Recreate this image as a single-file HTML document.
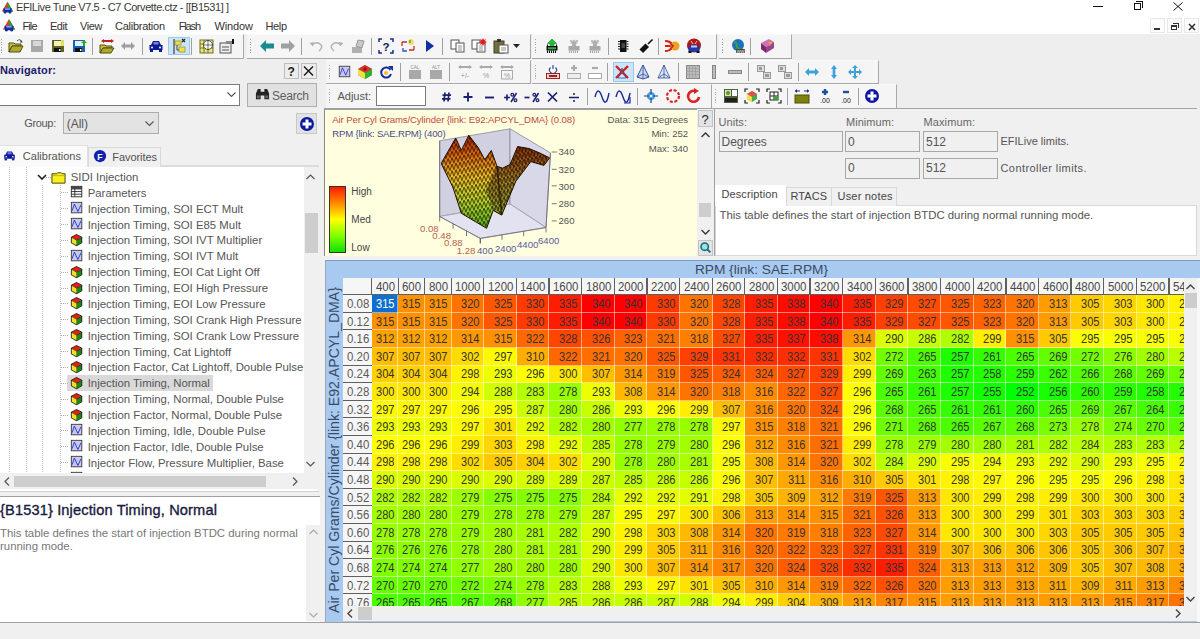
<!DOCTYPE html><html><head><meta charset="utf-8"><style>
html,body{margin:0;padding:0;}
body{width:1200px;height:639px;overflow:hidden;position:relative;background:#f0f0f0;font-family:"Liberation Sans",sans-serif;font-size:12px;color:#000;}
div{position:absolute;box-sizing:border-box;}
.t{white-space:nowrap;}
svg{position:absolute;overflow:visible;}
</style></head><body>

<div style="left:0px;top:0px;width:1200px;height:33.6px;background:#fff;"></div>
<svg style="left:1px;top:1px;" width="13" height="13" viewBox="0 0 16 16"><path d="M8 1l7 12H1z" fill="#e04020"/><path d="M8 1l7 12H8z" fill="#20a040"/><path d="M3 9h10v5H3z" fill="#1030a0"/><circle cx="5" cy="14" r="1.5" fill="#1030a0"/><circle cx="11" cy="14" r="1.5" fill="#1030a0"/><rect x="5" y="9" width="6" height="2" fill="#80a0ff"/></svg>
<div class="t" style="left:16.00px;top:1.69px;font-size:11px;line-height:11px;color:#3a3a3a;letter-spacing:-0.424px;">EFILive Tune V7.5 - C7 Corvette.ctz - [[B1531] ]</div>
<div style="left:1093px;top:6px;width:10px;height:1px;background:#111;"></div>
<div style="left:1133.5px;top:3px;width:7px;height:7px;border:1px solid #111;"></div>
<div style="left:1135.5px;top:1px;width:7px;height:7px;border-top:1px solid #111;border-right:1px solid #111;"></div>
<svg style="left:1173px;top:2px" width="10" height="9"><path d="M0.5 0.5l9 8M9.5 0.5l-9 8" stroke="#111" stroke-width="1"/></svg>
<svg style="left:2px;top:18px;" width="14" height="14" viewBox="0 0 16 16"><path d="M8 1l7 12H1z" fill="#e04020"/><path d="M8 1l7 12H8z" fill="#20a040"/><path d="M3 9h10v5H3z" fill="#1030a0"/><circle cx="5" cy="14" r="1.5" fill="#1030a0"/><circle cx="11" cy="14" r="1.5" fill="#1030a0"/><rect x="5" y="9" width="6" height="2" fill="#80a0ff"/></svg>
<div class="t" style="left:22.50px;top:20.69px;font-size:11px;line-height:11px;color:#333;letter-spacing:-0.908px;">File</div>
<div class="t" style="left:50.00px;top:20.69px;font-size:11px;line-height:11px;color:#333;letter-spacing:-0.485px;">Edit</div>
<div class="t" style="left:80.00px;top:20.69px;font-size:11px;line-height:11px;color:#333;letter-spacing:-0.381px;">View</div>
<div class="t" style="left:115.00px;top:20.69px;font-size:11px;line-height:11px;color:#333;letter-spacing:-0.258px;">Calibration</div>
<div class="t" style="left:178.75px;top:20.69px;font-size:11px;line-height:11px;color:#333;letter-spacing:-1.162px;">Flash</div>
<div class="t" style="left:214.50px;top:20.69px;font-size:11px;line-height:11px;color:#333;letter-spacing:-0.124px;">Window</div>
<div class="t" style="left:265.50px;top:20.69px;font-size:11px;line-height:11px;color:#333;letter-spacing:-0.374px;">Help</div>
<div style="left:1150px;top:18px;width:15px;height:15px;background:#fcfcfc;border:1px solid #e8e8e8;"></div>
<div style="left:1167px;top:18px;width:15px;height:15px;background:#fcfcfc;border:1px solid #e8e8e8;"></div>
<div style="left:1184px;top:18px;width:15px;height:15px;background:#fcfcfc;border:1px solid #e8e8e8;"></div>
<div style="left:1154px;top:28px;width:6px;height:2px;background:#333;"></div>
<div style="left:1171px;top:25px;width:6px;height:5px;border:1px solid #333;border-top-width:2px;"></div>
<div style="left:1173px;top:23px;width:6px;height:5px;border-top:1px solid #333;border-right:1px solid #333;"></div>
<svg style="left:1188px;top:23px" width="8" height="8"><path d="M1 1l6 6M7 1l-6 6" stroke="#333" stroke-width="1.6"/></svg>
<div style="left:0px;top:33.6px;width:1200px;height:75.4px;background:#eeeeee;"></div>
<div style="left:0px;top:34px;width:244px;height:25px;background:#f5f5f5;border-right:1px solid #a8a8a8;border-bottom:1px solid #a8a8a8;border-top:1px solid #fafafa;"></div>
<div style="left:0.5px;top:39.0px;width:1px;height:1.2px;background:#a8a8a8;"></div>
<div style="left:0.5px;top:41.6px;width:1px;height:1.2px;background:#a8a8a8;"></div>
<div style="left:0.5px;top:44.2px;width:1px;height:1.2px;background:#a8a8a8;"></div>
<div style="left:0.5px;top:46.8px;width:1px;height:1.2px;background:#a8a8a8;"></div>
<div style="left:0.5px;top:49.4px;width:1px;height:1.2px;background:#a8a8a8;"></div>
<div style="left:0.5px;top:52.0px;width:1px;height:1.2px;background:#a8a8a8;"></div>
<div style="left:247px;top:34px;width:284px;height:25px;background:#f5f5f5;border-right:1px solid #a8a8a8;border-bottom:1px solid #a8a8a8;border-top:1px solid #fafafa;"></div>
<div style="left:249.5px;top:39.0px;width:1px;height:1.2px;background:#a8a8a8;"></div>
<div style="left:249.5px;top:41.6px;width:1px;height:1.2px;background:#a8a8a8;"></div>
<div style="left:249.5px;top:44.2px;width:1px;height:1.2px;background:#a8a8a8;"></div>
<div style="left:249.5px;top:46.8px;width:1px;height:1.2px;background:#a8a8a8;"></div>
<div style="left:249.5px;top:49.4px;width:1px;height:1.2px;background:#a8a8a8;"></div>
<div style="left:249.5px;top:52.0px;width:1px;height:1.2px;background:#a8a8a8;"></div>
<div style="left:532px;top:34px;width:185px;height:25px;background:#f5f5f5;border-right:1px solid #a8a8a8;border-bottom:1px solid #a8a8a8;border-top:1px solid #fafafa;"></div>
<div style="left:534.5px;top:39.0px;width:1px;height:1.2px;background:#a8a8a8;"></div>
<div style="left:534.5px;top:41.6px;width:1px;height:1.2px;background:#a8a8a8;"></div>
<div style="left:534.5px;top:44.2px;width:1px;height:1.2px;background:#a8a8a8;"></div>
<div style="left:534.5px;top:46.8px;width:1px;height:1.2px;background:#a8a8a8;"></div>
<div style="left:534.5px;top:49.4px;width:1px;height:1.2px;background:#a8a8a8;"></div>
<div style="left:534.5px;top:52.0px;width:1px;height:1.2px;background:#a8a8a8;"></div>
<div style="left:719px;top:34px;width:73px;height:25px;background:#f5f5f5;border-right:1px solid #a8a8a8;border-bottom:1px solid #a8a8a8;border-top:1px solid #fafafa;"></div>
<div style="left:721.5px;top:39.0px;width:1px;height:1.2px;background:#a8a8a8;"></div>
<div style="left:721.5px;top:41.6px;width:1px;height:1.2px;background:#a8a8a8;"></div>
<div style="left:721.5px;top:44.2px;width:1px;height:1.2px;background:#a8a8a8;"></div>
<div style="left:721.5px;top:46.8px;width:1px;height:1.2px;background:#a8a8a8;"></div>
<div style="left:721.5px;top:49.4px;width:1px;height:1.2px;background:#a8a8a8;"></div>
<div style="left:721.5px;top:52.0px;width:1px;height:1.2px;background:#a8a8a8;"></div>
<div style="left:167.7px;top:37px;width:22px;height:18.3px;background:#cce4f7;border:1px solid #99c9ef;"></div>
<svg style="left:7.6px;top:38px;" width="16" height="16" viewBox="0 0 16 16"><path d="M1 5h5l1 1h6v2H4L1 14z" fill="#c8c040" stroke="#505010" stroke-width="1"/><path d="M1 14l3-6h11l-3 6z" fill="#b0a830" stroke="#505010"/><path d="M9 3q3-3 5 1" fill="none" stroke="#555" stroke-width="1"/><path d="M13 2l1.5 2.5-2.5 0z" fill="#333"/></svg>
<svg style="left:29px;top:38px;" width="16" height="16" viewBox="0 0 16 16"><rect x="2" y="2" width="12" height="12" fill="#a8a8a8"/><rect x="4" y="3" width="8" height="5" fill="#d8d8d8"/></svg>
<svg style="left:50px;top:38px;" width="16" height="16" viewBox="0 0 16 16"><rect x="2" y="2" width="12" height="12" fill="#606020"/><rect x="4" y="3" width="8" height="5" fill="#f0f0c0"/><rect x="4" y="10" width="7" height="4" fill="#111"/><rect x="9" y="11" width="1.5" height="2" fill="#eee"/><rect x="11" y="2" width="3" height="6" fill="#e0e060"/></svg>
<svg style="left:71px;top:38px;" width="16" height="16" viewBox="0 0 16 16"><rect x="2" y="2" width="12" height="12" fill="#1a60b0"/><rect x="4" y="3" width="8" height="5" fill="#e0f0ff"/><rect x="4" y="10" width="7" height="4" fill="#111"/><rect x="9" y="11" width="1.5" height="2" fill="#eee"/><path d="M10 5l3-3 3 3h-2v3h-2V5z" fill="#20b020"/></svg>
<svg style="left:99px;top:38px;" width="16" height="16" viewBox="0 0 16 16"><path d="M1 7h5l1 1h6v2H4L1 15z" fill="#c8c040" stroke="#505010"/><path d="M1 15l3-5h11l-3 5z" fill="#b0a830" stroke="#505010"/><path d="M4 3h9" stroke="#c02020" stroke-width="2"/><path d="M2 3l3-2v4z M15 3l-3-2v4z" fill="#c02020"/></svg>
<svg style="left:120px;top:38px;" width="16" height="16" viewBox="0 0 16 16"><path d="M1 8l4-4v2.5h6V4l4 4-4 4V9.5H5V12z" fill="#a0a0a0"/></svg>
<svg style="left:148px;top:38px;" width="16" height="16" viewBox="0 0 16 16"><path d="M3 7l2-4h6l2 4h1.5v5h-13V7z" fill="#0a1a9a"/><rect x="5.5" y="4" width="5" height="2.5" fill="#8080d0"/><circle cx="4" cy="9.5" r="1" fill="#fff"/><circle cx="12" cy="9.5" r="1" fill="#fff"/><rect x="2" y="12" width="3" height="2" fill="#0a1a9a"/><rect x="11" y="12" width="3" height="2" fill="#0a1a9a"/></svg>
<svg style="left:170.5px;top:38px;" width="16" height="16" viewBox="0 0 16 16"><path d="M3 1v15" stroke="#222"/><rect x="4" y="3" width="6" height="4" fill="#f0e040" stroke="#808020" stroke-width="0.6"/><rect x="8" y="9" width="6" height="5" fill="#f0e040" stroke="#808020" stroke-width="0.6"/><path d="M6 7v5h2" fill="none" stroke="#444"/><path d="M11 1l3 3M14 1l-3 3" stroke="#222" stroke-width="1.2"/></svg>
<svg style="left:198px;top:38px;" width="16" height="16" viewBox="0 0 16 16"><rect x="2" y="2" width="13" height="13" fill="#e8e880" stroke="#707020"/><path d="M2 6h13M2 10h13M6 2v13M10 2v13" stroke="#707020"/><circle cx="10" cy="7" r="4.5" fill="#fff" stroke="#333" stroke-width="0.8"/><path d="M10 2v10M5 7h10" stroke="#333" stroke-width="0.7"/></svg>
<svg style="left:219px;top:38px;" width="16" height="16" viewBox="0 0 16 16"><rect x="1" y="5" width="11" height="10" fill="#eee" stroke="#555"/><path d="M3 9h7M3 12h7" stroke="#555"/><path d="M7 3h6l1 3H7z" fill="#888"/><rect x="13" y="1" width="2" height="5" fill="#111"/></svg>
<div style="left:91.7px;top:38px;width:1px;height:17px;background:#a0a0a0;"></div>
<div style="left:141.7px;top:38px;width:1px;height:17px;background:#a0a0a0;"></div>
<div style="left:191px;top:38px;width:1px;height:17px;background:#a0a0a0;"></div>
<svg style="left:259px;top:38px;" width="16" height="16" viewBox="0 0 16 16"><path d="M1 8l6-6v3.5h8v5H7V14z" fill="#1a8a90"/></svg>
<svg style="left:280px;top:38px;" width="16" height="16" viewBox="0 0 16 16"><path d="M15 8l-6-6v3.5H1v5h8V14z" fill="#a0a0a0"/></svg>
<svg style="left:308px;top:38px;" width="16" height="16" viewBox="0 0 16 16"><path d="M4 7q4-4 8-1t-1 7" fill="none" stroke="#b0b0b0" stroke-width="1.5"/><path d="M1.5 5l4.5-1-1 4.5z" fill="#b0b0b0"/></svg>
<svg style="left:329px;top:38px;" width="16" height="16" viewBox="0 0 16 16"><path d="M12 7q-4-4-8-1t1 7" fill="none" stroke="#b0b0b0" stroke-width="1.5"/><path d="M14.5 5l-4.5-1 1 4.5z" fill="#b0b0b0"/></svg>
<svg style="left:350px;top:38px;" width="16" height="16" viewBox="0 0 16 16"><path d="M2 9h10v6H2z" fill="#b0b0b0"/><path d="M8 2l6 1-2 7-6-2z" fill="#c8c8c8" stroke="#999"/></svg>
<svg style="left:378px;top:38px;" width="16" height="16" viewBox="0 0 16 16"><path d="M1 4V1h3M12 1h3v3M15 12v3h-3M4 15H1v-3" fill="none" stroke="#1a2a8a" stroke-width="1.5"/><text x="8" y="12.5" font-size="11.5" font-weight="bold" text-anchor="middle" fill="#101a50" font-family="Liberation Sans">?</text></svg>
<svg style="left:400px;top:38px;" width="16" height="16" viewBox="0 0 16 16"><path d="M2 4h5M2 4v4M14 12H9M14 12V8" fill="none" stroke="#c03030" stroke-width="1.3"/><circle cx="11" cy="4" r="3" fill="#f0e060"/><path d="M3 10v3h4" fill="none" stroke="#3050c0" stroke-width="1.3"/><path d="M10 2v3" stroke="#3050c0"/></svg>
<svg style="left:422px;top:38px;" width="16" height="16" viewBox="0 0 16 16"><path d="M4 2l8 6-8 6z" fill="#1030a0"/></svg>
<svg style="left:450px;top:38px;" width="16" height="16" viewBox="0 0 16 16"><rect x="1" y="2" width="8" height="9" fill="#fff" stroke="#555"/><rect x="6" y="5" width="8" height="9" fill="#fff" stroke="#555"/><path d="M8 8h4M8 10h4M8 12h4" stroke="#777" stroke-width="0.8"/></svg>
<svg style="left:471px;top:38px;" width="16" height="16" viewBox="0 0 16 16"><rect x="1" y="2" width="8" height="9" fill="#fff" stroke="#555"/><rect x="6" y="5" width="8" height="9" fill="#fff" stroke="#555"/><path d="M8 8h4M8 10h4M8 12h4" stroke="#777" stroke-width="0.8"/><path d="M12 0l1 2 2-1-1 2 2 1-2 1 1 2-2-1-1 2-1-2-2 1 1-2-2-1 2-1-1-2 2 1z" fill="#e02020"/></svg>
<svg style="left:493px;top:38px;" width="16" height="16" viewBox="0 0 16 16"><rect x="1" y="3" width="10" height="12" fill="#707038" stroke="#404020"/><rect x="4" y="1" width="4" height="3" fill="#333"/><rect x="6" y="7" width="9" height="8" fill="#fff" stroke="#555"/><path d="M8 10h5M8 12h5" stroke="#777" stroke-width="0.8"/></svg>
<svg style="left:513px;top:44px" width="7" height="4"><path d="M0 0h7l-3.5 4z" fill="#222"/></svg>
<div style="left:301px;top:38px;width:1px;height:17px;background:#a0a0a0;"></div>
<div style="left:371px;top:38px;width:1px;height:17px;background:#a0a0a0;"></div>
<div style="left:442px;top:38px;width:1px;height:17px;background:#a0a0a0;"></div>
<svg style="left:544px;top:38px;" width="16" height="16" viewBox="0 0 16 16"><path d="M8 1l4.5 4.5H10v3H6v-3H3.5z" fill="#20c040" stroke="#108020" stroke-width="0.6"/><rect x="2.5" y="8" width="11" height="4.5" fill="#111"/><rect x="4" y="9.3" width="8" height="2" fill="#30b040"/><path d="M3.5 12.5v2.5M5.5 12.5v2.5M7.5 12.5v2.5M9.5 12.5v2.5M11.5 12.5v2.5M3.5 8v-1.5M12.5 8v-1.5" stroke="#111" stroke-width="1.1"/></svg>
<svg style="left:566px;top:38px;" width="16" height="16" viewBox="0 0 16 16"><path d="M8 1.5l4 4H10v3H6v-3H4z" fill="#b0b0b0"/><path d="M4 3h2M10 3h2" stroke="#aaa" stroke-width="1.5"/><rect x="2.5" y="8" width="11" height="4.5" fill="#a8a8a8"/><path d="M3.5 12.5v2.5M5.5 12.5v2.5M7.5 12.5v2.5M9.5 12.5v2.5M11.5 12.5v2.5" stroke="#aaa" stroke-width="1.1"/></svg>
<svg style="left:587px;top:38px;" width="16" height="16" viewBox="0 0 16 16"><path d="M8 1.5l4 4H10v3H6v-3H4z" fill="#b0b0b0"/><path d="M4 3h2M10 3h2" stroke="#aaa" stroke-width="1.5"/><rect x="2.5" y="8" width="11" height="4.5" fill="#a8a8a8"/><path d="M3.5 12.5v2.5M5.5 12.5v2.5M7.5 12.5v2.5M9.5 12.5v2.5M11.5 12.5v2.5" stroke="#aaa" stroke-width="1.1"/></svg>
<svg style="left:615px;top:38px;" width="16" height="16" viewBox="0 0 16 16"><rect x="5" y="2" width="6.5" height="12" fill="#111"/><path d="M3 3.5h2M3 6h2M3 8.5h2M3 11h2M11.5 3.5h2M11.5 6h2M11.5 8.5h2M11.5 11h2" stroke="#222" stroke-width="1.2"/><rect x="6.5" y="5" width="3.5" height="5" fill="#444"/></svg>
<svg style="left:638px;top:38px;" width="16" height="16" viewBox="0 0 16 16"><path d="M10 6l4.5-4.5" stroke="#111" stroke-width="1.6"/><path d="M1.5 11.5l6-6 3.5 3.5-6 6z" fill="#111"/><path d="M3 13.5l1 1" stroke="#fff" stroke-width="0.8"/></svg>
<svg style="left:664px;top:38px;" width="16" height="16" viewBox="0 0 16 16"><path d="M1 3q5 0 7 3M1 8h6M1 13q5 0 7-3" fill="none" stroke="#d02010" stroke-width="2"/><circle cx="11" cy="8" r="4.5" fill="#f0a020"/><path d="M6 5l3 3-3 3" fill="none" stroke="#c02010" stroke-width="1.5"/></svg>
<svg style="left:686px;top:38px;" width="16" height="16" viewBox="0 0 16 16"><circle cx="8" cy="7.5" r="7" fill="#b01818"/><path d="M5 3l2 3M11 3l-2 3" stroke="#f0c0c0" stroke-width="1"/><path d="M2.5 10l1.5-3h8l1.5 3v3.5h-11z" fill="#1a3ab0"/><rect x="5" y="7.5" width="6" height="2" fill="#c0d0ff"/><rect x="2.5" y="13" width="3" height="2" fill="#111"/><rect x="10.5" y="13" width="3" height="2" fill="#111"/></svg>
<div style="left:608px;top:38px;width:1px;height:17px;background:#a0a0a0;"></div>
<div style="left:658px;top:38px;width:1px;height:17px;background:#a0a0a0;"></div>
<svg style="left:730px;top:38px;" width="16" height="16" viewBox="0 0 16 16"><circle cx="8" cy="7" r="6" fill="#2070c0"/><path d="M4 4q3 1 3 4t3 3" fill="none" stroke="#40a040" stroke-width="2"/><rect x="6" y="11" width="9" height="4" rx="1" fill="#444"/><text x="10.5" y="14.5" font-size="4" fill="#fff" text-anchor="middle" font-family="Liberation Sans">WW</text></svg>
<svg style="left:759px;top:38px;" width="16" height="16" viewBox="0 0 16 16"><path d="M2 5l8-4 5 3-8 5z" fill="#d070b0"/><path d="M2 5l5 4v6l-5-4z" fill="#7a2a6a"/><path d="M7 9l8-5v6l-8 5z" fill="#a04090"/><text x="9" y="8" font-size="6" fill="#f0c020" font-family="Liberation Sans" font-weight="bold">?</text></svg>
<div style="left:750px;top:38px;width:1px;height:17px;background:#a0a0a0;"></div>
<div style="left:326px;top:60px;width:205px;height:24px;background:#f5f5f5;border-right:1px solid #a8a8a8;border-bottom:1px solid #a8a8a8;border-top:1px solid #fafafa;"></div>
<div style="left:328.5px;top:65.0px;width:1px;height:1.2px;background:#a8a8a8;"></div>
<div style="left:328.5px;top:67.6px;width:1px;height:1.2px;background:#a8a8a8;"></div>
<div style="left:328.5px;top:70.2px;width:1px;height:1.2px;background:#a8a8a8;"></div>
<div style="left:328.5px;top:72.8px;width:1px;height:1.2px;background:#a8a8a8;"></div>
<div style="left:328.5px;top:75.4px;width:1px;height:1.2px;background:#a8a8a8;"></div>
<div style="left:328.5px;top:78.0px;width:1px;height:1.2px;background:#a8a8a8;"></div>
<div style="left:532px;top:60px;width:347px;height:24px;background:#f5f5f5;border-right:1px solid #a8a8a8;border-bottom:1px solid #a8a8a8;border-top:1px solid #fafafa;"></div>
<div style="left:534.5px;top:65.0px;width:1px;height:1.2px;background:#a8a8a8;"></div>
<div style="left:534.5px;top:67.6px;width:1px;height:1.2px;background:#a8a8a8;"></div>
<div style="left:534.5px;top:70.2px;width:1px;height:1.2px;background:#a8a8a8;"></div>
<div style="left:534.5px;top:72.8px;width:1px;height:1.2px;background:#a8a8a8;"></div>
<div style="left:534.5px;top:75.4px;width:1px;height:1.2px;background:#a8a8a8;"></div>
<div style="left:534.5px;top:78.0px;width:1px;height:1.2px;background:#a8a8a8;"></div>
<div style="left:612.5px;top:61.8px;width:21px;height:20px;background:#cce4f7;border:1px solid #99c9ef;"></div>
<svg style="left:338px;top:65px;" width="13" height="13" viewBox="0 0 16 16"><rect x="1.5" y="1.5" width="13" height="13" fill="#c8c8e8" stroke="#333"/><path d="M2.5 12L5.5 3.5 9.5 12.5 13 4.5" fill="none" stroke="#2a3ad0" stroke-width="1.1"/></svg>
<svg style="left:357px;top:64px;" width="16" height="16" viewBox="0 0 16 16"><path d="M8 1l7 4v6l-7 4-7-4V5z" fill="#20a020"/><path d="M8 1l7 4-7 4-7-4z" fill="#e03030"/><path d="M1 5l7 4v6l-7-4z" fill="#f0e040"/><path d="M8 9l7-4v6l-7 4z" fill="#30b030"/><circle cx="8" cy="5" r="1.8" fill="#a01010"/></svg>
<svg style="left:378px;top:64px;" width="16" height="16" viewBox="0 0 16 16"><path d="M12.5 6A5 5 0 1 0 13 10" fill="none" stroke="#1a2a9a" stroke-width="2"/><path d="M10 2h5v5z" fill="#1a2a9a"/><circle cx="8" cy="9" r="2" fill="#f0c020"/></svg>
<svg style="left:407px;top:64px;" width="16" height="16" viewBox="0 0 16 16"><text x="8" y="5" font-size="4.5" fill="#888" text-anchor="middle" font-family="Liberation Sans">CAL</text><rect x="2" y="6" width="12" height="9" fill="#a8a8a8"/></svg>
<svg style="left:428px;top:64px;" width="16" height="16" viewBox="0 0 16 16"><text x="8" y="5" font-size="4.5" fill="#888" text-anchor="middle" font-family="Liberation Sans">ALT</text><rect x="2" y="6" width="12" height="9" fill="#a8a8a8"/></svg>
<svg style="left:457px;top:64px;" width="16" height="16" viewBox="0 0 16 16"><path d="M2 3h12" stroke="#aaa" stroke-width="2"/><path d="M1 3l3-2v4zM15 3l-3-2v4z" fill="#aaa"/><text x="8" y="14" font-size="7" fill="#999" text-anchor="middle" font-family="Liberation Sans">+/-</text></svg>
<svg style="left:478px;top:64px;" width="16" height="16" viewBox="0 0 16 16"><path d="M2 3h12" stroke="#aaa" stroke-width="2"/><path d="M1 3l3-2v4zM15 3l-3-2v4z" fill="#aaa"/><text x="8" y="14" font-size="7" fill="#999" text-anchor="middle" font-family="Liberation Sans">%</text></svg>
<svg style="left:499px;top:64px;" width="16" height="16" viewBox="0 0 16 16"><path d="M2 3h12" stroke="#aaa" stroke-width="2"/><path d="M1 3l3-2v4zM15 3l-3-2v4z" fill="#aaa"/><rect x="2.5" y="6.5" width="11" height="8.5" fill="none" stroke="#aaa"/><text x="8" y="13.5" font-size="7" fill="#999" text-anchor="middle" font-family="Liberation Sans">%</text></svg>
<div style="left:399.5px;top:63px;width:1px;height:18px;background:#a0a0a0;"></div>
<div style="left:449px;top:63px;width:1px;height:18px;background:#a0a0a0;"></div>
<svg style="left:544.5px;top:64px;" width="16" height="16" viewBox="0 0 16 16"><path d="M5.5 3.5a3.5 3.5 0 1 0 5 0" fill="none" stroke="#3050a0" stroke-width="1.2"/><path d="M8 1v4" stroke="#3050a0" stroke-width="1.2"/><rect x="1.5" y="9.5" width="13" height="5" fill="#f0d0d0" stroke="#a02020"/><rect x="4" y="11" width="8" height="2" fill="#a02020"/></svg>
<svg style="left:566px;top:64px;" width="16" height="16" viewBox="0 0 16 16"><path d="M8 1v6M5 4h6" stroke="#aaa" stroke-width="2.2"/><rect x="1.5" y="9.5" width="13" height="5" fill="#eee" stroke="#aaa"/></svg>
<svg style="left:587px;top:64px;" width="16" height="16" viewBox="0 0 16 16"><path d="M5 4h6" stroke="#aaa" stroke-width="2.2"/><rect x="1.5" y="9.5" width="13" height="5" fill="#fff" stroke="#aaa"/></svg>
<svg style="left:614px;top:64px;" width="16" height="16" viewBox="0 0 16 16"><path d="M2 2l12 12M14 2L2 14" stroke="#d02020" stroke-width="2.4"/><path d="M8 4l4 10H4z" fill="none" stroke="#3050a0" stroke-width="0.8"/></svg>
<svg style="left:635px;top:64px;" width="16" height="16" viewBox="0 0 16 16"><path d="M8 1l6 12-6 2-6-2z" fill="#d0d8f0" stroke="#3050a0"/><path d="M8 1v14M2 13l6-3 6 3" fill="none" stroke="#3050a0" stroke-width="0.8"/></svg>
<svg style="left:656px;top:64px;" width="16" height="16" viewBox="0 0 16 16"><path d="M8 1l6 13H2z" fill="#e0e8f8" stroke="#3050a0" stroke-width="0.8"/><path d="M8 1v13M2 14l6-4 6 4" fill="none" stroke="#3050a0" stroke-width="0.8"/></svg>
<svg style="left:685px;top:64px;" width="16" height="16" viewBox="0 0 16 16"><rect x="1.5" y="1.5" width="13" height="13" fill="#bbb" stroke="#888"/><path d="M1 4.5h14M1 7.5h14M1 10.5h14M4.5 1v14M7.5 1v14M10.5 1v14" stroke="#999" stroke-width="0.6"/></svg>
<svg style="left:706px;top:64px;" width="16" height="16" viewBox="0 0 16 16"><rect x="6.5" y="1.5" width="3" height="13" fill="#bbb" stroke="#888"/></svg>
<svg style="left:727px;top:64px;" width="16" height="16" viewBox="0 0 16 16"><rect x="1.5" y="6.5" width="13" height="3" fill="#bbb" stroke="#888"/></svg>
<svg style="left:756px;top:64px;" width="16" height="16" viewBox="0 0 16 16"><rect x="1.5" y="1.5" width="7" height="6" fill="#ddd" stroke="#999"/><rect x="7.5" y="8.5" width="7" height="6" fill="#ddd" stroke="#999"/><rect x="3" y="3" width="3" height="3" fill="#999"/><rect x="9" y="10" width="4" height="3" fill="#999"/></svg>
<svg style="left:777px;top:64px;" width="16" height="16" viewBox="0 0 16 16"><rect x="1.5" y="1.5" width="7" height="6" fill="#ddd" stroke="#999"/><rect x="7.5" y="8.5" width="7" height="6" fill="#ddd" stroke="#999"/><rect x="3" y="3" width="3" height="3" fill="#999"/><rect x="9" y="10" width="4" height="3" fill="#999"/></svg>
<svg style="left:804px;top:64px;" width="16" height="16" viewBox="0 0 16 16"><path d="M1 8l4-4v2.5h6V4l4 4-4 4V9.5H5V12z" fill="#40a0d8"/></svg>
<svg style="left:826px;top:64px;" width="16" height="16" viewBox="0 0 16 16"><path d="M8 1l3 4H9.3v6H11l-3 4-3-4h1.7V5H5z" fill="#40a0d8"/></svg>
<svg style="left:847px;top:64px;" width="16" height="16" viewBox="0 0 16 16"><path d="M8 1l3 3H9v3h3V5l3 3-3 3V9H9v3h2l-3 3-3-3h2V9H4v2L1 8l3-3v2h3V4H5z" fill="#40a0d8"/></svg>
<div style="left:606.7px;top:63px;width:1px;height:18px;background:#a0a0a0;"></div>
<div style="left:678px;top:63px;width:1px;height:18px;background:#a0a0a0;"></div>
<div style="left:748px;top:63px;width:1px;height:18px;background:#a0a0a0;"></div>
<div style="left:797.5px;top:63px;width:1px;height:18px;background:#a0a0a0;"></div>
<div style="left:326px;top:84px;width:385.70000000000005px;height:25px;background:#f5f5f5;border-right:1px solid #a8a8a8;border-bottom:1px solid #a8a8a8;border-top:1px solid #fafafa;"></div>
<div style="left:328.5px;top:89.0px;width:1px;height:1.2px;background:#a8a8a8;"></div>
<div style="left:328.5px;top:91.6px;width:1px;height:1.2px;background:#a8a8a8;"></div>
<div style="left:328.5px;top:94.2px;width:1px;height:1.2px;background:#a8a8a8;"></div>
<div style="left:328.5px;top:96.8px;width:1px;height:1.2px;background:#a8a8a8;"></div>
<div style="left:328.5px;top:99.4px;width:1px;height:1.2px;background:#a8a8a8;"></div>
<div style="left:328.5px;top:102.0px;width:1px;height:1.2px;background:#a8a8a8;"></div>
<div style="left:712px;top:84px;width:185px;height:25px;background:#f5f5f5;border-right:1px solid #a8a8a8;border-bottom:1px solid #a8a8a8;border-top:1px solid #fafafa;"></div>
<div style="left:714.5px;top:89.0px;width:1px;height:1.2px;background:#a8a8a8;"></div>
<div style="left:714.5px;top:91.6px;width:1px;height:1.2px;background:#a8a8a8;"></div>
<div style="left:714.5px;top:94.2px;width:1px;height:1.2px;background:#a8a8a8;"></div>
<div style="left:714.5px;top:96.8px;width:1px;height:1.2px;background:#a8a8a8;"></div>
<div style="left:714.5px;top:99.4px;width:1px;height:1.2px;background:#a8a8a8;"></div>
<div style="left:714.5px;top:102.0px;width:1px;height:1.2px;background:#a8a8a8;"></div>
<div class="t" style="left:337.50px;top:90.69px;font-size:11px;line-height:11px;color:#555;letter-spacing:-0.021px;">Adjust:</div>
<div style="left:376px;top:86px;width:50px;height:20px;background:#fff;border:1px solid #7a7a7a;"></div>
<svg style="left:440px;top:90px" width="150" height="16" viewBox="440 90 150 16"><path d="M445 92.5l-1 9M449 92.5l-1 9M442.5 95.2h8.5M442 98.8h8.5" stroke="#1a2070" stroke-width="1.7"/><path d="M468 92.5v9M463.5 97h9" stroke="#1a2070" stroke-width="1.9"/><path d="M485 97.5h9" stroke="#1a2070" stroke-width="1.9"/><path d="M507 94.5v6M504 97.5h6" stroke="#1a2070" stroke-width="1.7"/><path d="M516.5 93l-5.5 9" stroke="#1a2070" stroke-width="1.5"/><circle cx="512.3" cy="94.8" r="1.4" fill="none" stroke="#1a2070" stroke-width="1.2"/><circle cx="515.5" cy="100.2" r="1.4" fill="none" stroke="#1a2070" stroke-width="1.2"/><path d="M524.5 97.5h5" stroke="#1a2070" stroke-width="1.7"/><path d="M538.5 93l-5.5 9" stroke="#1a2070" stroke-width="1.5"/><circle cx="534.3" cy="94.8" r="1.4" fill="none" stroke="#1a2070" stroke-width="1.2"/><circle cx="537.5" cy="100.2" r="1.4" fill="none" stroke="#1a2070" stroke-width="1.2"/><path d="M548 92.5l9 9M557 92.5l-9 9" stroke="#1a2070" stroke-width="1.7"/><path d="M569 97.5h10" stroke="#1a2070" stroke-width="1.5"/><circle cx="574" cy="94" r="1" fill="#1a2070"/><circle cx="574" cy="101" r="1" fill="#1a2070"/></svg>
<svg style="left:593.5px;top:88px;" width="16" height="16" viewBox="0 0 16 16"><path d="M1 9q3-12 7 0t7-4" fill="none" stroke="#1a2a9a" stroke-width="1.4"/></svg>
<svg style="left:615px;top:88px;" width="16" height="16" viewBox="0 0 16 16"><path d="M1 9q3-12 7 0t7-4" fill="none" stroke="#1a2a9a" stroke-width="1.4"/><path d="M9 15h6V9" fill="none" stroke="#1a2a9a" stroke-width="1.2"/></svg>
<svg style="left:643px;top:88px;" width="16" height="16" viewBox="0 0 16 16"><circle cx="8" cy="8" r="4" fill="#40a8e8"/><path d="M8 1v14M1 8h14" stroke="#1a3a9a" stroke-width="1.2"/><circle cx="8" cy="8" r="1.5" fill="#fff"/></svg>
<svg style="left:664.5px;top:88px;" width="16" height="16" viewBox="0 0 16 16"><circle cx="8" cy="8" r="6" fill="none" stroke="#e02020" stroke-width="2.2" stroke-dasharray="3 1.7"/></svg>
<svg style="left:685.5px;top:88px;" width="16" height="16" viewBox="0 0 16 16"><path d="M13 9A5.5 5.5 0 1 1 9 3" fill="none" stroke="#e02020" stroke-width="2.6"/><path d="M8 0l5 3-5 3z" fill="#e02020"/></svg>
<svg style="left:723px;top:88px;" width="16" height="16" viewBox="0 0 16 16"><rect x="1" y="1" width="14" height="14" fill="#506040"/><rect x="2" y="2" width="6" height="6" fill="#e0e0a0"/><circle cx="5" cy="5" r="2" fill="#40a040"/><rect x="9" y="2" width="5" height="6" fill="#fff"/><rect x="2" y="10" width="12" height="4" fill="#202020"/></svg>
<svg style="left:744px;top:88px;" width="16" height="16" viewBox="0 0 16 16"><path d="M1 4V1h3M12 1h3v3M15 12v3h-3M4 15H1v-3" fill="none" stroke="#222" stroke-width="1.2"/><path d="M8 3l5 3v5l-5 3-5-3V6z" fill="#40b040"/><path d="M8 3l5 3-5 3-5-3z" fill="#e05050"/><path d="M3 6l5 3v5l-5-3z" fill="#f0e040"/></svg>
<svg style="left:766px;top:88px;" width="16" height="16" viewBox="0 0 16 16"><path d="M1 4V1h3M12 1h3v3M15 12v3h-3M4 15H1v-3" fill="none" stroke="#222" stroke-width="1.2"/><rect x="4" y="4" width="8" height="8" fill="#fff" stroke="#222"/><path d="M4 8h8M8 4v8" stroke="#222"/><rect x="8" y="8" width="4" height="4" fill="#40a040"/></svg>
<svg style="left:794px;top:88px;" width="16" height="16" viewBox="0 0 16 16"><path d="M1 3h5M10 3h5" stroke="#1a2a8a" stroke-width="1.2"/><path d="M1 3l2-2v4zM15 3l-2-2v4z" fill="#1a2a8a"/><rect x="1" y="7" width="14" height="8" fill="#808010" stroke="#505000"/></svg>
<svg style="left:817px;top:88px;" width="16" height="16" viewBox="0 0 16 16"><path d="M8 1v6M5 4h6" stroke="#1a50a0" stroke-width="2.4"/><text x="8" y="15" font-size="7" fill="#222" text-anchor="middle" font-family="Liberation Sans">.00</text></svg>
<svg style="left:838px;top:88px;" width="16" height="16" viewBox="0 0 16 16"><path d="M5 4h6" stroke="#1a50a0" stroke-width="2.4"/><text x="8" y="15" font-size="7" fill="#222" text-anchor="middle" font-family="Liberation Sans">.00</text></svg>
<svg style="left:864px;top:88px;" width="16" height="16" viewBox="0 0 16 16"><circle cx="8" cy="8" r="7" fill="#0a1aa0"/><path d="M8 3.5v9M3.5 8h9" stroke="#fff" stroke-width="3"/></svg>
<div style="left:586.7px;top:88px;width:1px;height:17px;background:#a0a0a0;"></div>
<div style="left:636.7px;top:88px;width:1px;height:17px;background:#a0a0a0;"></div>
<div style="left:786.7px;top:88px;width:1px;height:17px;background:#a0a0a0;"></div>
<div style="left:857.5px;top:88px;width:1px;height:17px;background:#a0a0a0;"></div>
<div class="t" style="left:0.00px;top:65.39px;font-size:11px;line-height:11px;color:#1a1a6a;letter-spacing:0.178px;font-weight:bold;">Navigator:</div>
<div style="left:284px;top:63px;width:15px;height:16px;background:#ececec;border:1px solid #bdbdbd;"></div>
<div class="t" style="left:287.50px;top:65.84px;font-size:12px;line-height:12px;color:#1a1a1a;font-weight:bold;">?</div>
<div style="left:300.5px;top:63px;width:16px;height:16px;background:#ececec;border:1px solid #bdbdbd;"></div>
<svg style="left:303px;top:66px" width="11" height="10"><path d="M1 0.5l9 9M10 0.5l-9 9" stroke="#111" stroke-width="1.3"/></svg>
<div style="left:-2px;top:84px;width:242px;height:22px;background:#fff;border:1px solid #7a7a7a;"></div>
<svg style="left:227px;top:92px" width="9" height="6"><path d="M0.5 0.5l4 4 4-4" fill="none" stroke="#555" stroke-width="1.1"/></svg>
<div style="left:247px;top:83px;width:70px;height:24px;background:#e1e1e1;border:1px solid #adadad;"></div>
<svg style="left:255px;top:87px;" width="15" height="15" viewBox="0 0 16 16"><path d="M1 7l2-5h3v3h4V2h3l2 5v6h-5V9H6v4H1z" fill="#222"/><rect x="2" y="9" width="3" height="3" fill="#666"/><rect x="11" y="9" width="3" height="3" fill="#666"/></svg>
<div class="t" style="left:272.00px;top:89.84px;font-size:12px;line-height:12px;color:#606060;letter-spacing:-0.204px;">Search</div>
<div class="t" style="left:24.20px;top:118.19px;font-size:11px;line-height:11px;color:#555;letter-spacing:-0.325px;">Group:</div>
<div style="left:62.8px;top:112.4px;width:96px;height:21.4px;background:#e3e3e3;border:1px solid #adadad;"></div>
<div class="t" style="left:66.70px;top:117.84px;font-size:12px;line-height:12px;color:#555;">(All)</div>
<svg style="left:145px;top:121px" width="9" height="6"><path d="M0.5 0.5l4 4 4-4" fill="none" stroke="#555" stroke-width="1.1"/></svg>
<div style="left:296px;top:113px;width:21px;height:21px;background:#e1e1e1;border:1px solid #c8c8c8;"></div>
<svg style="left:298.5px;top:115.5px;" width="16" height="16" viewBox="0 0 16 16"><circle cx="8" cy="8" r="7" fill="#0a1aa0"/><path d="M8 3.5v9M3.5 8h9" stroke="#fff" stroke-width="3"/></svg>
<div style="left:0px;top:145px;width:88px;height:22px;background:#fafafa;border-top:1px solid #e0e0e0;border-right:1px solid #e0e0e0;"></div>
<svg style="left:3px;top:149px;" width="13" height="13" viewBox="0 0 16 16"><path d="M3 7l2-4h6l2 4h1.5v5h-13V7z" fill="#0a1a9a"/><rect x="5.5" y="4" width="5" height="2.5" fill="#8080d0"/><circle cx="4" cy="9.5" r="1" fill="#fff"/><circle cx="12" cy="9.5" r="1" fill="#fff"/><rect x="2" y="12" width="3" height="2" fill="#0a1a9a"/><rect x="11" y="12" width="3" height="2" fill="#0a1a9a"/></svg>
<div class="t" style="left:22.80px;top:150.69px;font-size:11px;line-height:11px;color:#555;letter-spacing:0.011px;">Calibrations</div>
<div style="left:88px;top:147px;width:73px;height:20px;background:#f0f0f0;border:1px solid #d9d9d9;border-bottom:none;"></div>
<svg style="left:92.5px;top:149px;" width="14" height="14" viewBox="0 0 16 16"><circle cx="8" cy="8" r="7" fill="#1020b0"/><text x="8" y="12" font-size="10" font-weight="bold" text-anchor="middle" fill="#fff" font-family="Liberation Sans">F</text></svg>
<div class="t" style="left:112.30px;top:151.69px;font-size:11px;line-height:11px;color:#505050;letter-spacing:-0.067px;">Favorites</div>
<div style="left:160px;top:165px;width:159px;height:1.5px;background:#dcdcdc;"></div>
<div style="left:0px;top:167px;width:319px;height:325px;background:#fff;border-right:1px solid #e8e8e8;border-bottom:1px solid #cfcfcf;"></div>
<div style="left:9px;top:167px;width:1px;height:307px;background:repeating-linear-gradient(to bottom,#c4c4c4 0 1px,transparent 1px 2px);"></div>
<div style="left:26px;top:167px;width:1px;height:307px;background:repeating-linear-gradient(to bottom,#c4c4c4 0 1px,transparent 1px 2px);"></div>
<div style="left:42px;top:185px;width:1px;height:289px;background:repeating-linear-gradient(to bottom,#c4c4c4 0 1px,transparent 1px 2px);"></div>
<div style="left:60px;top:185px;width:1px;height:289px;background:repeating-linear-gradient(to bottom,#c4c4c4 0 1px,transparent 1px 2px);"></div>
<svg style="left:37px;top:174px" width="10" height="7"><path d="M1 1l4 4 4-4" fill="none" stroke="#222" stroke-width="1.6"/></svg>
<div style="left:46px;top:177px;width:6px;height:1px;background:repeating-linear-gradient(to right,#b0b0b0 0 1px,transparent 1px 2px);"></div>
<svg style="left:50.5px;top:169.5px;" width="15" height="15" viewBox="0 0 16 16"><path d="M1 4h5l1-1h4l1 1h3v10H1z" fill="#f8f020" stroke="#404000"/><path d="M1 6h14" stroke="#909000" stroke-width="0.6"/></svg>
<div class="t" style="left:70.70px;top:171.85px;font-size:11.4px;line-height:11.4px;color:#555;">SIDI Injection</div>
<div style="left:61px;top:192px;width:8px;height:1px;background:repeating-linear-gradient(to right,#b0b0b0 0 1px,transparent 1px 2px);"></div>
<svg style="left:69.5px;top:185.4px;" width="14" height="14" viewBox="0 0 16 16"><rect x="1.5" y="1.5" width="12" height="12" fill="#fff" stroke="#222"/><path d="M1.5 4.5h12M1.5 7.5h12M1.5 10.5h12M5.5 1.5v12" stroke="#222"/><rect x="1.5" y="1.5" width="12" height="3" fill="#444"/></svg>
<div class="t" style="left:87.70px;top:187.85px;font-size:11.4px;line-height:11.4px;color:#555;">Parameters</div>
<div style="left:61px;top:208px;width:8px;height:1px;background:repeating-linear-gradient(to right,#b0b0b0 0 1px,transparent 1px 2px);"></div>
<svg style="left:69.5px;top:201.27px;" width="14" height="14" viewBox="0 0 16 16"><rect x="1.5" y="1.5" width="12" height="12" fill="#c8c8e8" stroke="#333"/><path d="M2.5 11L5 3.5 9 12 12.5 4.5" fill="none" stroke="#2a3ad0" stroke-width="1.1"/></svg>
<div class="t" style="left:87.70px;top:203.72px;font-size:11.4px;line-height:11.4px;color:#555;">Injection Timing, SOI ECT Mult</div>
<div style="left:61px;top:224px;width:8px;height:1px;background:repeating-linear-gradient(to right,#b0b0b0 0 1px,transparent 1px 2px);"></div>
<svg style="left:69.5px;top:217.14000000000001px;" width="14" height="14" viewBox="0 0 16 16"><rect x="1.5" y="1.5" width="12" height="12" fill="#c8c8e8" stroke="#333"/><path d="M2.5 11L5 3.5 9 12 12.5 4.5" fill="none" stroke="#2a3ad0" stroke-width="1.1"/></svg>
<div class="t" style="left:87.70px;top:219.59px;font-size:11.4px;line-height:11.4px;color:#555;">Injection Timing, SOI E85 Mult</div>
<div style="left:61px;top:240px;width:8px;height:1px;background:repeating-linear-gradient(to right,#b0b0b0 0 1px,transparent 1px 2px);"></div>
<svg style="left:69.5px;top:233.01px;" width="14" height="14" viewBox="0 0 16 16"><path d="M7.5 1l6.5 3.5v7L7.5 15 1 11.5v-7z" fill="#222"/><path d="M7.5 2l5.5 3-5.5 3-5.5-3z" fill="#e02020"/><path d="M2 5.5l5.5 3V14L2 11z" fill="#f0e020"/><path d="M8 8.5l5-3V11l-5 3z" fill="#109010"/></svg>
<div class="t" style="left:87.70px;top:235.46px;font-size:11.4px;line-height:11.4px;color:#555;">Injection Timing, SOI IVT Multiplier</div>
<div style="left:61px;top:256px;width:8px;height:1px;background:repeating-linear-gradient(to right,#b0b0b0 0 1px,transparent 1px 2px);"></div>
<svg style="left:69.5px;top:248.88px;" width="14" height="14" viewBox="0 0 16 16"><rect x="1.5" y="1.5" width="12" height="12" fill="#c8c8e8" stroke="#333"/><path d="M2.5 11L5 3.5 9 12 12.5 4.5" fill="none" stroke="#2a3ad0" stroke-width="1.1"/></svg>
<div class="t" style="left:87.70px;top:251.33px;font-size:11.4px;line-height:11.4px;color:#555;">Injection Timing, SOI IVT Mult</div>
<div style="left:61px;top:272px;width:8px;height:1px;background:repeating-linear-gradient(to right,#b0b0b0 0 1px,transparent 1px 2px);"></div>
<svg style="left:69.5px;top:264.75px;" width="14" height="14" viewBox="0 0 16 16"><path d="M7.5 1l6.5 3.5v7L7.5 15 1 11.5v-7z" fill="#222"/><path d="M7.5 2l5.5 3-5.5 3-5.5-3z" fill="#e02020"/><path d="M2 5.5l5.5 3V14L2 11z" fill="#f0e020"/><path d="M8 8.5l5-3V11l-5 3z" fill="#109010"/></svg>
<div class="t" style="left:87.70px;top:267.20px;font-size:11.4px;line-height:11.4px;color:#555;">Injection Timing, EOI Cat Light Off</div>
<div style="left:61px;top:288px;width:8px;height:1px;background:repeating-linear-gradient(to right,#b0b0b0 0 1px,transparent 1px 2px);"></div>
<svg style="left:69.5px;top:280.62px;" width="14" height="14" viewBox="0 0 16 16"><path d="M7.5 1l6.5 3.5v7L7.5 15 1 11.5v-7z" fill="#222"/><path d="M7.5 2l5.5 3-5.5 3-5.5-3z" fill="#e02020"/><path d="M2 5.5l5.5 3V14L2 11z" fill="#f0e020"/><path d="M8 8.5l5-3V11l-5 3z" fill="#109010"/></svg>
<div class="t" style="left:87.70px;top:283.07px;font-size:11.4px;line-height:11.4px;color:#555;">Injection Timing, EOI High Pressure</div>
<div style="left:61px;top:303px;width:8px;height:1px;background:repeating-linear-gradient(to right,#b0b0b0 0 1px,transparent 1px 2px);"></div>
<svg style="left:69.5px;top:296.49px;" width="14" height="14" viewBox="0 0 16 16"><path d="M7.5 1l6.5 3.5v7L7.5 15 1 11.5v-7z" fill="#222"/><path d="M7.5 2l5.5 3-5.5 3-5.5-3z" fill="#e02020"/><path d="M2 5.5l5.5 3V14L2 11z" fill="#f0e020"/><path d="M8 8.5l5-3V11l-5 3z" fill="#109010"/></svg>
<div class="t" style="left:87.70px;top:298.94px;font-size:11.4px;line-height:11.4px;color:#555;">Injection Timing, EOI Low Pressure</div>
<div style="left:61px;top:319px;width:8px;height:1px;background:repeating-linear-gradient(to right,#b0b0b0 0 1px,transparent 1px 2px);"></div>
<svg style="left:69.5px;top:312.36px;" width="14" height="14" viewBox="0 0 16 16"><path d="M7.5 1l6.5 3.5v7L7.5 15 1 11.5v-7z" fill="#222"/><path d="M7.5 2l5.5 3-5.5 3-5.5-3z" fill="#e02020"/><path d="M2 5.5l5.5 3V14L2 11z" fill="#f0e020"/><path d="M8 8.5l5-3V11l-5 3z" fill="#109010"/></svg>
<div class="t" style="left:87.70px;top:314.81px;font-size:11.4px;line-height:11.4px;color:#555;">Injection Timing, SOI Crank High Pressure</div>
<div style="left:61px;top:335px;width:8px;height:1px;background:repeating-linear-gradient(to right,#b0b0b0 0 1px,transparent 1px 2px);"></div>
<svg style="left:69.5px;top:328.23px;" width="14" height="14" viewBox="0 0 16 16"><path d="M7.5 1l6.5 3.5v7L7.5 15 1 11.5v-7z" fill="#222"/><path d="M7.5 2l5.5 3-5.5 3-5.5-3z" fill="#e02020"/><path d="M2 5.5l5.5 3V14L2 11z" fill="#f0e020"/><path d="M8 8.5l5-3V11l-5 3z" fill="#109010"/></svg>
<div class="t" style="left:87.70px;top:330.68px;font-size:11.4px;line-height:11.4px;color:#555;">Injection Timing, SOI Crank Low Pressure</div>
<div style="left:61px;top:351px;width:8px;height:1px;background:repeating-linear-gradient(to right,#b0b0b0 0 1px,transparent 1px 2px);"></div>
<svg style="left:69.5px;top:344.1px;" width="14" height="14" viewBox="0 0 16 16"><path d="M7.5 1l6.5 3.5v7L7.5 15 1 11.5v-7z" fill="#222"/><path d="M7.5 2l5.5 3-5.5 3-5.5-3z" fill="#e02020"/><path d="M2 5.5l5.5 3V14L2 11z" fill="#f0e020"/><path d="M8 8.5l5-3V11l-5 3z" fill="#109010"/></svg>
<div class="t" style="left:87.70px;top:346.55px;font-size:11.4px;line-height:11.4px;color:#555;">Injection Timing, Cat Lightoff</div>
<div style="left:61px;top:367px;width:8px;height:1px;background:repeating-linear-gradient(to right,#b0b0b0 0 1px,transparent 1px 2px);"></div>
<svg style="left:69.5px;top:359.97px;" width="14" height="14" viewBox="0 0 16 16"><path d="M7.5 1l6.5 3.5v7L7.5 15 1 11.5v-7z" fill="#222"/><path d="M7.5 2l5.5 3-5.5 3-5.5-3z" fill="#e02020"/><path d="M2 5.5l5.5 3V14L2 11z" fill="#f0e020"/><path d="M8 8.5l5-3V11l-5 3z" fill="#109010"/></svg>
<div class="t" style="left:87.70px;top:362.42px;font-size:11.4px;line-height:11.4px;color:#555;">Injection Factor, Cat Lightoff, Double Pulse</div>
<div style="left:67px;top:375.34000000000003px;width:146px;height:16px;background:#d9d9d9;"></div>
<div style="left:61px;top:383px;width:8px;height:1px;background:repeating-linear-gradient(to right,#b0b0b0 0 1px,transparent 1px 2px);"></div>
<svg style="left:69.5px;top:375.84000000000003px;" width="14" height="14" viewBox="0 0 16 16"><path d="M7.5 1l6.5 3.5v7L7.5 15 1 11.5v-7z" fill="#222"/><path d="M7.5 2l5.5 3-5.5 3-5.5-3z" fill="#e02020"/><path d="M2 5.5l5.5 3V14L2 11z" fill="#f0e020"/><path d="M8 8.5l5-3V11l-5 3z" fill="#109010"/></svg>
<div class="t" style="left:87.70px;top:378.29px;font-size:11.4px;line-height:11.4px;color:#555;">Injection Timing, Normal</div>
<div style="left:61px;top:399px;width:8px;height:1px;background:repeating-linear-gradient(to right,#b0b0b0 0 1px,transparent 1px 2px);"></div>
<svg style="left:69.5px;top:391.71000000000004px;" width="14" height="14" viewBox="0 0 16 16"><path d="M7.5 1l6.5 3.5v7L7.5 15 1 11.5v-7z" fill="#222"/><path d="M7.5 2l5.5 3-5.5 3-5.5-3z" fill="#e02020"/><path d="M2 5.5l5.5 3V14L2 11z" fill="#f0e020"/><path d="M8 8.5l5-3V11l-5 3z" fill="#109010"/></svg>
<div class="t" style="left:87.70px;top:394.16px;font-size:11.4px;line-height:11.4px;color:#555;">Injection Timing, Normal, Double Pulse</div>
<div style="left:61px;top:415px;width:8px;height:1px;background:repeating-linear-gradient(to right,#b0b0b0 0 1px,transparent 1px 2px);"></div>
<svg style="left:69.5px;top:407.58px;" width="14" height="14" viewBox="0 0 16 16"><path d="M7.5 1l6.5 3.5v7L7.5 15 1 11.5v-7z" fill="#222"/><path d="M7.5 2l5.5 3-5.5 3-5.5-3z" fill="#e02020"/><path d="M2 5.5l5.5 3V14L2 11z" fill="#f0e020"/><path d="M8 8.5l5-3V11l-5 3z" fill="#109010"/></svg>
<div class="t" style="left:87.70px;top:410.03px;font-size:11.4px;line-height:11.4px;color:#555;">Injection Factor, Normal, Double Pulse</div>
<div style="left:61px;top:430px;width:8px;height:1px;background:repeating-linear-gradient(to right,#b0b0b0 0 1px,transparent 1px 2px);"></div>
<svg style="left:69.5px;top:423.45px;" width="14" height="14" viewBox="0 0 16 16"><rect x="1.5" y="1.5" width="12" height="12" fill="#c8c8e8" stroke="#333"/><path d="M2.5 11L5 3.5 9 12 12.5 4.5" fill="none" stroke="#2a3ad0" stroke-width="1.1"/></svg>
<div class="t" style="left:87.70px;top:425.90px;font-size:11.4px;line-height:11.4px;color:#555;">Injection Timing, Idle, Double Pulse</div>
<div style="left:61px;top:446px;width:8px;height:1px;background:repeating-linear-gradient(to right,#b0b0b0 0 1px,transparent 1px 2px);"></div>
<svg style="left:69.5px;top:439.32px;" width="14" height="14" viewBox="0 0 16 16"><rect x="1.5" y="1.5" width="12" height="12" fill="#c8c8e8" stroke="#333"/><path d="M2.5 11L5 3.5 9 12 12.5 4.5" fill="none" stroke="#2a3ad0" stroke-width="1.1"/></svg>
<div class="t" style="left:87.70px;top:441.77px;font-size:11.4px;line-height:11.4px;color:#555;">Injection Factor, Idle, Double Pulse</div>
<div style="left:61px;top:462px;width:8px;height:1px;background:repeating-linear-gradient(to right,#b0b0b0 0 1px,transparent 1px 2px);"></div>
<svg style="left:69.5px;top:455.18999999999994px;" width="14" height="14" viewBox="0 0 16 16"><rect x="1.5" y="1.5" width="12" height="12" fill="#c8c8e8" stroke="#333"/><path d="M2.5 11L5 3.5 9 12 12.5 4.5" fill="none" stroke="#2a3ad0" stroke-width="1.1"/></svg>
<div class="t" style="left:87.70px;top:457.64px;font-size:11.4px;line-height:11.4px;color:#555;">Injector Flow, Pressure Multiplier, Base</div>
<div style="left:61px;top:478px;width:8px;height:1px;background:repeating-linear-gradient(to right,#b0b0b0 0 1px,transparent 1px 2px);"></div>
<svg style="left:69.5px;top:471.05999999999995px;" width="14" height="14" viewBox="0 0 16 16"><rect x="1.5" y="1.5" width="12" height="12" fill="#c8c8e8" stroke="#333"/><path d="M2.5 11L5 3.5 9 12 12.5 4.5" fill="none" stroke="#2a3ad0" stroke-width="1.1"/></svg>
<div class="t" style="left:87.70px;top:473.51px;font-size:11.4px;line-height:11.4px;color:#555;">Injector Flow, Pressure Multiplier, Idle</div>
<div style="left:303.6px;top:167px;width:15px;height:307.7px;background:#f0f0f0;"></div>
<svg style="left:306px;top:174px" width="9" height="6"><path d="M0.5 5l4-4 4 4" fill="none" stroke="#555" stroke-width="1.2"/></svg>
<div style="left:304.6px;top:213px;width:13px;height:40px;background:#cdcdcd;"></div>
<svg style="left:306px;top:461px" width="9" height="6"><path d="M0.5 1l4 4 4-4" fill="none" stroke="#555" stroke-width="1.2"/></svg>
<div style="left:0px;top:473px;width:319px;height:15.7px;background:#f0f0f0;"></div>
<div style="left:14px;top:476px;width:252px;height:11px;background:#cdcdcd;"></div>
<svg style="left:4px;top:477px" width="6" height="9"><path d="M5 0.5l-4 4 4 4" fill="none" stroke="#555" stroke-width="1.2"/></svg>
<svg style="left:292px;top:477px" width="6" height="9"><path d="M1 0.5l4 4-4 4" fill="none" stroke="#555" stroke-width="1.2"/></svg>
<div style="left:0px;top:496px;width:320px;height:1px;background:#a0a0a0;"></div>
<div style="left:0px;top:497px;width:320px;height:125px;background:#fff;"></div>
<div class="t" style="left:0.00px;top:503.04px;font-size:14.6px;line-height:14.6px;color:#1a1a40;letter-spacing:0.141px;-webkit-text-stroke:0.35px #1a1a40;">{B1531} Injection Timing, Normal</div>
<div class="t" style="left:0.00px;top:528.15px;font-size:11.4px;line-height:11.4px;color:#777;letter-spacing:-0.007px;">This table defines the start of injection BTDC during normal</div>
<div class="t" style="left:0.00px;top:540.95px;font-size:11.4px;line-height:11.4px;color:#777;">running mode.</div>
<div style="left:306px;top:525.4px;width:13.5px;height:96px;background:#f0f0f0;"></div>
<svg style="left:308.5px;top:529px" width="9" height="6"><path d="M0.5 5l4-4 4 4" fill="none" stroke="#aaa" stroke-width="1.2"/></svg>
<svg style="left:308.5px;top:612px" width="9" height="6"><path d="M0.5 1l4 4 4-4" fill="none" stroke="#aaa" stroke-width="1.2"/></svg>
<div style="left:320px;top:108px;width:4.5px;height:514px;background:#f0f0f0;"></div>
<div style="left:324px;top:108px;width:373px;height:148px;background:#ffffdf;border-left:1px solid #8a8a8a;border-top:2px solid #a0a0a0;"></div>
<div class="t" style="left:332.30px;top:115.17px;font-size:9.6px;line-height:9.6px;color:#c04a40;letter-spacing:-0.124px;">Air Per Cyl Grams/Cylinder {link: E92:APCYL_DMA} (0.08)</div>
<div class="t" style="left:332.30px;top:128.57px;font-size:9.6px;line-height:9.6px;color:#4a4a8a;letter-spacing:-0.210px;">RPM {link: SAE.RPM} (400)</div>
<div class="t" style="left:607.62px;top:115.27px;font-size:9.6px;line-height:9.6px;color:#555;">Data: 315 Degrees</div>
<div class="t" style="left:651.38px;top:129.27px;font-size:9.6px;line-height:9.6px;color:#555;">Min: 252</div>
<div class="t" style="left:648.72px;top:143.57px;font-size:9.6px;line-height:9.6px;color:#555;">Max: 340</div>
<div style="left:329px;top:185.8px;width:17.3px;height:67px;background:linear-gradient(to bottom,#ff1a00 0%,#ff8a00 25%,#ffff00 50%,#80ff00 75%,#10e000 100%);border:1px solid #333;"></div>
<div class="t" style="left:351.30px;top:187.44px;font-size:10px;line-height:10px;color:#444;">High</div>
<div class="t" style="left:351.30px;top:215.03px;font-size:10px;line-height:10px;color:#444;">Med</div>
<div class="t" style="left:351.30px;top:243.23px;font-size:10px;line-height:10px;color:#444;">Low</div>
<svg style="left:420px;top:120px" width="160" height="145" viewBox="0 0 160 145">
<defs>
<linearGradient id="sg" gradientUnits="userSpaceOnUse" x1="0" y1="15" x2="0" y2="108">
<stop offset="0" stop-color="#a82000"/><stop offset="0.2" stop-color="#e86a10"/><stop offset="0.45" stop-color="#f8c828"/><stop offset="0.7" stop-color="#c0e030"/><stop offset="1" stop-color="#58c020"/></linearGradient>
<linearGradient id="sg2" gradientUnits="userSpaceOnUse" x1="0" y1="25" x2="0" y2="95">
<stop offset="0" stop-color="#8a3010"/><stop offset="0.45" stop-color="#a87828"/><stop offset="1" stop-color="#98b030"/></linearGradient>
<pattern id="mesh" patternUnits="userSpaceOnUse" width="4" height="6.5" patternTransform="skewY(-14)"><path d="M0 0L2 6.5L4 0" fill="none" stroke="#140800" stroke-width="0.9" opacity="0.8"/></pattern><pattern id="mesh2" patternUnits="userSpaceOnUse" width="3" height="3" patternTransform="skewY(30)"><path d="M0 0h3M0 0v3" stroke="#140800" stroke-width="0.7" opacity="0.7"/></pattern>
</defs>
<polygon points="19.7,20.8 90.0,8.8 90.0,84.0 19.7,96.5" fill="#d0d0e0" stroke="#8a8a9a" stroke-width="0.8"/>
<polygon points="90.0,8.8 130.5,32.9 126.0,107.5 90.0,84.0" fill="#d8d8e8" stroke="#8a8a9a" stroke-width="0.8"/>
<polygon points="19.7,96.5 90.0,84.0 126.0,107.5 60.3,118.4" fill="#e2e2f0" stroke="#9a9aaa" stroke-width="0.8"/>
<polygon points="21.6,42.6 35.7,18.1 41.3,30.4 48.8,15.3 58.2,27.5 64.8,39.7 71.3,30.4 77.0,46.3 82.6,48.2 90.1,44.4 97.6,26.6 108.9,28.5 120.2,33.2 129.6,37.9 123.9,45.4 110.8,41.6 95.8,61.3 81.7,95.1 73.2,90.4 66.6,108.3 41.3,93.3 32.8,67.0 21.6,44.4" fill="url(#sg)"/>
<polygon points="77.0,46.3 82.6,48.2 90.1,44.4 97.6,26.6 108.9,28.5 120.2,33.2 129.6,37.9 123.9,45.4 110.8,41.6 95.8,61.3 81.7,95.1 73.2,90.4 66.0,70.0" fill="url(#sg2)" opacity="0.8"/><path d="M77 46L81.69999999999999 95" stroke="#201000" stroke-width="1.5" opacity="0.7"/>
<polygon points="21.6,42.6 35.7,18.1 41.3,30.4 48.8,15.3 58.2,27.5 64.8,39.7 71.3,30.4 77.0,46.3 82.6,48.2 90.1,44.4 97.6,26.6 108.9,28.5 120.2,33.2 129.6,37.9 123.9,45.4 110.8,41.6 95.8,61.3 81.7,95.1 73.2,90.4 66.6,108.3 41.3,93.3 32.8,67.0 21.6,44.4" fill="url(#mesh)" stroke="#201000" stroke-width="1"/><polygon points="77.0,46.3 82.6,48.2 90.1,44.4 97.6,26.6 108.9,28.5 120.2,33.2 129.6,37.9 123.9,45.4 110.8,41.6 95.8,61.3 81.7,95.1 73.2,90.4 66.0,70.0" fill="url(#mesh2)"/>
<polyline points="19.7,20.8 19.7,96.5 60.3,118.4 126.0,107.5 130.5,32.9" fill="none" stroke="#707080" stroke-width="0.9"/>
<path d="M131.79999999999995 32h5" stroke="#555" stroke-width="0.8"/><path d="M131.79999999999995 49.30000000000001h5" stroke="#555" stroke-width="0.8"/><path d="M131.79999999999995 65.80000000000001h5" stroke="#555" stroke-width="0.8"/><path d="M131.79999999999995 83.69999999999999h5" stroke="#555" stroke-width="0.8"/><path d="M131.79999999999995 100.9h5" stroke="#555" stroke-width="0.8"/><path d="M19.7 96.5v5" stroke="#555" stroke-width="0.8"/><path d="M33.1 103.7v5" stroke="#555" stroke-width="0.8"/><path d="M46.5 111.0v5" stroke="#555" stroke-width="0.8"/><path d="M60.3 118.4v5" stroke="#555" stroke-width="0.8"/><path d="M60.3 118.4v5" stroke="#555" stroke-width="0.8"/><path d="M82.0 114.8v5" stroke="#555" stroke-width="0.8"/><path d="M103.7 111.2v5" stroke="#555" stroke-width="0.8"/><path d="M126.0 107.5v5" stroke="#555" stroke-width="0.8"/></svg>
<div class="t" style="left:558.50px;top:147.37px;font-size:9.6px;line-height:9.6px;color:#555;">340</div>
<div class="t" style="left:558.50px;top:164.87px;font-size:9.6px;line-height:9.6px;color:#555;">320</div>
<div class="t" style="left:558.50px;top:181.87px;font-size:9.6px;line-height:9.6px;color:#555;">300</div>
<div class="t" style="left:558.50px;top:199.37px;font-size:9.6px;line-height:9.6px;color:#555;">280</div>
<div class="t" style="left:558.50px;top:216.37px;font-size:9.6px;line-height:9.6px;color:#555;">260</div>
<div class="t" style="left:420.00px;top:223.57px;font-size:9.6px;line-height:9.6px;color:#b86050;">0.08</div>
<div class="t" style="left:432.30px;top:231.17px;font-size:9.6px;line-height:9.6px;color:#b86050;">0.48</div>
<div class="t" style="left:444.00px;top:237.87px;font-size:9.6px;line-height:9.6px;color:#b86050;">0.88</div>
<div class="t" style="left:456.70px;top:245.87px;font-size:9.6px;line-height:9.6px;color:#b86050;">1.28</div>
<div class="t" style="left:477.00px;top:245.87px;font-size:9.6px;line-height:9.6px;color:#5a5a9a;">400</div>
<div class="t" style="left:495.00px;top:243.57px;font-size:9.6px;line-height:9.6px;color:#5a5a9a;">2400</div>
<div class="t" style="left:517.00px;top:240.17px;font-size:9.6px;line-height:9.6px;color:#5a5a9a;">4400</div>
<div class="t" style="left:538.00px;top:235.87px;font-size:9.6px;line-height:9.6px;color:#5a5a9a;">6400</div>
<div style="left:697px;top:108px;width:18px;height:148px;background:#f0f0f0;border-right:1px solid #a0a0a0;"></div>
<div style="left:697.5px;top:110.4px;width:15px;height:16.2px;background:#e4e4e4;border:1px solid #c4c4c4;"></div>
<div class="t" style="left:701.50px;top:112.50px;font-size:13px;line-height:13px;color:#222;">?</div>
<svg style="left:700.5px;top:132px" width="9" height="6"><path d="M0.5 5l4-4 4 4" fill="none" stroke="#333" stroke-width="1.3"/></svg>
<div style="left:699px;top:202.8px;width:12px;height:14.7px;background:#cdcdcd;"></div>
<svg style="left:700.5px;top:229px" width="9" height="6"><path d="M0.5 1l4 4 4-4" fill="none" stroke="#333" stroke-width="1.3"/></svg>
<div style="left:697.5px;top:240px;width:15px;height:16px;background:#e4e4e4;border:1px solid #c4c4c4;"></div>
<svg style="left:698.5px;top:241px;" width="13" height="13" viewBox="0 0 16 16"><circle cx="7" cy="7" r="4.5" fill="#a0e0e0" stroke="#107080" stroke-width="2"/><path d="M10 10l4 4" stroke="#107080" stroke-width="2.5"/></svg>
<div style="left:715px;top:108px;width:485px;height:150px;background:#f0f0f0;"></div>
<div style="left:697px;top:108px;width:500px;height:1.2px;background:#a4a4a4;"></div>
<div class="t" style="left:718.50px;top:116.69px;font-size:11px;line-height:11px;color:#666;letter-spacing:0.077px;">Units:</div>
<div class="t" style="left:846.00px;top:116.69px;font-size:11px;line-height:11px;color:#666;letter-spacing:0.048px;">Minimum:</div>
<div class="t" style="left:923.50px;top:116.69px;font-size:11px;line-height:11px;color:#666;letter-spacing:0.111px;">Maximum:</div>
<div style="left:718.5px;top:131px;width:124.5px;height:20.5px;background:#f0f0f0;border:1px solid #a8a8a8;"></div>
<div class="t" style="left:721.50px;top:135.59px;font-size:12px;line-height:12px;color:#555;">Degrees</div>
<div style="left:845px;top:131px;width:75.39999999999998px;height:20.5px;background:#f0f0f0;border:1px solid #a8a8a8;"></div>
<div class="t" style="left:848.00px;top:135.59px;font-size:12px;line-height:12px;color:#555;">0</div>
<div style="left:923px;top:131px;width:74.5px;height:20.5px;background:#f0f0f0;border:1px solid #a8a8a8;"></div>
<div class="t" style="left:926.00px;top:135.59px;font-size:12px;line-height:12px;color:#555;">512</div>
<div style="left:845px;top:157.5px;width:75.39999999999998px;height:21.0px;background:#f0f0f0;border:1px solid #a8a8a8;"></div>
<div class="t" style="left:848.00px;top:162.34px;font-size:12px;line-height:12px;color:#555;">0</div>
<div style="left:923px;top:157.5px;width:74.5px;height:21.0px;background:#f0f0f0;border:1px solid #a8a8a8;"></div>
<div class="t" style="left:926.00px;top:162.34px;font-size:12px;line-height:12px;color:#555;">512</div>
<div class="t" style="left:1000.50px;top:136.19px;font-size:11px;line-height:11px;color:#555;letter-spacing:0.003px;">EFILive limits.</div>
<div class="t" style="left:1000.50px;top:162.69px;font-size:11px;line-height:11px;color:#555;letter-spacing:0.421px;">Controller limits.</div>
<div style="left:715px;top:204.6px;width:482px;height:51px;background:#fff;border:1px solid #d8d8d8;"></div>
<div style="left:715px;top:184.5px;width:71px;height:21px;background:#fff;"></div>
<div class="t" style="left:721.50px;top:189.19px;font-size:11px;line-height:11px;color:#444;letter-spacing:0.098px;">Description</div>
<div style="left:786px;top:186.6px;width:46px;height:19px;background:#f0f0f0;border:1px solid #d9d9d9;border-bottom:none;"></div>
<div class="t" style="left:790.50px;top:190.69px;font-size:11px;line-height:11px;color:#444;letter-spacing:0.059px;">RTACS</div>
<div style="left:832px;top:186.6px;width:65px;height:19px;background:#f0f0f0;border:1px solid #d9d9d9;border-bottom:none;border-left:none;"></div>
<div class="t" style="left:837.50px;top:190.69px;font-size:11px;line-height:11px;color:#444;letter-spacing:0.201px;">User notes</div>
<div class="t" style="left:719.50px;top:209.55px;font-size:11.4px;line-height:11.4px;color:#555;letter-spacing:-0.006px;">This table defines the start of injection BTDC during normal running mode.</div>
<div style="left:1197px;top:108px;width:3px;height:150px;background:#f0f0f0;"></div>
<div style="left:324.5px;top:256px;width:875.5px;height:4px;background:#f0f0f0;"></div>
<div style="left:324.5px;top:259.6px;width:875.5px;height:362px;background:#a8caf0;border-top:1px solid #7d9cc0;border-left:1px solid #9ab;"></div>
<div class="t" style="left:694.90px;top:263.10px;font-size:13.7px;line-height:13.7px;color:#3a4a68;">RPM {link: SAE.RPM}</div>
<div class="t" style="left:333.8px;top:449.6px;font-size:14.1px;line-height:14px;color:#3a4a68;transform:translate(-50%,-50%) rotate(-90deg);">Air Per Cyl Grams/Cylinder {link: E92.APCYL_DMA}</div>
<div style="left:343px;top:277.8px;width:841px;height:17.30000000000001px;background:#f6f6f6;"></div>
<div class="t" style="left:375.92px;top:280.89px;font-size:12.3px;line-height:12.3px;color:#484848;transform:scaleX(0.93);transform-origin:0 0;">400</div>
<div style="left:371px;top:277.8px;width:1.3px;height:17.30000000000001px;background:#606060;"></div>
<div class="t" style="left:402.42px;top:280.89px;font-size:12.3px;line-height:12.3px;color:#484848;transform:scaleX(0.93);transform-origin:0 0;">600</div>
<div style="left:397.5px;top:277.8px;width:1.3px;height:17.30000000000001px;background:#606060;"></div>
<div class="t" style="left:428.92px;top:280.89px;font-size:12.3px;line-height:12.3px;color:#484848;transform:scaleX(0.93);transform-origin:0 0;">800</div>
<div style="left:424px;top:277.8px;width:1.3px;height:17.30000000000001px;background:#606060;"></div>
<div class="t" style="left:455.19px;top:280.89px;font-size:12.3px;line-height:12.3px;color:#484848;transform:scaleX(0.93);transform-origin:0 0;">1000</div>
<div style="left:450.5px;top:277.8px;width:1.3px;height:17.30000000000001px;background:#606060;"></div>
<div class="t" style="left:487.82px;top:280.89px;font-size:12.3px;line-height:12.3px;color:#484848;transform:scaleX(0.93);transform-origin:0 0;">1200</div>
<div style="left:483.13px;top:277.8px;width:1.3px;height:17.30000000000001px;background:#606060;"></div>
<div class="t" style="left:520.45px;top:280.89px;font-size:12.3px;line-height:12.3px;color:#484848;transform:scaleX(0.93);transform-origin:0 0;">1400</div>
<div style="left:515.76px;top:277.8px;width:1.3px;height:17.30000000000001px;background:#606060;"></div>
<div class="t" style="left:553.08px;top:280.89px;font-size:12.3px;line-height:12.3px;color:#484848;transform:scaleX(0.93);transform-origin:0 0;">1600</div>
<div style="left:548.39px;top:277.8px;width:1.3px;height:17.30000000000001px;background:#606060;"></div>
<div class="t" style="left:585.71px;top:280.89px;font-size:12.3px;line-height:12.3px;color:#484848;transform:scaleX(0.93);transform-origin:0 0;">1800</div>
<div style="left:581.02px;top:277.8px;width:1.3px;height:17.30000000000001px;background:#606060;"></div>
<div class="t" style="left:618.34px;top:280.89px;font-size:12.3px;line-height:12.3px;color:#484848;transform:scaleX(0.93);transform-origin:0 0;">2000</div>
<div style="left:613.65px;top:277.8px;width:1.3px;height:17.30000000000001px;background:#606060;"></div>
<div class="t" style="left:650.97px;top:280.89px;font-size:12.3px;line-height:12.3px;color:#484848;transform:scaleX(0.93);transform-origin:0 0;">2200</div>
<div style="left:646.28px;top:277.8px;width:1.3px;height:17.30000000000001px;background:#606060;"></div>
<div class="t" style="left:683.60px;top:280.89px;font-size:12.3px;line-height:12.3px;color:#484848;transform:scaleX(0.93);transform-origin:0 0;">2400</div>
<div style="left:678.91px;top:277.8px;width:1.3px;height:17.30000000000001px;background:#606060;"></div>
<div class="t" style="left:716.23px;top:280.89px;font-size:12.3px;line-height:12.3px;color:#484848;transform:scaleX(0.93);transform-origin:0 0;">2600</div>
<div style="left:711.54px;top:277.8px;width:1.3px;height:17.30000000000001px;background:#606060;"></div>
<div class="t" style="left:748.86px;top:280.89px;font-size:12.3px;line-height:12.3px;color:#484848;transform:scaleX(0.93);transform-origin:0 0;">2800</div>
<div style="left:744.17px;top:277.8px;width:1.3px;height:17.30000000000001px;background:#606060;"></div>
<div class="t" style="left:781.49px;top:280.89px;font-size:12.3px;line-height:12.3px;color:#484848;transform:scaleX(0.93);transform-origin:0 0;">3000</div>
<div style="left:776.8px;top:277.8px;width:1.3px;height:17.30000000000001px;background:#606060;"></div>
<div class="t" style="left:814.12px;top:280.89px;font-size:12.3px;line-height:12.3px;color:#484848;transform:scaleX(0.93);transform-origin:0 0;">3200</div>
<div style="left:809.43px;top:277.8px;width:1.3px;height:17.30000000000001px;background:#606060;"></div>
<div class="t" style="left:846.75px;top:280.89px;font-size:12.3px;line-height:12.3px;color:#484848;transform:scaleX(0.93);transform-origin:0 0;">3400</div>
<div style="left:842.06px;top:277.8px;width:1.3px;height:17.30000000000001px;background:#606060;"></div>
<div class="t" style="left:879.38px;top:280.89px;font-size:12.3px;line-height:12.3px;color:#484848;transform:scaleX(0.93);transform-origin:0 0;">3600</div>
<div style="left:874.6899999999999px;top:277.8px;width:1.3px;height:17.30000000000001px;background:#606060;"></div>
<div class="t" style="left:912.01px;top:280.89px;font-size:12.3px;line-height:12.3px;color:#484848;transform:scaleX(0.93);transform-origin:0 0;">3800</div>
<div style="left:907.3199999999999px;top:277.8px;width:1.3px;height:17.30000000000001px;background:#606060;"></div>
<div class="t" style="left:944.64px;top:280.89px;font-size:12.3px;line-height:12.3px;color:#484848;transform:scaleX(0.93);transform-origin:0 0;">4000</div>
<div style="left:939.9499999999999px;top:277.8px;width:1.3px;height:17.30000000000001px;background:#606060;"></div>
<div class="t" style="left:977.27px;top:280.89px;font-size:12.3px;line-height:12.3px;color:#484848;transform:scaleX(0.93);transform-origin:0 0;">4200</div>
<div style="left:972.5799999999999px;top:277.8px;width:1.3px;height:17.30000000000001px;background:#606060;"></div>
<div class="t" style="left:1009.90px;top:280.89px;font-size:12.3px;line-height:12.3px;color:#484848;transform:scaleX(0.93);transform-origin:0 0;">4400</div>
<div style="left:1005.2099999999999px;top:277.8px;width:1.3px;height:17.30000000000001px;background:#606060;"></div>
<div class="t" style="left:1042.53px;top:280.89px;font-size:12.3px;line-height:12.3px;color:#484848;transform:scaleX(0.93);transform-origin:0 0;">4600</div>
<div style="left:1037.84px;top:277.8px;width:1.3px;height:17.30000000000001px;background:#606060;"></div>
<div class="t" style="left:1075.16px;top:280.89px;font-size:12.3px;line-height:12.3px;color:#484848;transform:scaleX(0.93);transform-origin:0 0;">4800</div>
<div style="left:1070.47px;top:277.8px;width:1.3px;height:17.30000000000001px;background:#606060;"></div>
<div class="t" style="left:1107.79px;top:280.89px;font-size:12.3px;line-height:12.3px;color:#484848;transform:scaleX(0.93);transform-origin:0 0;">5000</div>
<div style="left:1103.1000000000001px;top:277.8px;width:1.3px;height:17.30000000000001px;background:#606060;"></div>
<div class="t" style="left:1140.42px;top:280.89px;font-size:12.3px;line-height:12.3px;color:#484848;transform:scaleX(0.93);transform-origin:0 0;">5200</div>
<div style="left:1135.7300000000002px;top:277.8px;width:1.3px;height:17.30000000000001px;background:#606060;"></div>
<div class="t" style="left:1173.05px;top:280.89px;font-size:12.3px;line-height:12.3px;color:#484848;transform:scaleX(0.93);transform-origin:0 0;">5400</div>
<div style="left:1168.3600000000004px;top:277.8px;width:1.3px;height:17.30000000000001px;background:#606060;"></div>
<div style="left:343px;top:293.8px;width:841px;height:1.3px;background:#606060;"></div>
<div style="left:343px;top:295px;width:29px;height:18px;background:#f6f6f6;border-bottom:1px solid #606060;"></div>
<div class="t" style="left:346.74px;top:297.99px;font-size:12.3px;line-height:12.3px;color:#5a5a5a;transform:scaleX(0.93);transform-origin:0 0;">0.08</div>
<div style="left:372px;top:295px;width:26px;height:18px;background:#0e6fcf;"></div>
<div style="left:398px;top:295px;width:27px;height:18px;background:rgb(255,145,0);"></div>
<div style="left:425px;top:295px;width:27px;height:18px;background:rgb(255,145,0);"></div>
<div style="left:452px;top:295px;width:32px;height:18px;background:rgb(255,116,0);"></div>
<div style="left:484px;top:295px;width:33px;height:18px;background:rgb(255,87,0);"></div>
<div style="left:517px;top:295px;width:32px;height:18px;background:rgb(255,58,0);"></div>
<div style="left:549px;top:295px;width:33px;height:18px;background:rgb(255,29,0);"></div>
<div style="left:582px;top:295px;width:33px;height:18px;background:rgb(255,0,0);"></div>
<div style="left:615px;top:295px;width:32px;height:18px;background:rgb(255,0,0);"></div>
<div style="left:647px;top:295px;width:33px;height:18px;background:rgb(255,58,0);"></div>
<div style="left:680px;top:295px;width:33px;height:18px;background:rgb(255,116,0);"></div>
<div style="left:713px;top:295px;width:32px;height:18px;background:rgb(255,70,0);"></div>
<div style="left:745px;top:295px;width:33px;height:18px;background:rgb(255,29,0);"></div>
<div style="left:778px;top:295px;width:32px;height:18px;background:rgb(255,12,0);"></div>
<div style="left:810px;top:295px;width:33px;height:18px;background:rgb(255,0,0);"></div>
<div style="left:843px;top:295px;width:33px;height:18px;background:rgb(255,29,0);"></div>
<div style="left:876px;top:295px;width:32px;height:18px;background:rgb(255,64,0);"></div>
<div style="left:908px;top:295px;width:33px;height:18px;background:rgb(255,75,0);"></div>
<div style="left:941px;top:295px;width:33px;height:18px;background:rgb(255,87,0);"></div>
<div style="left:974px;top:295px;width:32px;height:18px;background:rgb(255,99,0);"></div>
<div style="left:1006px;top:295px;width:33px;height:18px;background:rgb(255,116,0);"></div>
<div style="left:1039px;top:295px;width:32px;height:18px;background:rgb(255,156,0);"></div>
<div style="left:1071px;top:295px;width:33px;height:18px;background:rgb(255,203,0);"></div>
<div style="left:1104px;top:295px;width:33px;height:18px;background:rgb(255,214,0);"></div>
<div style="left:1137px;top:295px;width:32px;height:18px;background:rgb(255,232,0);"></div>
<div style="left:1169px;top:295px;width:33px;height:18px;background:rgb(255,243,0);"></div>
<div style="left:343px;top:313px;width:29px;height:17px;background:#f6f6f6;border-bottom:1px solid #606060;"></div>
<div class="t" style="left:346.74px;top:315.59px;font-size:12.3px;line-height:12.3px;color:#5a5a5a;transform:scaleX(0.93);transform-origin:0 0;">0.12</div>
<div style="left:372px;top:313px;width:26px;height:17px;background:rgb(255,145,0);"></div>
<div style="left:398px;top:313px;width:27px;height:17px;background:rgb(255,145,0);"></div>
<div style="left:425px;top:313px;width:27px;height:17px;background:rgb(255,145,0);"></div>
<div style="left:452px;top:313px;width:32px;height:17px;background:rgb(255,116,0);"></div>
<div style="left:484px;top:313px;width:33px;height:17px;background:rgb(255,87,0);"></div>
<div style="left:517px;top:313px;width:32px;height:17px;background:rgb(255,58,0);"></div>
<div style="left:549px;top:313px;width:33px;height:17px;background:rgb(255,29,0);"></div>
<div style="left:582px;top:313px;width:33px;height:17px;background:rgb(255,0,0);"></div>
<div style="left:615px;top:313px;width:32px;height:17px;background:rgb(255,0,0);"></div>
<div style="left:647px;top:313px;width:33px;height:17px;background:rgb(255,58,0);"></div>
<div style="left:680px;top:313px;width:33px;height:17px;background:rgb(255,116,0);"></div>
<div style="left:713px;top:313px;width:32px;height:17px;background:rgb(255,70,0);"></div>
<div style="left:745px;top:313px;width:33px;height:17px;background:rgb(255,29,0);"></div>
<div style="left:778px;top:313px;width:32px;height:17px;background:rgb(255,12,0);"></div>
<div style="left:810px;top:313px;width:33px;height:17px;background:rgb(255,0,0);"></div>
<div style="left:843px;top:313px;width:33px;height:17px;background:rgb(255,29,0);"></div>
<div style="left:876px;top:313px;width:32px;height:17px;background:rgb(255,64,0);"></div>
<div style="left:908px;top:313px;width:33px;height:17px;background:rgb(255,75,0);"></div>
<div style="left:941px;top:313px;width:33px;height:17px;background:rgb(255,87,0);"></div>
<div style="left:974px;top:313px;width:32px;height:17px;background:rgb(255,99,0);"></div>
<div style="left:1006px;top:313px;width:33px;height:17px;background:rgb(255,116,0);"></div>
<div style="left:1039px;top:313px;width:32px;height:17px;background:rgb(255,156,0);"></div>
<div style="left:1071px;top:313px;width:33px;height:17px;background:rgb(255,203,0);"></div>
<div style="left:1104px;top:313px;width:33px;height:17px;background:rgb(255,214,0);"></div>
<div style="left:1137px;top:313px;width:32px;height:17px;background:rgb(255,232,0);"></div>
<div style="left:1169px;top:313px;width:33px;height:17px;background:rgb(255,243,0);"></div>
<div style="left:343px;top:330px;width:29px;height:18px;background:#f6f6f6;border-bottom:1px solid #606060;"></div>
<div class="t" style="left:346.74px;top:333.19px;font-size:12.3px;line-height:12.3px;color:#5a5a5a;transform:scaleX(0.93);transform-origin:0 0;">0.16</div>
<div style="left:372px;top:330px;width:26px;height:18px;background:rgb(255,162,0);"></div>
<div style="left:398px;top:330px;width:27px;height:18px;background:rgb(255,162,0);"></div>
<div style="left:425px;top:330px;width:27px;height:18px;background:rgb(255,162,0);"></div>
<div style="left:452px;top:330px;width:32px;height:18px;background:rgb(255,151,0);"></div>
<div style="left:484px;top:330px;width:33px;height:18px;background:rgb(255,145,0);"></div>
<div style="left:517px;top:330px;width:32px;height:18px;background:rgb(255,104,0);"></div>
<div style="left:549px;top:330px;width:33px;height:18px;background:rgb(255,70,0);"></div>
<div style="left:582px;top:330px;width:33px;height:18px;background:rgb(255,81,0);"></div>
<div style="left:615px;top:330px;width:32px;height:18px;background:rgb(255,99,0);"></div>
<div style="left:647px;top:330px;width:33px;height:18px;background:rgb(255,110,0);"></div>
<div style="left:680px;top:330px;width:33px;height:18px;background:rgb(255,128,0);"></div>
<div style="left:713px;top:330px;width:32px;height:18px;background:rgb(255,75,0);"></div>
<div style="left:745px;top:330px;width:33px;height:18px;background:rgb(255,29,0);"></div>
<div style="left:778px;top:330px;width:32px;height:18px;background:rgb(255,17,0);"></div>
<div style="left:810px;top:330px;width:33px;height:18px;background:rgb(255,12,0);"></div>
<div style="left:843px;top:330px;width:33px;height:18px;background:rgb(255,151,0);"></div>
<div style="left:876px;top:330px;width:32px;height:18px;background:rgb(220,255,0);"></div>
<div style="left:908px;top:330px;width:33px;height:18px;background:rgb(197,255,0);"></div>
<div style="left:941px;top:330px;width:33px;height:18px;background:rgb(174,255,0);"></div>
<div style="left:974px;top:330px;width:32px;height:18px;background:rgb(255,238,0);"></div>
<div style="left:1006px;top:330px;width:33px;height:18px;background:rgb(255,145,0);"></div>
<div style="left:1039px;top:330px;width:32px;height:18px;background:rgb(255,203,0);"></div>
<div style="left:1071px;top:330px;width:33px;height:18px;background:rgb(249,255,0);"></div>
<div style="left:1104px;top:330px;width:33px;height:18px;background:rgb(249,255,0);"></div>
<div style="left:1137px;top:330px;width:32px;height:18px;background:rgb(249,255,0);"></div>
<div style="left:1169px;top:330px;width:33px;height:18px;background:rgb(249,255,0);"></div>
<div style="left:343px;top:348px;width:29px;height:18px;background:#f6f6f6;border-bottom:1px solid #606060;"></div>
<div class="t" style="left:346.74px;top:350.79px;font-size:12.3px;line-height:12.3px;color:#5a5a5a;transform:scaleX(0.93);transform-origin:0 0;">0.20</div>
<div style="left:372px;top:348px;width:26px;height:18px;background:rgb(255,191,0);"></div>
<div style="left:398px;top:348px;width:27px;height:18px;background:rgb(255,191,0);"></div>
<div style="left:425px;top:348px;width:27px;height:18px;background:rgb(255,191,0);"></div>
<div style="left:452px;top:348px;width:32px;height:18px;background:rgb(255,220,0);"></div>
<div style="left:484px;top:348px;width:33px;height:18px;background:rgb(255,249,0);"></div>
<div style="left:517px;top:348px;width:32px;height:18px;background:rgb(255,174,0);"></div>
<div style="left:549px;top:348px;width:33px;height:18px;background:rgb(255,104,0);"></div>
<div style="left:582px;top:348px;width:33px;height:18px;background:rgb(255,110,0);"></div>
<div style="left:615px;top:348px;width:32px;height:18px;background:rgb(255,116,0);"></div>
<div style="left:647px;top:348px;width:33px;height:18px;background:rgb(255,87,0);"></div>
<div style="left:680px;top:348px;width:33px;height:18px;background:rgb(255,64,0);"></div>
<div style="left:713px;top:348px;width:32px;height:18px;background:rgb(255,52,0);"></div>
<div style="left:745px;top:348px;width:33px;height:18px;background:rgb(255,46,0);"></div>
<div style="left:778px;top:348px;width:32px;height:18px;background:rgb(255,46,0);"></div>
<div style="left:810px;top:348px;width:33px;height:18px;background:rgb(255,52,0);"></div>
<div style="left:843px;top:348px;width:33px;height:18px;background:rgb(255,220,0);"></div>
<div style="left:876px;top:348px;width:32px;height:18px;background:rgb(116,255,0);"></div>
<div style="left:908px;top:348px;width:33px;height:18px;background:rgb(75,255,0);"></div>
<div style="left:941px;top:348px;width:33px;height:18px;background:rgb(29,255,0);"></div>
<div style="left:974px;top:348px;width:32px;height:18px;background:rgb(52,255,0);"></div>
<div style="left:1006px;top:348px;width:33px;height:18px;background:rgb(75,255,0);"></div>
<div style="left:1039px;top:348px;width:32px;height:18px;background:rgb(99,255,0);"></div>
<div style="left:1071px;top:348px;width:33px;height:18px;background:rgb(116,255,0);"></div>
<div style="left:1104px;top:348px;width:33px;height:18px;background:rgb(139,255,0);"></div>
<div style="left:1137px;top:348px;width:32px;height:18px;background:rgb(162,255,0);"></div>
<div style="left:1169px;top:348px;width:33px;height:18px;background:rgb(185,255,0);"></div>
<div style="left:343px;top:366px;width:29px;height:17px;background:#f6f6f6;border-bottom:1px solid #606060;"></div>
<div class="t" style="left:346.74px;top:368.39px;font-size:12.3px;line-height:12.3px;color:#5a5a5a;transform:scaleX(0.93);transform-origin:0 0;">0.24</div>
<div style="left:372px;top:366px;width:26px;height:17px;background:rgb(255,209,0);"></div>
<div style="left:398px;top:366px;width:27px;height:17px;background:rgb(255,209,0);"></div>
<div style="left:425px;top:366px;width:27px;height:17px;background:rgb(255,209,0);"></div>
<div style="left:452px;top:366px;width:32px;height:17px;background:rgb(255,243,0);"></div>
<div style="left:484px;top:366px;width:33px;height:17px;background:rgb(238,255,0);"></div>
<div style="left:517px;top:366px;width:32px;height:17px;background:rgb(255,255,0);"></div>
<div style="left:549px;top:366px;width:33px;height:17px;background:rgb(255,232,0);"></div>
<div style="left:582px;top:366px;width:33px;height:17px;background:rgb(255,191,0);"></div>
<div style="left:615px;top:366px;width:32px;height:17px;background:rgb(255,151,0);"></div>
<div style="left:647px;top:366px;width:33px;height:17px;background:rgb(255,122,0);"></div>
<div style="left:680px;top:366px;width:33px;height:17px;background:rgb(255,87,0);"></div>
<div style="left:713px;top:366px;width:32px;height:17px;background:rgb(255,93,0);"></div>
<div style="left:745px;top:366px;width:33px;height:17px;background:rgb(255,93,0);"></div>
<div style="left:778px;top:366px;width:32px;height:17px;background:rgb(255,75,0);"></div>
<div style="left:810px;top:366px;width:33px;height:17px;background:rgb(255,64,0);"></div>
<div style="left:843px;top:366px;width:33px;height:17px;background:rgb(255,238,0);"></div>
<div style="left:876px;top:366px;width:32px;height:17px;background:rgb(99,255,0);"></div>
<div style="left:908px;top:366px;width:33px;height:17px;background:rgb(64,255,0);"></div>
<div style="left:941px;top:366px;width:33px;height:17px;background:rgb(29,255,0);"></div>
<div style="left:974px;top:366px;width:32px;height:17px;background:rgb(35,255,0);"></div>
<div style="left:1006px;top:366px;width:33px;height:17px;background:rgb(41,255,0);"></div>
<div style="left:1039px;top:366px;width:32px;height:17px;background:rgb(58,255,0);"></div>
<div style="left:1071px;top:366px;width:33px;height:17px;background:rgb(81,255,0);"></div>
<div style="left:1104px;top:366px;width:33px;height:17px;background:rgb(93,255,0);"></div>
<div style="left:1137px;top:366px;width:32px;height:17px;background:rgb(99,255,0);"></div>
<div style="left:1169px;top:366px;width:33px;height:17px;background:rgb(110,255,0);"></div>
<div style="left:343px;top:383px;width:29px;height:18px;background:#f6f6f6;border-bottom:1px solid #606060;"></div>
<div class="t" style="left:346.74px;top:385.99px;font-size:12.3px;line-height:12.3px;color:#5a5a5a;transform:scaleX(0.93);transform-origin:0 0;">0.28</div>
<div style="left:372px;top:383px;width:26px;height:18px;background:rgb(255,232,0);"></div>
<div style="left:398px;top:383px;width:27px;height:18px;background:rgb(255,232,0);"></div>
<div style="left:425px;top:383px;width:27px;height:18px;background:rgb(255,232,0);"></div>
<div style="left:452px;top:383px;width:32px;height:18px;background:rgb(243,255,0);"></div>
<div style="left:484px;top:383px;width:33px;height:18px;background:rgb(209,255,0);"></div>
<div style="left:517px;top:383px;width:32px;height:18px;background:rgb(180,255,0);"></div>
<div style="left:549px;top:383px;width:33px;height:18px;background:rgb(151,255,0);"></div>
<div style="left:582px;top:383px;width:33px;height:18px;background:rgb(238,255,0);"></div>
<div style="left:615px;top:383px;width:32px;height:18px;background:rgb(255,185,0);"></div>
<div style="left:647px;top:383px;width:33px;height:18px;background:rgb(255,151,0);"></div>
<div style="left:680px;top:383px;width:33px;height:18px;background:rgb(255,116,0);"></div>
<div style="left:713px;top:383px;width:32px;height:18px;background:rgb(255,128,0);"></div>
<div style="left:745px;top:383px;width:33px;height:18px;background:rgb(255,139,0);"></div>
<div style="left:778px;top:383px;width:32px;height:18px;background:rgb(255,104,0);"></div>
<div style="left:810px;top:383px;width:33px;height:18px;background:rgb(255,75,0);"></div>
<div style="left:843px;top:383px;width:33px;height:18px;background:rgb(255,255,0);"></div>
<div style="left:876px;top:383px;width:32px;height:18px;background:rgb(75,255,0);"></div>
<div style="left:908px;top:383px;width:33px;height:18px;background:rgb(52,255,0);"></div>
<div style="left:941px;top:383px;width:33px;height:18px;background:rgb(29,255,0);"></div>
<div style="left:974px;top:383px;width:32px;height:18px;background:rgb(17,255,0);"></div>
<div style="left:1006px;top:383px;width:33px;height:18px;background:rgb(0,255,0);"></div>
<div style="left:1039px;top:383px;width:32px;height:18px;background:rgb(23,255,0);"></div>
<div style="left:1071px;top:383px;width:33px;height:18px;background:rgb(46,255,0);"></div>
<div style="left:1104px;top:383px;width:33px;height:18px;background:rgb(41,255,0);"></div>
<div style="left:1137px;top:383px;width:32px;height:18px;background:rgb(35,255,0);"></div>
<div style="left:1169px;top:383px;width:33px;height:18px;background:rgb(35,255,0);"></div>
<div style="left:343px;top:401px;width:29px;height:17px;background:#f6f6f6;border-bottom:1px solid #606060;"></div>
<div class="t" style="left:346.74px;top:403.59px;font-size:12.3px;line-height:12.3px;color:#5a5a5a;transform:scaleX(0.93);transform-origin:0 0;">0.32</div>
<div style="left:372px;top:401px;width:26px;height:17px;background:rgb(255,249,0);"></div>
<div style="left:398px;top:401px;width:27px;height:17px;background:rgb(255,249,0);"></div>
<div style="left:425px;top:401px;width:27px;height:17px;background:rgb(255,249,0);"></div>
<div style="left:452px;top:401px;width:32px;height:17px;background:rgb(255,255,0);"></div>
<div style="left:484px;top:401px;width:33px;height:17px;background:rgb(249,255,0);"></div>
<div style="left:517px;top:401px;width:32px;height:17px;background:rgb(203,255,0);"></div>
<div style="left:549px;top:401px;width:33px;height:17px;background:rgb(162,255,0);"></div>
<div style="left:582px;top:401px;width:33px;height:17px;background:rgb(197,255,0);"></div>
<div style="left:615px;top:401px;width:32px;height:17px;background:rgb(238,255,0);"></div>
<div style="left:647px;top:401px;width:33px;height:17px;background:rgb(255,255,0);"></div>
<div style="left:680px;top:401px;width:33px;height:17px;background:rgb(255,238,0);"></div>
<div style="left:713px;top:401px;width:32px;height:17px;background:rgb(255,191,0);"></div>
<div style="left:745px;top:401px;width:33px;height:17px;background:rgb(255,139,0);"></div>
<div style="left:778px;top:401px;width:32px;height:17px;background:rgb(255,116,0);"></div>
<div style="left:810px;top:401px;width:33px;height:17px;background:rgb(255,93,0);"></div>
<div style="left:843px;top:401px;width:33px;height:17px;background:rgb(255,255,0);"></div>
<div style="left:876px;top:401px;width:32px;height:17px;background:rgb(93,255,0);"></div>
<div style="left:908px;top:401px;width:33px;height:17px;background:rgb(75,255,0);"></div>
<div style="left:941px;top:401px;width:33px;height:17px;background:rgb(52,255,0);"></div>
<div style="left:974px;top:401px;width:32px;height:17px;background:rgb(52,255,0);"></div>
<div style="left:1006px;top:401px;width:33px;height:17px;background:rgb(46,255,0);"></div>
<div style="left:1039px;top:401px;width:32px;height:17px;background:rgb(75,255,0);"></div>
<div style="left:1071px;top:401px;width:33px;height:17px;background:rgb(99,255,0);"></div>
<div style="left:1104px;top:401px;width:33px;height:17px;background:rgb(87,255,0);"></div>
<div style="left:1137px;top:401px;width:32px;height:17px;background:rgb(70,255,0);"></div>
<div style="left:1169px;top:401px;width:33px;height:17px;background:rgb(58,255,0);"></div>
<div style="left:343px;top:418px;width:29px;height:18px;background:#f6f6f6;border-bottom:1px solid #606060;"></div>
<div class="t" style="left:346.74px;top:421.19px;font-size:12.3px;line-height:12.3px;color:#5a5a5a;transform:scaleX(0.93);transform-origin:0 0;">0.36</div>
<div style="left:372px;top:418px;width:26px;height:18px;background:rgb(238,255,0);"></div>
<div style="left:398px;top:418px;width:27px;height:18px;background:rgb(238,255,0);"></div>
<div style="left:425px;top:418px;width:27px;height:18px;background:rgb(238,255,0);"></div>
<div style="left:452px;top:418px;width:32px;height:18px;background:rgb(255,249,0);"></div>
<div style="left:484px;top:418px;width:33px;height:18px;background:rgb(255,226,0);"></div>
<div style="left:517px;top:418px;width:32px;height:18px;background:rgb(232,255,0);"></div>
<div style="left:549px;top:418px;width:33px;height:18px;background:rgb(174,255,0);"></div>
<div style="left:582px;top:418px;width:33px;height:18px;background:rgb(162,255,0);"></div>
<div style="left:615px;top:418px;width:32px;height:18px;background:rgb(145,255,0);"></div>
<div style="left:647px;top:418px;width:33px;height:18px;background:rgb(151,255,0);"></div>
<div style="left:680px;top:418px;width:33px;height:18px;background:rgb(151,255,0);"></div>
<div style="left:713px;top:418px;width:32px;height:18px;background:rgb(255,249,0);"></div>
<div style="left:745px;top:418px;width:33px;height:18px;background:rgb(255,145,0);"></div>
<div style="left:778px;top:418px;width:32px;height:18px;background:rgb(255,128,0);"></div>
<div style="left:810px;top:418px;width:33px;height:18px;background:rgb(255,110,0);"></div>
<div style="left:843px;top:418px;width:33px;height:18px;background:rgb(255,255,0);"></div>
<div style="left:876px;top:418px;width:32px;height:18px;background:rgb(110,255,0);"></div>
<div style="left:908px;top:418px;width:33px;height:18px;background:rgb(93,255,0);"></div>
<div style="left:941px;top:418px;width:33px;height:18px;background:rgb(75,255,0);"></div>
<div style="left:974px;top:418px;width:32px;height:18px;background:rgb(87,255,0);"></div>
<div style="left:1006px;top:418px;width:33px;height:18px;background:rgb(93,255,0);"></div>
<div style="left:1039px;top:418px;width:32px;height:18px;background:rgb(122,255,0);"></div>
<div style="left:1071px;top:418px;width:33px;height:18px;background:rgb(151,255,0);"></div>
<div style="left:1104px;top:418px;width:33px;height:18px;background:rgb(128,255,0);"></div>
<div style="left:1137px;top:418px;width:32px;height:18px;background:rgb(104,255,0);"></div>
<div style="left:1169px;top:418px;width:33px;height:18px;background:rgb(93,255,0);"></div>
<div style="left:343px;top:436px;width:29px;height:18px;background:#f6f6f6;border-bottom:1px solid #606060;"></div>
<div class="t" style="left:346.74px;top:438.79px;font-size:12.3px;line-height:12.3px;color:#5a5a5a;transform:scaleX(0.93);transform-origin:0 0;">0.40</div>
<div style="left:372px;top:436px;width:26px;height:18px;background:rgb(255,255,0);"></div>
<div style="left:398px;top:436px;width:27px;height:18px;background:rgb(255,255,0);"></div>
<div style="left:425px;top:436px;width:27px;height:18px;background:rgb(255,255,0);"></div>
<div style="left:452px;top:436px;width:32px;height:18px;background:rgb(255,238,0);"></div>
<div style="left:484px;top:436px;width:33px;height:18px;background:rgb(255,214,0);"></div>
<div style="left:517px;top:436px;width:32px;height:18px;background:rgb(255,243,0);"></div>
<div style="left:549px;top:436px;width:33px;height:18px;background:rgb(232,255,0);"></div>
<div style="left:582px;top:436px;width:33px;height:18px;background:rgb(191,255,0);"></div>
<div style="left:615px;top:436px;width:32px;height:18px;background:rgb(151,255,0);"></div>
<div style="left:647px;top:436px;width:33px;height:18px;background:rgb(156,255,0);"></div>
<div style="left:680px;top:436px;width:33px;height:18px;background:rgb(162,255,0);"></div>
<div style="left:713px;top:436px;width:32px;height:18px;background:rgb(255,255,0);"></div>
<div style="left:745px;top:436px;width:33px;height:18px;background:rgb(255,162,0);"></div>
<div style="left:778px;top:436px;width:32px;height:18px;background:rgb(255,139,0);"></div>
<div style="left:810px;top:436px;width:33px;height:18px;background:rgb(255,110,0);"></div>
<div style="left:843px;top:436px;width:33px;height:18px;background:rgb(255,238,0);"></div>
<div style="left:876px;top:436px;width:32px;height:18px;background:rgb(151,255,0);"></div>
<div style="left:908px;top:436px;width:33px;height:18px;background:rgb(156,255,0);"></div>
<div style="left:941px;top:436px;width:33px;height:18px;background:rgb(162,255,0);"></div>
<div style="left:974px;top:436px;width:32px;height:18px;background:rgb(162,255,0);"></div>
<div style="left:1006px;top:436px;width:33px;height:18px;background:rgb(168,255,0);"></div>
<div style="left:1039px;top:436px;width:32px;height:18px;background:rgb(174,255,0);"></div>
<div style="left:1071px;top:436px;width:33px;height:18px;background:rgb(185,255,0);"></div>
<div style="left:1104px;top:436px;width:33px;height:18px;background:rgb(180,255,0);"></div>
<div style="left:1137px;top:436px;width:32px;height:18px;background:rgb(180,255,0);"></div>
<div style="left:1169px;top:436px;width:33px;height:18px;background:rgb(180,255,0);"></div>
<div style="left:343px;top:454px;width:29px;height:17px;background:#f6f6f6;border-bottom:1px solid #606060;"></div>
<div class="t" style="left:346.74px;top:456.39px;font-size:12.3px;line-height:12.3px;color:#5a5a5a;transform:scaleX(0.93);transform-origin:0 0;">0.44</div>
<div style="left:372px;top:454px;width:26px;height:17px;background:rgb(255,243,0);"></div>
<div style="left:398px;top:454px;width:27px;height:17px;background:rgb(255,243,0);"></div>
<div style="left:425px;top:454px;width:27px;height:17px;background:rgb(255,243,0);"></div>
<div style="left:452px;top:454px;width:32px;height:17px;background:rgb(255,220,0);"></div>
<div style="left:484px;top:454px;width:33px;height:17px;background:rgb(255,203,0);"></div>
<div style="left:517px;top:454px;width:32px;height:17px;background:rgb(255,209,0);"></div>
<div style="left:549px;top:454px;width:33px;height:17px;background:rgb(255,220,0);"></div>
<div style="left:582px;top:454px;width:33px;height:17px;background:rgb(220,255,0);"></div>
<div style="left:615px;top:454px;width:32px;height:17px;background:rgb(151,255,0);"></div>
<div style="left:647px;top:454px;width:33px;height:17px;background:rgb(162,255,0);"></div>
<div style="left:680px;top:454px;width:33px;height:17px;background:rgb(168,255,0);"></div>
<div style="left:713px;top:454px;width:32px;height:17px;background:rgb(249,255,0);"></div>
<div style="left:745px;top:454px;width:33px;height:17px;background:rgb(255,185,0);"></div>
<div style="left:778px;top:454px;width:32px;height:17px;background:rgb(255,151,0);"></div>
<div style="left:810px;top:454px;width:33px;height:17px;background:rgb(255,116,0);"></div>
<div style="left:843px;top:454px;width:33px;height:17px;background:rgb(255,220,0);"></div>
<div style="left:876px;top:454px;width:32px;height:17px;background:rgb(185,255,0);"></div>
<div style="left:908px;top:454px;width:33px;height:17px;background:rgb(220,255,0);"></div>
<div style="left:941px;top:454px;width:33px;height:17px;background:rgb(249,255,0);"></div>
<div style="left:974px;top:454px;width:32px;height:17px;background:rgb(243,255,0);"></div>
<div style="left:1006px;top:454px;width:33px;height:17px;background:rgb(238,255,0);"></div>
<div style="left:1039px;top:454px;width:32px;height:17px;background:rgb(232,255,0);"></div>
<div style="left:1071px;top:454px;width:33px;height:17px;background:rgb(220,255,0);"></div>
<div style="left:1104px;top:454px;width:33px;height:17px;background:rgb(238,255,0);"></div>
<div style="left:1137px;top:454px;width:32px;height:17px;background:rgb(249,255,0);"></div>
<div style="left:1169px;top:454px;width:33px;height:17px;background:rgb(255,249,0);"></div>
<div style="left:343px;top:471px;width:29px;height:18px;background:#f6f6f6;border-bottom:1px solid #606060;"></div>
<div class="t" style="left:346.74px;top:473.99px;font-size:12.3px;line-height:12.3px;color:#5a5a5a;transform:scaleX(0.93);transform-origin:0 0;">0.48</div>
<div style="left:372px;top:471px;width:26px;height:18px;background:rgb(220,255,0);"></div>
<div style="left:398px;top:471px;width:27px;height:18px;background:rgb(220,255,0);"></div>
<div style="left:425px;top:471px;width:27px;height:18px;background:rgb(220,255,0);"></div>
<div style="left:452px;top:471px;width:32px;height:18px;background:rgb(220,255,0);"></div>
<div style="left:484px;top:471px;width:33px;height:18px;background:rgb(220,255,0);"></div>
<div style="left:517px;top:471px;width:32px;height:18px;background:rgb(214,255,0);"></div>
<div style="left:549px;top:471px;width:33px;height:18px;background:rgb(214,255,0);"></div>
<div style="left:582px;top:471px;width:33px;height:18px;background:rgb(203,255,0);"></div>
<div style="left:615px;top:471px;width:32px;height:18px;background:rgb(191,255,0);"></div>
<div style="left:647px;top:471px;width:33px;height:18px;background:rgb(197,255,0);"></div>
<div style="left:680px;top:471px;width:33px;height:18px;background:rgb(197,255,0);"></div>
<div style="left:713px;top:471px;width:32px;height:18px;background:rgb(255,255,0);"></div>
<div style="left:745px;top:471px;width:33px;height:18px;background:rgb(255,191,0);"></div>
<div style="left:778px;top:471px;width:32px;height:18px;background:rgb(255,168,0);"></div>
<div style="left:810px;top:471px;width:33px;height:18px;background:rgb(255,139,0);"></div>
<div style="left:843px;top:471px;width:33px;height:18px;background:rgb(255,174,0);"></div>
<div style="left:876px;top:471px;width:32px;height:18px;background:rgb(255,203,0);"></div>
<div style="left:908px;top:471px;width:33px;height:18px;background:rgb(255,226,0);"></div>
<div style="left:941px;top:471px;width:33px;height:18px;background:rgb(255,243,0);"></div>
<div style="left:974px;top:471px;width:32px;height:18px;background:rgb(255,249,0);"></div>
<div style="left:1006px;top:471px;width:33px;height:18px;background:rgb(255,255,0);"></div>
<div style="left:1039px;top:471px;width:32px;height:18px;background:rgb(249,255,0);"></div>
<div style="left:1071px;top:471px;width:33px;height:18px;background:rgb(249,255,0);"></div>
<div style="left:1104px;top:471px;width:33px;height:18px;background:rgb(255,255,0);"></div>
<div style="left:1137px;top:471px;width:32px;height:18px;background:rgb(255,243,0);"></div>
<div style="left:1169px;top:471px;width:33px;height:18px;background:rgb(255,232,0);"></div>
<div style="left:343px;top:489px;width:29px;height:17px;background:#f6f6f6;border-bottom:1px solid #606060;"></div>
<div class="t" style="left:346.74px;top:491.59px;font-size:12.3px;line-height:12.3px;color:#5a5a5a;transform:scaleX(0.93);transform-origin:0 0;">0.52</div>
<div style="left:372px;top:489px;width:26px;height:17px;background:rgb(174,255,0);"></div>
<div style="left:398px;top:489px;width:27px;height:17px;background:rgb(174,255,0);"></div>
<div style="left:425px;top:489px;width:27px;height:17px;background:rgb(174,255,0);"></div>
<div style="left:452px;top:489px;width:32px;height:17px;background:rgb(156,255,0);"></div>
<div style="left:484px;top:489px;width:33px;height:17px;background:rgb(133,255,0);"></div>
<div style="left:517px;top:489px;width:32px;height:17px;background:rgb(133,255,0);"></div>
<div style="left:549px;top:489px;width:33px;height:17px;background:rgb(133,255,0);"></div>
<div style="left:582px;top:489px;width:33px;height:17px;background:rgb(185,255,0);"></div>
<div style="left:615px;top:489px;width:32px;height:17px;background:rgb(232,255,0);"></div>
<div style="left:647px;top:489px;width:33px;height:17px;background:rgb(232,255,0);"></div>
<div style="left:680px;top:489px;width:33px;height:17px;background:rgb(226,255,0);"></div>
<div style="left:713px;top:489px;width:32px;height:17px;background:rgb(255,243,0);"></div>
<div style="left:745px;top:489px;width:33px;height:17px;background:rgb(255,203,0);"></div>
<div style="left:778px;top:489px;width:32px;height:17px;background:rgb(255,180,0);"></div>
<div style="left:810px;top:489px;width:33px;height:17px;background:rgb(255,162,0);"></div>
<div style="left:843px;top:489px;width:33px;height:17px;background:rgb(255,122,0);"></div>
<div style="left:876px;top:489px;width:32px;height:17px;background:rgb(255,87,0);"></div>
<div style="left:908px;top:489px;width:33px;height:17px;background:rgb(255,156,0);"></div>
<div style="left:941px;top:489px;width:33px;height:17px;background:rgb(255,232,0);"></div>
<div style="left:974px;top:489px;width:32px;height:17px;background:rgb(255,238,0);"></div>
<div style="left:1006px;top:489px;width:33px;height:17px;background:rgb(255,243,0);"></div>
<div style="left:1039px;top:489px;width:32px;height:17px;background:rgb(255,238,0);"></div>
<div style="left:1071px;top:489px;width:33px;height:17px;background:rgb(255,232,0);"></div>
<div style="left:1104px;top:489px;width:33px;height:17px;background:rgb(255,232,0);"></div>
<div style="left:1137px;top:489px;width:32px;height:17px;background:rgb(255,232,0);"></div>
<div style="left:1169px;top:489px;width:33px;height:17px;background:rgb(255,226,0);"></div>
<div style="left:343px;top:506px;width:29px;height:18px;background:#f6f6f6;border-bottom:1px solid #606060;"></div>
<div class="t" style="left:346.74px;top:509.19px;font-size:12.3px;line-height:12.3px;color:#5a5a5a;transform:scaleX(0.93);transform-origin:0 0;">0.56</div>
<div style="left:372px;top:506px;width:26px;height:18px;background:rgb(162,255,0);"></div>
<div style="left:398px;top:506px;width:27px;height:18px;background:rgb(162,255,0);"></div>
<div style="left:425px;top:506px;width:27px;height:18px;background:rgb(162,255,0);"></div>
<div style="left:452px;top:506px;width:32px;height:18px;background:rgb(156,255,0);"></div>
<div style="left:484px;top:506px;width:33px;height:18px;background:rgb(151,255,0);"></div>
<div style="left:517px;top:506px;width:32px;height:18px;background:rgb(151,255,0);"></div>
<div style="left:549px;top:506px;width:33px;height:18px;background:rgb(156,255,0);"></div>
<div style="left:582px;top:506px;width:33px;height:18px;background:rgb(203,255,0);"></div>
<div style="left:615px;top:506px;width:32px;height:18px;background:rgb(249,255,0);"></div>
<div style="left:647px;top:506px;width:33px;height:18px;background:rgb(255,249,0);"></div>
<div style="left:680px;top:506px;width:33px;height:18px;background:rgb(255,232,0);"></div>
<div style="left:713px;top:506px;width:32px;height:18px;background:rgb(255,197,0);"></div>
<div style="left:745px;top:506px;width:33px;height:18px;background:rgb(255,156,0);"></div>
<div style="left:778px;top:506px;width:32px;height:18px;background:rgb(255,151,0);"></div>
<div style="left:810px;top:506px;width:33px;height:18px;background:rgb(255,145,0);"></div>
<div style="left:843px;top:506px;width:33px;height:18px;background:rgb(255,110,0);"></div>
<div style="left:876px;top:506px;width:32px;height:18px;background:rgb(255,81,0);"></div>
<div style="left:908px;top:506px;width:33px;height:18px;background:rgb(255,156,0);"></div>
<div style="left:941px;top:506px;width:33px;height:18px;background:rgb(255,232,0);"></div>
<div style="left:974px;top:506px;width:32px;height:18px;background:rgb(255,232,0);"></div>
<div style="left:1006px;top:506px;width:33px;height:18px;background:rgb(255,238,0);"></div>
<div style="left:1039px;top:506px;width:32px;height:18px;background:rgb(255,226,0);"></div>
<div style="left:1071px;top:506px;width:33px;height:18px;background:rgb(255,214,0);"></div>
<div style="left:1104px;top:506px;width:33px;height:18px;background:rgb(255,214,0);"></div>
<div style="left:1137px;top:506px;width:32px;height:18px;background:rgb(255,214,0);"></div>
<div style="left:1169px;top:506px;width:33px;height:18px;background:rgb(255,209,0);"></div>
<div style="left:343px;top:524px;width:29px;height:18px;background:#f6f6f6;border-bottom:1px solid #606060;"></div>
<div class="t" style="left:346.74px;top:526.79px;font-size:12.3px;line-height:12.3px;color:#5a5a5a;transform:scaleX(0.93);transform-origin:0 0;">0.60</div>
<div style="left:372px;top:524px;width:26px;height:18px;background:rgb(151,255,0);"></div>
<div style="left:398px;top:524px;width:27px;height:18px;background:rgb(151,255,0);"></div>
<div style="left:425px;top:524px;width:27px;height:18px;background:rgb(151,255,0);"></div>
<div style="left:452px;top:524px;width:32px;height:18px;background:rgb(156,255,0);"></div>
<div style="left:484px;top:524px;width:33px;height:18px;background:rgb(162,255,0);"></div>
<div style="left:517px;top:524px;width:32px;height:18px;background:rgb(168,255,0);"></div>
<div style="left:549px;top:524px;width:33px;height:18px;background:rgb(174,255,0);"></div>
<div style="left:582px;top:524px;width:33px;height:18px;background:rgb(220,255,0);"></div>
<div style="left:615px;top:524px;width:32px;height:18px;background:rgb(255,243,0);"></div>
<div style="left:647px;top:524px;width:33px;height:18px;background:rgb(255,214,0);"></div>
<div style="left:680px;top:524px;width:33px;height:18px;background:rgb(255,185,0);"></div>
<div style="left:713px;top:524px;width:32px;height:18px;background:rgb(255,151,0);"></div>
<div style="left:745px;top:524px;width:33px;height:18px;background:rgb(255,116,0);"></div>
<div style="left:778px;top:524px;width:32px;height:18px;background:rgb(255,122,0);"></div>
<div style="left:810px;top:524px;width:33px;height:18px;background:rgb(255,128,0);"></div>
<div style="left:843px;top:524px;width:33px;height:18px;background:rgb(255,99,0);"></div>
<div style="left:876px;top:524px;width:32px;height:18px;background:rgb(255,75,0);"></div>
<div style="left:908px;top:524px;width:33px;height:18px;background:rgb(255,151,0);"></div>
<div style="left:941px;top:524px;width:33px;height:18px;background:rgb(255,232,0);"></div>
<div style="left:974px;top:524px;width:32px;height:18px;background:rgb(255,232,0);"></div>
<div style="left:1006px;top:524px;width:33px;height:18px;background:rgb(255,232,0);"></div>
<div style="left:1039px;top:524px;width:32px;height:18px;background:rgb(255,214,0);"></div>
<div style="left:1071px;top:524px;width:33px;height:18px;background:rgb(255,203,0);"></div>
<div style="left:1104px;top:524px;width:33px;height:18px;background:rgb(255,203,0);"></div>
<div style="left:1137px;top:524px;width:32px;height:18px;background:rgb(255,203,0);"></div>
<div style="left:1169px;top:524px;width:33px;height:18px;background:rgb(255,197,0);"></div>
<div style="left:343px;top:542px;width:29px;height:17px;background:#f6f6f6;border-bottom:1px solid #606060;"></div>
<div class="t" style="left:346.74px;top:544.39px;font-size:12.3px;line-height:12.3px;color:#5a5a5a;transform:scaleX(0.93);transform-origin:0 0;">0.64</div>
<div style="left:372px;top:542px;width:26px;height:17px;background:rgb(139,255,0);"></div>
<div style="left:398px;top:542px;width:27px;height:17px;background:rgb(139,255,0);"></div>
<div style="left:425px;top:542px;width:27px;height:17px;background:rgb(139,255,0);"></div>
<div style="left:452px;top:542px;width:32px;height:17px;background:rgb(151,255,0);"></div>
<div style="left:484px;top:542px;width:33px;height:17px;background:rgb(162,255,0);"></div>
<div style="left:517px;top:542px;width:32px;height:17px;background:rgb(168,255,0);"></div>
<div style="left:549px;top:542px;width:33px;height:17px;background:rgb(168,255,0);"></div>
<div style="left:582px;top:542px;width:33px;height:17px;background:rgb(220,255,0);"></div>
<div style="left:615px;top:542px;width:32px;height:17px;background:rgb(255,238,0);"></div>
<div style="left:647px;top:542px;width:33px;height:17px;background:rgb(255,203,0);"></div>
<div style="left:680px;top:542px;width:33px;height:17px;background:rgb(255,168,0);"></div>
<div style="left:713px;top:542px;width:32px;height:17px;background:rgb(255,139,0);"></div>
<div style="left:745px;top:542px;width:33px;height:17px;background:rgb(255,116,0);"></div>
<div style="left:778px;top:542px;width:32px;height:17px;background:rgb(255,104,0);"></div>
<div style="left:810px;top:542px;width:33px;height:17px;background:rgb(255,99,0);"></div>
<div style="left:843px;top:542px;width:33px;height:17px;background:rgb(255,75,0);"></div>
<div style="left:876px;top:542px;width:32px;height:17px;background:rgb(255,52,0);"></div>
<div style="left:908px;top:542px;width:33px;height:17px;background:rgb(255,122,0);"></div>
<div style="left:941px;top:542px;width:33px;height:17px;background:rgb(255,191,0);"></div>
<div style="left:974px;top:542px;width:32px;height:17px;background:rgb(255,197,0);"></div>
<div style="left:1006px;top:542px;width:33px;height:17px;background:rgb(255,197,0);"></div>
<div style="left:1039px;top:542px;width:32px;height:17px;background:rgb(255,197,0);"></div>
<div style="left:1071px;top:542px;width:33px;height:17px;background:rgb(255,203,0);"></div>
<div style="left:1104px;top:542px;width:33px;height:17px;background:rgb(255,197,0);"></div>
<div style="left:1137px;top:542px;width:32px;height:17px;background:rgb(255,191,0);"></div>
<div style="left:1169px;top:542px;width:33px;height:17px;background:rgb(255,180,0);"></div>
<div style="left:343px;top:559px;width:29px;height:18px;background:#f6f6f6;border-bottom:1px solid #606060;"></div>
<div class="t" style="left:346.74px;top:561.99px;font-size:12.3px;line-height:12.3px;color:#5a5a5a;transform:scaleX(0.93);transform-origin:0 0;">0.68</div>
<div style="left:372px;top:559px;width:26px;height:18px;background:rgb(128,255,0);"></div>
<div style="left:398px;top:559px;width:27px;height:18px;background:rgb(128,255,0);"></div>
<div style="left:425px;top:559px;width:27px;height:18px;background:rgb(128,255,0);"></div>
<div style="left:452px;top:559px;width:32px;height:18px;background:rgb(145,255,0);"></div>
<div style="left:484px;top:559px;width:33px;height:18px;background:rgb(162,255,0);"></div>
<div style="left:517px;top:559px;width:32px;height:18px;background:rgb(162,255,0);"></div>
<div style="left:549px;top:559px;width:33px;height:18px;background:rgb(162,255,0);"></div>
<div style="left:582px;top:559px;width:33px;height:18px;background:rgb(220,255,0);"></div>
<div style="left:615px;top:559px;width:32px;height:18px;background:rgb(255,232,0);"></div>
<div style="left:647px;top:559px;width:33px;height:18px;background:rgb(255,191,0);"></div>
<div style="left:680px;top:559px;width:33px;height:18px;background:rgb(255,151,0);"></div>
<div style="left:713px;top:559px;width:32px;height:18px;background:rgb(255,133,0);"></div>
<div style="left:745px;top:559px;width:33px;height:18px;background:rgb(255,116,0);"></div>
<div style="left:778px;top:559px;width:32px;height:18px;background:rgb(255,93,0);"></div>
<div style="left:810px;top:559px;width:33px;height:18px;background:rgb(255,70,0);"></div>
<div style="left:843px;top:559px;width:33px;height:18px;background:rgb(255,46,0);"></div>
<div style="left:876px;top:559px;width:32px;height:18px;background:rgb(255,29,0);"></div>
<div style="left:908px;top:559px;width:33px;height:18px;background:rgb(255,93,0);"></div>
<div style="left:941px;top:559px;width:33px;height:18px;background:rgb(255,156,0);"></div>
<div style="left:974px;top:559px;width:32px;height:18px;background:rgb(255,156,0);"></div>
<div style="left:1006px;top:559px;width:33px;height:18px;background:rgb(255,162,0);"></div>
<div style="left:1039px;top:559px;width:32px;height:18px;background:rgb(255,180,0);"></div>
<div style="left:1071px;top:559px;width:33px;height:18px;background:rgb(255,203,0);"></div>
<div style="left:1104px;top:559px;width:33px;height:18px;background:rgb(255,191,0);"></div>
<div style="left:1137px;top:559px;width:32px;height:18px;background:rgb(255,185,0);"></div>
<div style="left:1169px;top:559px;width:33px;height:18px;background:rgb(255,174,0);"></div>
<div style="left:343px;top:577px;width:29px;height:17px;background:#f6f6f6;border-bottom:1px solid #606060;"></div>
<div class="t" style="left:346.74px;top:579.59px;font-size:12.3px;line-height:12.3px;color:#5a5a5a;transform:scaleX(0.93);transform-origin:0 0;">0.72</div>
<div style="left:372px;top:577px;width:26px;height:17px;background:rgb(104,255,0);"></div>
<div style="left:398px;top:577px;width:27px;height:17px;background:rgb(104,255,0);"></div>
<div style="left:425px;top:577px;width:27px;height:17px;background:rgb(104,255,0);"></div>
<div style="left:452px;top:577px;width:32px;height:17px;background:rgb(116,255,0);"></div>
<div style="left:484px;top:577px;width:33px;height:17px;background:rgb(128,255,0);"></div>
<div style="left:517px;top:577px;width:32px;height:17px;background:rgb(151,255,0);"></div>
<div style="left:549px;top:577px;width:33px;height:17px;background:rgb(180,255,0);"></div>
<div style="left:582px;top:577px;width:33px;height:17px;background:rgb(209,255,0);"></div>
<div style="left:615px;top:577px;width:32px;height:17px;background:rgb(238,255,0);"></div>
<div style="left:647px;top:577px;width:33px;height:17px;background:rgb(255,249,0);"></div>
<div style="left:680px;top:577px;width:33px;height:17px;background:rgb(255,226,0);"></div>
<div style="left:713px;top:577px;width:32px;height:17px;background:rgb(255,203,0);"></div>
<div style="left:745px;top:577px;width:33px;height:17px;background:rgb(255,174,0);"></div>
<div style="left:778px;top:577px;width:32px;height:17px;background:rgb(255,151,0);"></div>
<div style="left:810px;top:577px;width:33px;height:17px;background:rgb(255,122,0);"></div>
<div style="left:843px;top:577px;width:33px;height:17px;background:rgb(255,104,0);"></div>
<div style="left:876px;top:577px;width:32px;height:17px;background:rgb(255,81,0);"></div>
<div style="left:908px;top:577px;width:33px;height:17px;background:rgb(255,116,0);"></div>
<div style="left:941px;top:577px;width:33px;height:17px;background:rgb(255,156,0);"></div>
<div style="left:974px;top:577px;width:32px;height:17px;background:rgb(255,156,0);"></div>
<div style="left:1006px;top:577px;width:33px;height:17px;background:rgb(255,156,0);"></div>
<div style="left:1039px;top:577px;width:32px;height:17px;background:rgb(255,168,0);"></div>
<div style="left:1071px;top:577px;width:33px;height:17px;background:rgb(255,180,0);"></div>
<div style="left:1104px;top:577px;width:33px;height:17px;background:rgb(255,168,0);"></div>
<div style="left:1137px;top:577px;width:32px;height:17px;background:rgb(255,156,0);"></div>
<div style="left:1169px;top:577px;width:33px;height:17px;background:rgb(255,139,0);"></div>
<div style="left:343px;top:594px;width:29px;height:18px;background:#f6f6f6;border-bottom:1px solid #606060;"></div>
<div class="t" style="left:346.74px;top:597.19px;font-size:12.3px;line-height:12.3px;color:#5a5a5a;transform:scaleX(0.93);transform-origin:0 0;">0.76</div>
<div style="left:372px;top:594px;width:26px;height:18px;background:rgb(75,255,0);"></div>
<div style="left:398px;top:594px;width:27px;height:18px;background:rgb(75,255,0);"></div>
<div style="left:425px;top:594px;width:27px;height:18px;background:rgb(75,255,0);"></div>
<div style="left:452px;top:594px;width:32px;height:18px;background:rgb(87,255,0);"></div>
<div style="left:484px;top:594px;width:33px;height:18px;background:rgb(93,255,0);"></div>
<div style="left:517px;top:594px;width:32px;height:18px;background:rgb(145,255,0);"></div>
<div style="left:549px;top:594px;width:33px;height:18px;background:rgb(191,255,0);"></div>
<div style="left:582px;top:594px;width:33px;height:18px;background:rgb(197,255,0);"></div>
<div style="left:615px;top:594px;width:32px;height:18px;background:rgb(197,255,0);"></div>
<div style="left:647px;top:594px;width:33px;height:18px;background:rgb(203,255,0);"></div>
<div style="left:680px;top:594px;width:33px;height:18px;background:rgb(209,255,0);"></div>
<div style="left:713px;top:594px;width:32px;height:18px;background:rgb(243,255,0);"></div>
<div style="left:745px;top:594px;width:33px;height:18px;background:rgb(255,238,0);"></div>
<div style="left:778px;top:594px;width:32px;height:18px;background:rgb(255,209,0);"></div>
<div style="left:810px;top:594px;width:33px;height:18px;background:rgb(255,180,0);"></div>
<div style="left:843px;top:594px;width:33px;height:18px;background:rgb(255,156,0);"></div>
<div style="left:876px;top:594px;width:32px;height:18px;background:rgb(255,133,0);"></div>
<div style="left:908px;top:594px;width:33px;height:18px;background:rgb(255,145,0);"></div>
<div style="left:941px;top:594px;width:33px;height:18px;background:rgb(255,156,0);"></div>
<div style="left:974px;top:594px;width:32px;height:18px;background:rgb(255,156,0);"></div>
<div style="left:1006px;top:594px;width:33px;height:18px;background:rgb(255,156,0);"></div>
<div style="left:1039px;top:594px;width:32px;height:18px;background:rgb(255,156,0);"></div>
<div style="left:1071px;top:594px;width:33px;height:18px;background:rgb(255,156,0);"></div>
<div style="left:1104px;top:594px;width:33px;height:18px;background:rgb(255,145,0);"></div>
<div style="left:1137px;top:594px;width:32px;height:18px;background:rgb(255,133,0);"></div>
<div style="left:1169px;top:594px;width:33px;height:18px;background:rgb(255,116,0);"></div>
<div style="left:372px;top:312px;width:812px;height:1px;background:rgba(255,255,255,0.5);"></div>
<div style="left:372px;top:329px;width:812px;height:1px;background:rgba(255,255,255,0.5);"></div>
<div style="left:372px;top:347px;width:812px;height:1px;background:rgba(255,255,255,0.5);"></div>
<div style="left:372px;top:365px;width:812px;height:1px;background:rgba(255,255,255,0.5);"></div>
<div style="left:372px;top:382px;width:812px;height:1px;background:rgba(255,255,255,0.5);"></div>
<div style="left:372px;top:400px;width:812px;height:1px;background:rgba(255,255,255,0.5);"></div>
<div style="left:372px;top:417px;width:812px;height:1px;background:rgba(255,255,255,0.5);"></div>
<div style="left:372px;top:435px;width:812px;height:1px;background:rgba(255,255,255,0.5);"></div>
<div style="left:372px;top:453px;width:812px;height:1px;background:rgba(255,255,255,0.5);"></div>
<div style="left:372px;top:470px;width:812px;height:1px;background:rgba(255,255,255,0.5);"></div>
<div style="left:372px;top:488px;width:812px;height:1px;background:rgba(255,255,255,0.5);"></div>
<div style="left:372px;top:505px;width:812px;height:1px;background:rgba(255,255,255,0.5);"></div>
<div style="left:372px;top:523px;width:812px;height:1px;background:rgba(255,255,255,0.5);"></div>
<div style="left:372px;top:541px;width:812px;height:1px;background:rgba(255,255,255,0.5);"></div>
<div style="left:372px;top:558px;width:812px;height:1px;background:rgba(255,255,255,0.5);"></div>
<div style="left:372px;top:576px;width:812px;height:1px;background:rgba(255,255,255,0.5);"></div>
<div style="left:372px;top:593px;width:812px;height:1px;background:rgba(255,255,255,0.5);"></div>
<div style="left:372px;top:611px;width:812px;height:1px;background:rgba(255,255,255,0.5);"></div>
<div style="left:397px;top:295px;width:1px;height:317px;background:rgba(255,255,255,0.5);"></div>
<div style="left:424px;top:295px;width:1px;height:317px;background:rgba(255,255,255,0.5);"></div>
<div style="left:451px;top:295px;width:1px;height:317px;background:rgba(255,255,255,0.5);"></div>
<div style="left:483px;top:295px;width:1px;height:317px;background:rgba(255,255,255,0.5);"></div>
<div style="left:516px;top:295px;width:1px;height:317px;background:rgba(255,255,255,0.5);"></div>
<div style="left:548px;top:295px;width:1px;height:317px;background:rgba(255,255,255,0.5);"></div>
<div style="left:581px;top:295px;width:1px;height:317px;background:rgba(255,255,255,0.5);"></div>
<div style="left:614px;top:295px;width:1px;height:317px;background:rgba(255,255,255,0.5);"></div>
<div style="left:646px;top:295px;width:1px;height:317px;background:rgba(255,255,255,0.5);"></div>
<div style="left:679px;top:295px;width:1px;height:317px;background:rgba(255,255,255,0.5);"></div>
<div style="left:712px;top:295px;width:1px;height:317px;background:rgba(255,255,255,0.5);"></div>
<div style="left:744px;top:295px;width:1px;height:317px;background:rgba(255,255,255,0.5);"></div>
<div style="left:777px;top:295px;width:1px;height:317px;background:rgba(255,255,255,0.5);"></div>
<div style="left:809px;top:295px;width:1px;height:317px;background:rgba(255,255,255,0.5);"></div>
<div style="left:842px;top:295px;width:1px;height:317px;background:rgba(255,255,255,0.5);"></div>
<div style="left:875px;top:295px;width:1px;height:317px;background:rgba(255,255,255,0.5);"></div>
<div style="left:907px;top:295px;width:1px;height:317px;background:rgba(255,255,255,0.5);"></div>
<div style="left:940px;top:295px;width:1px;height:317px;background:rgba(255,255,255,0.5);"></div>
<div style="left:973px;top:295px;width:1px;height:317px;background:rgba(255,255,255,0.5);"></div>
<div style="left:1005px;top:295px;width:1px;height:317px;background:rgba(255,255,255,0.5);"></div>
<div style="left:1038px;top:295px;width:1px;height:317px;background:rgba(255,255,255,0.5);"></div>
<div style="left:1070px;top:295px;width:1px;height:317px;background:rgba(255,255,255,0.5);"></div>
<div style="left:1103px;top:295px;width:1px;height:317px;background:rgba(255,255,255,0.5);"></div>
<div style="left:1136px;top:295px;width:1px;height:317px;background:rgba(255,255,255,0.5);"></div>
<div style="left:1168px;top:295px;width:1px;height:317px;background:rgba(255,255,255,0.5);"></div>
<div style="left:1201px;top:295px;width:1px;height:317px;background:rgba(255,255,255,0.5);"></div>
<div class="t" style="left:375.53px;top:297.99px;font-size:12.3px;line-height:12.3px;color:#fff;transform:scaleX(0.9);transform-origin:0 0;">315</div>
<div class="t" style="left:402.03px;top:297.99px;font-size:12.3px;line-height:12.3px;color:#333;transform:scaleX(0.9);transform-origin:0 0;">315</div>
<div class="t" style="left:428.53px;top:297.99px;font-size:12.3px;line-height:12.3px;color:#333;transform:scaleX(0.9);transform-origin:0 0;">315</div>
<div class="t" style="left:461.16px;top:297.99px;font-size:12.3px;line-height:12.3px;color:#333;transform:scaleX(0.9);transform-origin:0 0;">320</div>
<div class="t" style="left:493.79px;top:297.99px;font-size:12.3px;line-height:12.3px;color:#333;transform:scaleX(0.9);transform-origin:0 0;">325</div>
<div class="t" style="left:526.42px;top:297.99px;font-size:12.3px;line-height:12.3px;color:#333;transform:scaleX(0.9);transform-origin:0 0;">330</div>
<div class="t" style="left:559.05px;top:297.99px;font-size:12.3px;line-height:12.3px;color:#333;transform:scaleX(0.9);transform-origin:0 0;">335</div>
<div class="t" style="left:591.68px;top:297.99px;font-size:12.3px;line-height:12.3px;color:#333;transform:scaleX(0.9);transform-origin:0 0;">340</div>
<div class="t" style="left:624.31px;top:297.99px;font-size:12.3px;line-height:12.3px;color:#333;transform:scaleX(0.9);transform-origin:0 0;">340</div>
<div class="t" style="left:656.94px;top:297.99px;font-size:12.3px;line-height:12.3px;color:#333;transform:scaleX(0.9);transform-origin:0 0;">330</div>
<div class="t" style="left:689.57px;top:297.99px;font-size:12.3px;line-height:12.3px;color:#333;transform:scaleX(0.9);transform-origin:0 0;">320</div>
<div class="t" style="left:722.20px;top:297.99px;font-size:12.3px;line-height:12.3px;color:#333;transform:scaleX(0.9);transform-origin:0 0;">328</div>
<div class="t" style="left:754.83px;top:297.99px;font-size:12.3px;line-height:12.3px;color:#333;transform:scaleX(0.9);transform-origin:0 0;">335</div>
<div class="t" style="left:787.46px;top:297.99px;font-size:12.3px;line-height:12.3px;color:#333;transform:scaleX(0.9);transform-origin:0 0;">338</div>
<div class="t" style="left:820.09px;top:297.99px;font-size:12.3px;line-height:12.3px;color:#333;transform:scaleX(0.9);transform-origin:0 0;">340</div>
<div class="t" style="left:852.72px;top:297.99px;font-size:12.3px;line-height:12.3px;color:#333;transform:scaleX(0.9);transform-origin:0 0;">335</div>
<div class="t" style="left:885.35px;top:297.99px;font-size:12.3px;line-height:12.3px;color:#333;transform:scaleX(0.9);transform-origin:0 0;">329</div>
<div class="t" style="left:917.98px;top:297.99px;font-size:12.3px;line-height:12.3px;color:#333;transform:scaleX(0.9);transform-origin:0 0;">327</div>
<div class="t" style="left:950.61px;top:297.99px;font-size:12.3px;line-height:12.3px;color:#333;transform:scaleX(0.9);transform-origin:0 0;">325</div>
<div class="t" style="left:983.24px;top:297.99px;font-size:12.3px;line-height:12.3px;color:#333;transform:scaleX(0.9);transform-origin:0 0;">323</div>
<div class="t" style="left:1015.87px;top:297.99px;font-size:12.3px;line-height:12.3px;color:#333;transform:scaleX(0.9);transform-origin:0 0;">320</div>
<div class="t" style="left:1048.50px;top:297.99px;font-size:12.3px;line-height:12.3px;color:#333;transform:scaleX(0.9);transform-origin:0 0;">313</div>
<div class="t" style="left:1081.13px;top:297.99px;font-size:12.3px;line-height:12.3px;color:#333;transform:scaleX(0.9);transform-origin:0 0;">305</div>
<div class="t" style="left:1113.76px;top:297.99px;font-size:12.3px;line-height:12.3px;color:#333;transform:scaleX(0.9);transform-origin:0 0;">303</div>
<div class="t" style="left:1146.39px;top:297.99px;font-size:12.3px;line-height:12.3px;color:#333;transform:scaleX(0.9);transform-origin:0 0;">300</div>
<div class="t" style="left:1179.02px;top:297.99px;font-size:12.3px;line-height:12.3px;color:#333;transform:scaleX(0.9);transform-origin:0 0;">298</div>
<div class="t" style="left:375.53px;top:315.59px;font-size:12.3px;line-height:12.3px;color:#333;transform:scaleX(0.9);transform-origin:0 0;">315</div>
<div class="t" style="left:402.03px;top:315.59px;font-size:12.3px;line-height:12.3px;color:#333;transform:scaleX(0.9);transform-origin:0 0;">315</div>
<div class="t" style="left:428.53px;top:315.59px;font-size:12.3px;line-height:12.3px;color:#333;transform:scaleX(0.9);transform-origin:0 0;">315</div>
<div class="t" style="left:461.16px;top:315.59px;font-size:12.3px;line-height:12.3px;color:#333;transform:scaleX(0.9);transform-origin:0 0;">320</div>
<div class="t" style="left:493.79px;top:315.59px;font-size:12.3px;line-height:12.3px;color:#333;transform:scaleX(0.9);transform-origin:0 0;">325</div>
<div class="t" style="left:526.42px;top:315.59px;font-size:12.3px;line-height:12.3px;color:#333;transform:scaleX(0.9);transform-origin:0 0;">330</div>
<div class="t" style="left:559.05px;top:315.59px;font-size:12.3px;line-height:12.3px;color:#333;transform:scaleX(0.9);transform-origin:0 0;">335</div>
<div class="t" style="left:591.68px;top:315.59px;font-size:12.3px;line-height:12.3px;color:#333;transform:scaleX(0.9);transform-origin:0 0;">340</div>
<div class="t" style="left:624.31px;top:315.59px;font-size:12.3px;line-height:12.3px;color:#333;transform:scaleX(0.9);transform-origin:0 0;">340</div>
<div class="t" style="left:656.94px;top:315.59px;font-size:12.3px;line-height:12.3px;color:#333;transform:scaleX(0.9);transform-origin:0 0;">330</div>
<div class="t" style="left:689.57px;top:315.59px;font-size:12.3px;line-height:12.3px;color:#333;transform:scaleX(0.9);transform-origin:0 0;">320</div>
<div class="t" style="left:722.20px;top:315.59px;font-size:12.3px;line-height:12.3px;color:#333;transform:scaleX(0.9);transform-origin:0 0;">328</div>
<div class="t" style="left:754.83px;top:315.59px;font-size:12.3px;line-height:12.3px;color:#333;transform:scaleX(0.9);transform-origin:0 0;">335</div>
<div class="t" style="left:787.46px;top:315.59px;font-size:12.3px;line-height:12.3px;color:#333;transform:scaleX(0.9);transform-origin:0 0;">338</div>
<div class="t" style="left:820.09px;top:315.59px;font-size:12.3px;line-height:12.3px;color:#333;transform:scaleX(0.9);transform-origin:0 0;">340</div>
<div class="t" style="left:852.72px;top:315.59px;font-size:12.3px;line-height:12.3px;color:#333;transform:scaleX(0.9);transform-origin:0 0;">335</div>
<div class="t" style="left:885.35px;top:315.59px;font-size:12.3px;line-height:12.3px;color:#333;transform:scaleX(0.9);transform-origin:0 0;">329</div>
<div class="t" style="left:917.98px;top:315.59px;font-size:12.3px;line-height:12.3px;color:#333;transform:scaleX(0.9);transform-origin:0 0;">327</div>
<div class="t" style="left:950.61px;top:315.59px;font-size:12.3px;line-height:12.3px;color:#333;transform:scaleX(0.9);transform-origin:0 0;">325</div>
<div class="t" style="left:983.24px;top:315.59px;font-size:12.3px;line-height:12.3px;color:#333;transform:scaleX(0.9);transform-origin:0 0;">323</div>
<div class="t" style="left:1015.87px;top:315.59px;font-size:12.3px;line-height:12.3px;color:#333;transform:scaleX(0.9);transform-origin:0 0;">320</div>
<div class="t" style="left:1048.50px;top:315.59px;font-size:12.3px;line-height:12.3px;color:#333;transform:scaleX(0.9);transform-origin:0 0;">313</div>
<div class="t" style="left:1081.13px;top:315.59px;font-size:12.3px;line-height:12.3px;color:#333;transform:scaleX(0.9);transform-origin:0 0;">305</div>
<div class="t" style="left:1113.76px;top:315.59px;font-size:12.3px;line-height:12.3px;color:#333;transform:scaleX(0.9);transform-origin:0 0;">303</div>
<div class="t" style="left:1146.39px;top:315.59px;font-size:12.3px;line-height:12.3px;color:#333;transform:scaleX(0.9);transform-origin:0 0;">300</div>
<div class="t" style="left:1179.02px;top:315.59px;font-size:12.3px;line-height:12.3px;color:#333;transform:scaleX(0.9);transform-origin:0 0;">298</div>
<div class="t" style="left:375.53px;top:333.19px;font-size:12.3px;line-height:12.3px;color:#333;transform:scaleX(0.9);transform-origin:0 0;">312</div>
<div class="t" style="left:402.03px;top:333.19px;font-size:12.3px;line-height:12.3px;color:#333;transform:scaleX(0.9);transform-origin:0 0;">312</div>
<div class="t" style="left:428.53px;top:333.19px;font-size:12.3px;line-height:12.3px;color:#333;transform:scaleX(0.9);transform-origin:0 0;">312</div>
<div class="t" style="left:461.16px;top:333.19px;font-size:12.3px;line-height:12.3px;color:#333;transform:scaleX(0.9);transform-origin:0 0;">314</div>
<div class="t" style="left:493.79px;top:333.19px;font-size:12.3px;line-height:12.3px;color:#333;transform:scaleX(0.9);transform-origin:0 0;">315</div>
<div class="t" style="left:526.42px;top:333.19px;font-size:12.3px;line-height:12.3px;color:#333;transform:scaleX(0.9);transform-origin:0 0;">322</div>
<div class="t" style="left:559.05px;top:333.19px;font-size:12.3px;line-height:12.3px;color:#333;transform:scaleX(0.9);transform-origin:0 0;">328</div>
<div class="t" style="left:591.68px;top:333.19px;font-size:12.3px;line-height:12.3px;color:#333;transform:scaleX(0.9);transform-origin:0 0;">326</div>
<div class="t" style="left:624.31px;top:333.19px;font-size:12.3px;line-height:12.3px;color:#333;transform:scaleX(0.9);transform-origin:0 0;">323</div>
<div class="t" style="left:656.94px;top:333.19px;font-size:12.3px;line-height:12.3px;color:#333;transform:scaleX(0.9);transform-origin:0 0;">321</div>
<div class="t" style="left:689.57px;top:333.19px;font-size:12.3px;line-height:12.3px;color:#333;transform:scaleX(0.9);transform-origin:0 0;">318</div>
<div class="t" style="left:722.20px;top:333.19px;font-size:12.3px;line-height:12.3px;color:#333;transform:scaleX(0.9);transform-origin:0 0;">327</div>
<div class="t" style="left:754.83px;top:333.19px;font-size:12.3px;line-height:12.3px;color:#333;transform:scaleX(0.9);transform-origin:0 0;">335</div>
<div class="t" style="left:787.46px;top:333.19px;font-size:12.3px;line-height:12.3px;color:#333;transform:scaleX(0.9);transform-origin:0 0;">337</div>
<div class="t" style="left:820.09px;top:333.19px;font-size:12.3px;line-height:12.3px;color:#333;transform:scaleX(0.9);transform-origin:0 0;">338</div>
<div class="t" style="left:852.72px;top:333.19px;font-size:12.3px;line-height:12.3px;color:#333;transform:scaleX(0.9);transform-origin:0 0;">314</div>
<div class="t" style="left:885.35px;top:333.19px;font-size:12.3px;line-height:12.3px;color:#333;transform:scaleX(0.9);transform-origin:0 0;">290</div>
<div class="t" style="left:917.98px;top:333.19px;font-size:12.3px;line-height:12.3px;color:#333;transform:scaleX(0.9);transform-origin:0 0;">286</div>
<div class="t" style="left:950.61px;top:333.19px;font-size:12.3px;line-height:12.3px;color:#333;transform:scaleX(0.9);transform-origin:0 0;">282</div>
<div class="t" style="left:983.24px;top:333.19px;font-size:12.3px;line-height:12.3px;color:#333;transform:scaleX(0.9);transform-origin:0 0;">299</div>
<div class="t" style="left:1015.87px;top:333.19px;font-size:12.3px;line-height:12.3px;color:#333;transform:scaleX(0.9);transform-origin:0 0;">315</div>
<div class="t" style="left:1048.50px;top:333.19px;font-size:12.3px;line-height:12.3px;color:#333;transform:scaleX(0.9);transform-origin:0 0;">305</div>
<div class="t" style="left:1081.13px;top:333.19px;font-size:12.3px;line-height:12.3px;color:#333;transform:scaleX(0.9);transform-origin:0 0;">295</div>
<div class="t" style="left:1113.76px;top:333.19px;font-size:12.3px;line-height:12.3px;color:#333;transform:scaleX(0.9);transform-origin:0 0;">295</div>
<div class="t" style="left:1146.39px;top:333.19px;font-size:12.3px;line-height:12.3px;color:#333;transform:scaleX(0.9);transform-origin:0 0;">295</div>
<div class="t" style="left:1179.02px;top:333.19px;font-size:12.3px;line-height:12.3px;color:#333;transform:scaleX(0.9);transform-origin:0 0;">295</div>
<div class="t" style="left:375.53px;top:350.79px;font-size:12.3px;line-height:12.3px;color:#333;transform:scaleX(0.9);transform-origin:0 0;">307</div>
<div class="t" style="left:402.03px;top:350.79px;font-size:12.3px;line-height:12.3px;color:#333;transform:scaleX(0.9);transform-origin:0 0;">307</div>
<div class="t" style="left:428.53px;top:350.79px;font-size:12.3px;line-height:12.3px;color:#333;transform:scaleX(0.9);transform-origin:0 0;">307</div>
<div class="t" style="left:461.16px;top:350.79px;font-size:12.3px;line-height:12.3px;color:#333;transform:scaleX(0.9);transform-origin:0 0;">302</div>
<div class="t" style="left:493.79px;top:350.79px;font-size:12.3px;line-height:12.3px;color:#333;transform:scaleX(0.9);transform-origin:0 0;">297</div>
<div class="t" style="left:526.42px;top:350.79px;font-size:12.3px;line-height:12.3px;color:#333;transform:scaleX(0.9);transform-origin:0 0;">310</div>
<div class="t" style="left:559.05px;top:350.79px;font-size:12.3px;line-height:12.3px;color:#333;transform:scaleX(0.9);transform-origin:0 0;">322</div>
<div class="t" style="left:591.68px;top:350.79px;font-size:12.3px;line-height:12.3px;color:#333;transform:scaleX(0.9);transform-origin:0 0;">321</div>
<div class="t" style="left:624.31px;top:350.79px;font-size:12.3px;line-height:12.3px;color:#333;transform:scaleX(0.9);transform-origin:0 0;">320</div>
<div class="t" style="left:656.94px;top:350.79px;font-size:12.3px;line-height:12.3px;color:#333;transform:scaleX(0.9);transform-origin:0 0;">325</div>
<div class="t" style="left:689.57px;top:350.79px;font-size:12.3px;line-height:12.3px;color:#333;transform:scaleX(0.9);transform-origin:0 0;">329</div>
<div class="t" style="left:722.20px;top:350.79px;font-size:12.3px;line-height:12.3px;color:#333;transform:scaleX(0.9);transform-origin:0 0;">331</div>
<div class="t" style="left:754.83px;top:350.79px;font-size:12.3px;line-height:12.3px;color:#333;transform:scaleX(0.9);transform-origin:0 0;">332</div>
<div class="t" style="left:787.46px;top:350.79px;font-size:12.3px;line-height:12.3px;color:#333;transform:scaleX(0.9);transform-origin:0 0;">332</div>
<div class="t" style="left:820.09px;top:350.79px;font-size:12.3px;line-height:12.3px;color:#333;transform:scaleX(0.9);transform-origin:0 0;">331</div>
<div class="t" style="left:852.72px;top:350.79px;font-size:12.3px;line-height:12.3px;color:#333;transform:scaleX(0.9);transform-origin:0 0;">302</div>
<div class="t" style="left:885.35px;top:350.79px;font-size:12.3px;line-height:12.3px;color:#333;transform:scaleX(0.9);transform-origin:0 0;">272</div>
<div class="t" style="left:917.98px;top:350.79px;font-size:12.3px;line-height:12.3px;color:#333;transform:scaleX(0.9);transform-origin:0 0;">265</div>
<div class="t" style="left:950.61px;top:350.79px;font-size:12.3px;line-height:12.3px;color:#333;transform:scaleX(0.9);transform-origin:0 0;">257</div>
<div class="t" style="left:983.24px;top:350.79px;font-size:12.3px;line-height:12.3px;color:#333;transform:scaleX(0.9);transform-origin:0 0;">261</div>
<div class="t" style="left:1015.87px;top:350.79px;font-size:12.3px;line-height:12.3px;color:#333;transform:scaleX(0.9);transform-origin:0 0;">265</div>
<div class="t" style="left:1048.50px;top:350.79px;font-size:12.3px;line-height:12.3px;color:#333;transform:scaleX(0.9);transform-origin:0 0;">269</div>
<div class="t" style="left:1081.13px;top:350.79px;font-size:12.3px;line-height:12.3px;color:#333;transform:scaleX(0.9);transform-origin:0 0;">272</div>
<div class="t" style="left:1113.76px;top:350.79px;font-size:12.3px;line-height:12.3px;color:#333;transform:scaleX(0.9);transform-origin:0 0;">276</div>
<div class="t" style="left:1146.39px;top:350.79px;font-size:12.3px;line-height:12.3px;color:#333;transform:scaleX(0.9);transform-origin:0 0;">280</div>
<div class="t" style="left:1179.02px;top:350.79px;font-size:12.3px;line-height:12.3px;color:#333;transform:scaleX(0.9);transform-origin:0 0;">284</div>
<div class="t" style="left:375.53px;top:368.39px;font-size:12.3px;line-height:12.3px;color:#333;transform:scaleX(0.9);transform-origin:0 0;">304</div>
<div class="t" style="left:402.03px;top:368.39px;font-size:12.3px;line-height:12.3px;color:#333;transform:scaleX(0.9);transform-origin:0 0;">304</div>
<div class="t" style="left:428.53px;top:368.39px;font-size:12.3px;line-height:12.3px;color:#333;transform:scaleX(0.9);transform-origin:0 0;">304</div>
<div class="t" style="left:461.16px;top:368.39px;font-size:12.3px;line-height:12.3px;color:#333;transform:scaleX(0.9);transform-origin:0 0;">298</div>
<div class="t" style="left:493.79px;top:368.39px;font-size:12.3px;line-height:12.3px;color:#333;transform:scaleX(0.9);transform-origin:0 0;">293</div>
<div class="t" style="left:526.42px;top:368.39px;font-size:12.3px;line-height:12.3px;color:#333;transform:scaleX(0.9);transform-origin:0 0;">296</div>
<div class="t" style="left:559.05px;top:368.39px;font-size:12.3px;line-height:12.3px;color:#333;transform:scaleX(0.9);transform-origin:0 0;">300</div>
<div class="t" style="left:591.68px;top:368.39px;font-size:12.3px;line-height:12.3px;color:#333;transform:scaleX(0.9);transform-origin:0 0;">307</div>
<div class="t" style="left:624.31px;top:368.39px;font-size:12.3px;line-height:12.3px;color:#333;transform:scaleX(0.9);transform-origin:0 0;">314</div>
<div class="t" style="left:656.94px;top:368.39px;font-size:12.3px;line-height:12.3px;color:#333;transform:scaleX(0.9);transform-origin:0 0;">319</div>
<div class="t" style="left:689.57px;top:368.39px;font-size:12.3px;line-height:12.3px;color:#333;transform:scaleX(0.9);transform-origin:0 0;">325</div>
<div class="t" style="left:722.20px;top:368.39px;font-size:12.3px;line-height:12.3px;color:#333;transform:scaleX(0.9);transform-origin:0 0;">324</div>
<div class="t" style="left:754.83px;top:368.39px;font-size:12.3px;line-height:12.3px;color:#333;transform:scaleX(0.9);transform-origin:0 0;">324</div>
<div class="t" style="left:787.46px;top:368.39px;font-size:12.3px;line-height:12.3px;color:#333;transform:scaleX(0.9);transform-origin:0 0;">327</div>
<div class="t" style="left:820.09px;top:368.39px;font-size:12.3px;line-height:12.3px;color:#333;transform:scaleX(0.9);transform-origin:0 0;">329</div>
<div class="t" style="left:852.72px;top:368.39px;font-size:12.3px;line-height:12.3px;color:#333;transform:scaleX(0.9);transform-origin:0 0;">299</div>
<div class="t" style="left:885.35px;top:368.39px;font-size:12.3px;line-height:12.3px;color:#333;transform:scaleX(0.9);transform-origin:0 0;">269</div>
<div class="t" style="left:917.98px;top:368.39px;font-size:12.3px;line-height:12.3px;color:#333;transform:scaleX(0.9);transform-origin:0 0;">263</div>
<div class="t" style="left:950.61px;top:368.39px;font-size:12.3px;line-height:12.3px;color:#333;transform:scaleX(0.9);transform-origin:0 0;">257</div>
<div class="t" style="left:983.24px;top:368.39px;font-size:12.3px;line-height:12.3px;color:#333;transform:scaleX(0.9);transform-origin:0 0;">258</div>
<div class="t" style="left:1015.87px;top:368.39px;font-size:12.3px;line-height:12.3px;color:#333;transform:scaleX(0.9);transform-origin:0 0;">259</div>
<div class="t" style="left:1048.50px;top:368.39px;font-size:12.3px;line-height:12.3px;color:#333;transform:scaleX(0.9);transform-origin:0 0;">262</div>
<div class="t" style="left:1081.13px;top:368.39px;font-size:12.3px;line-height:12.3px;color:#333;transform:scaleX(0.9);transform-origin:0 0;">266</div>
<div class="t" style="left:1113.76px;top:368.39px;font-size:12.3px;line-height:12.3px;color:#333;transform:scaleX(0.9);transform-origin:0 0;">268</div>
<div class="t" style="left:1146.39px;top:368.39px;font-size:12.3px;line-height:12.3px;color:#333;transform:scaleX(0.9);transform-origin:0 0;">269</div>
<div class="t" style="left:1179.02px;top:368.39px;font-size:12.3px;line-height:12.3px;color:#333;transform:scaleX(0.9);transform-origin:0 0;">271</div>
<div class="t" style="left:375.53px;top:385.99px;font-size:12.3px;line-height:12.3px;color:#333;transform:scaleX(0.9);transform-origin:0 0;">300</div>
<div class="t" style="left:402.03px;top:385.99px;font-size:12.3px;line-height:12.3px;color:#333;transform:scaleX(0.9);transform-origin:0 0;">300</div>
<div class="t" style="left:428.53px;top:385.99px;font-size:12.3px;line-height:12.3px;color:#333;transform:scaleX(0.9);transform-origin:0 0;">300</div>
<div class="t" style="left:461.16px;top:385.99px;font-size:12.3px;line-height:12.3px;color:#333;transform:scaleX(0.9);transform-origin:0 0;">294</div>
<div class="t" style="left:493.79px;top:385.99px;font-size:12.3px;line-height:12.3px;color:#333;transform:scaleX(0.9);transform-origin:0 0;">288</div>
<div class="t" style="left:526.42px;top:385.99px;font-size:12.3px;line-height:12.3px;color:#333;transform:scaleX(0.9);transform-origin:0 0;">283</div>
<div class="t" style="left:559.05px;top:385.99px;font-size:12.3px;line-height:12.3px;color:#333;transform:scaleX(0.9);transform-origin:0 0;">278</div>
<div class="t" style="left:591.68px;top:385.99px;font-size:12.3px;line-height:12.3px;color:#333;transform:scaleX(0.9);transform-origin:0 0;">293</div>
<div class="t" style="left:624.31px;top:385.99px;font-size:12.3px;line-height:12.3px;color:#333;transform:scaleX(0.9);transform-origin:0 0;">308</div>
<div class="t" style="left:656.94px;top:385.99px;font-size:12.3px;line-height:12.3px;color:#333;transform:scaleX(0.9);transform-origin:0 0;">314</div>
<div class="t" style="left:689.57px;top:385.99px;font-size:12.3px;line-height:12.3px;color:#333;transform:scaleX(0.9);transform-origin:0 0;">320</div>
<div class="t" style="left:722.20px;top:385.99px;font-size:12.3px;line-height:12.3px;color:#333;transform:scaleX(0.9);transform-origin:0 0;">318</div>
<div class="t" style="left:754.83px;top:385.99px;font-size:12.3px;line-height:12.3px;color:#333;transform:scaleX(0.9);transform-origin:0 0;">316</div>
<div class="t" style="left:787.46px;top:385.99px;font-size:12.3px;line-height:12.3px;color:#333;transform:scaleX(0.9);transform-origin:0 0;">322</div>
<div class="t" style="left:820.09px;top:385.99px;font-size:12.3px;line-height:12.3px;color:#333;transform:scaleX(0.9);transform-origin:0 0;">327</div>
<div class="t" style="left:852.72px;top:385.99px;font-size:12.3px;line-height:12.3px;color:#333;transform:scaleX(0.9);transform-origin:0 0;">296</div>
<div class="t" style="left:885.35px;top:385.99px;font-size:12.3px;line-height:12.3px;color:#333;transform:scaleX(0.9);transform-origin:0 0;">265</div>
<div class="t" style="left:917.98px;top:385.99px;font-size:12.3px;line-height:12.3px;color:#333;transform:scaleX(0.9);transform-origin:0 0;">261</div>
<div class="t" style="left:950.61px;top:385.99px;font-size:12.3px;line-height:12.3px;color:#333;transform:scaleX(0.9);transform-origin:0 0;">257</div>
<div class="t" style="left:983.24px;top:385.99px;font-size:12.3px;line-height:12.3px;color:#333;transform:scaleX(0.9);transform-origin:0 0;">255</div>
<div class="t" style="left:1015.87px;top:385.99px;font-size:12.3px;line-height:12.3px;color:#333;transform:scaleX(0.9);transform-origin:0 0;">252</div>
<div class="t" style="left:1048.50px;top:385.99px;font-size:12.3px;line-height:12.3px;color:#333;transform:scaleX(0.9);transform-origin:0 0;">256</div>
<div class="t" style="left:1081.13px;top:385.99px;font-size:12.3px;line-height:12.3px;color:#333;transform:scaleX(0.9);transform-origin:0 0;">260</div>
<div class="t" style="left:1113.76px;top:385.99px;font-size:12.3px;line-height:12.3px;color:#333;transform:scaleX(0.9);transform-origin:0 0;">259</div>
<div class="t" style="left:1146.39px;top:385.99px;font-size:12.3px;line-height:12.3px;color:#333;transform:scaleX(0.9);transform-origin:0 0;">258</div>
<div class="t" style="left:1179.02px;top:385.99px;font-size:12.3px;line-height:12.3px;color:#333;transform:scaleX(0.9);transform-origin:0 0;">258</div>
<div class="t" style="left:375.53px;top:403.59px;font-size:12.3px;line-height:12.3px;color:#333;transform:scaleX(0.9);transform-origin:0 0;">297</div>
<div class="t" style="left:402.03px;top:403.59px;font-size:12.3px;line-height:12.3px;color:#333;transform:scaleX(0.9);transform-origin:0 0;">297</div>
<div class="t" style="left:428.53px;top:403.59px;font-size:12.3px;line-height:12.3px;color:#333;transform:scaleX(0.9);transform-origin:0 0;">297</div>
<div class="t" style="left:461.16px;top:403.59px;font-size:12.3px;line-height:12.3px;color:#333;transform:scaleX(0.9);transform-origin:0 0;">296</div>
<div class="t" style="left:493.79px;top:403.59px;font-size:12.3px;line-height:12.3px;color:#333;transform:scaleX(0.9);transform-origin:0 0;">295</div>
<div class="t" style="left:526.42px;top:403.59px;font-size:12.3px;line-height:12.3px;color:#333;transform:scaleX(0.9);transform-origin:0 0;">287</div>
<div class="t" style="left:559.05px;top:403.59px;font-size:12.3px;line-height:12.3px;color:#333;transform:scaleX(0.9);transform-origin:0 0;">280</div>
<div class="t" style="left:591.68px;top:403.59px;font-size:12.3px;line-height:12.3px;color:#333;transform:scaleX(0.9);transform-origin:0 0;">286</div>
<div class="t" style="left:624.31px;top:403.59px;font-size:12.3px;line-height:12.3px;color:#333;transform:scaleX(0.9);transform-origin:0 0;">293</div>
<div class="t" style="left:656.94px;top:403.59px;font-size:12.3px;line-height:12.3px;color:#333;transform:scaleX(0.9);transform-origin:0 0;">296</div>
<div class="t" style="left:689.57px;top:403.59px;font-size:12.3px;line-height:12.3px;color:#333;transform:scaleX(0.9);transform-origin:0 0;">299</div>
<div class="t" style="left:722.20px;top:403.59px;font-size:12.3px;line-height:12.3px;color:#333;transform:scaleX(0.9);transform-origin:0 0;">307</div>
<div class="t" style="left:754.83px;top:403.59px;font-size:12.3px;line-height:12.3px;color:#333;transform:scaleX(0.9);transform-origin:0 0;">316</div>
<div class="t" style="left:787.46px;top:403.59px;font-size:12.3px;line-height:12.3px;color:#333;transform:scaleX(0.9);transform-origin:0 0;">320</div>
<div class="t" style="left:820.09px;top:403.59px;font-size:12.3px;line-height:12.3px;color:#333;transform:scaleX(0.9);transform-origin:0 0;">324</div>
<div class="t" style="left:852.72px;top:403.59px;font-size:12.3px;line-height:12.3px;color:#333;transform:scaleX(0.9);transform-origin:0 0;">296</div>
<div class="t" style="left:885.35px;top:403.59px;font-size:12.3px;line-height:12.3px;color:#333;transform:scaleX(0.9);transform-origin:0 0;">268</div>
<div class="t" style="left:917.98px;top:403.59px;font-size:12.3px;line-height:12.3px;color:#333;transform:scaleX(0.9);transform-origin:0 0;">265</div>
<div class="t" style="left:950.61px;top:403.59px;font-size:12.3px;line-height:12.3px;color:#333;transform:scaleX(0.9);transform-origin:0 0;">261</div>
<div class="t" style="left:983.24px;top:403.59px;font-size:12.3px;line-height:12.3px;color:#333;transform:scaleX(0.9);transform-origin:0 0;">261</div>
<div class="t" style="left:1015.87px;top:403.59px;font-size:12.3px;line-height:12.3px;color:#333;transform:scaleX(0.9);transform-origin:0 0;">260</div>
<div class="t" style="left:1048.50px;top:403.59px;font-size:12.3px;line-height:12.3px;color:#333;transform:scaleX(0.9);transform-origin:0 0;">265</div>
<div class="t" style="left:1081.13px;top:403.59px;font-size:12.3px;line-height:12.3px;color:#333;transform:scaleX(0.9);transform-origin:0 0;">269</div>
<div class="t" style="left:1113.76px;top:403.59px;font-size:12.3px;line-height:12.3px;color:#333;transform:scaleX(0.9);transform-origin:0 0;">267</div>
<div class="t" style="left:1146.39px;top:403.59px;font-size:12.3px;line-height:12.3px;color:#333;transform:scaleX(0.9);transform-origin:0 0;">264</div>
<div class="t" style="left:1179.02px;top:403.59px;font-size:12.3px;line-height:12.3px;color:#333;transform:scaleX(0.9);transform-origin:0 0;">262</div>
<div class="t" style="left:375.53px;top:421.19px;font-size:12.3px;line-height:12.3px;color:#333;transform:scaleX(0.9);transform-origin:0 0;">293</div>
<div class="t" style="left:402.03px;top:421.19px;font-size:12.3px;line-height:12.3px;color:#333;transform:scaleX(0.9);transform-origin:0 0;">293</div>
<div class="t" style="left:428.53px;top:421.19px;font-size:12.3px;line-height:12.3px;color:#333;transform:scaleX(0.9);transform-origin:0 0;">293</div>
<div class="t" style="left:461.16px;top:421.19px;font-size:12.3px;line-height:12.3px;color:#333;transform:scaleX(0.9);transform-origin:0 0;">297</div>
<div class="t" style="left:493.79px;top:421.19px;font-size:12.3px;line-height:12.3px;color:#333;transform:scaleX(0.9);transform-origin:0 0;">301</div>
<div class="t" style="left:526.42px;top:421.19px;font-size:12.3px;line-height:12.3px;color:#333;transform:scaleX(0.9);transform-origin:0 0;">292</div>
<div class="t" style="left:559.05px;top:421.19px;font-size:12.3px;line-height:12.3px;color:#333;transform:scaleX(0.9);transform-origin:0 0;">282</div>
<div class="t" style="left:591.68px;top:421.19px;font-size:12.3px;line-height:12.3px;color:#333;transform:scaleX(0.9);transform-origin:0 0;">280</div>
<div class="t" style="left:624.31px;top:421.19px;font-size:12.3px;line-height:12.3px;color:#333;transform:scaleX(0.9);transform-origin:0 0;">277</div>
<div class="t" style="left:656.94px;top:421.19px;font-size:12.3px;line-height:12.3px;color:#333;transform:scaleX(0.9);transform-origin:0 0;">278</div>
<div class="t" style="left:689.57px;top:421.19px;font-size:12.3px;line-height:12.3px;color:#333;transform:scaleX(0.9);transform-origin:0 0;">278</div>
<div class="t" style="left:722.20px;top:421.19px;font-size:12.3px;line-height:12.3px;color:#333;transform:scaleX(0.9);transform-origin:0 0;">297</div>
<div class="t" style="left:754.83px;top:421.19px;font-size:12.3px;line-height:12.3px;color:#333;transform:scaleX(0.9);transform-origin:0 0;">315</div>
<div class="t" style="left:787.46px;top:421.19px;font-size:12.3px;line-height:12.3px;color:#333;transform:scaleX(0.9);transform-origin:0 0;">318</div>
<div class="t" style="left:820.09px;top:421.19px;font-size:12.3px;line-height:12.3px;color:#333;transform:scaleX(0.9);transform-origin:0 0;">321</div>
<div class="t" style="left:852.72px;top:421.19px;font-size:12.3px;line-height:12.3px;color:#333;transform:scaleX(0.9);transform-origin:0 0;">296</div>
<div class="t" style="left:885.35px;top:421.19px;font-size:12.3px;line-height:12.3px;color:#333;transform:scaleX(0.9);transform-origin:0 0;">271</div>
<div class="t" style="left:917.98px;top:421.19px;font-size:12.3px;line-height:12.3px;color:#333;transform:scaleX(0.9);transform-origin:0 0;">268</div>
<div class="t" style="left:950.61px;top:421.19px;font-size:12.3px;line-height:12.3px;color:#333;transform:scaleX(0.9);transform-origin:0 0;">265</div>
<div class="t" style="left:983.24px;top:421.19px;font-size:12.3px;line-height:12.3px;color:#333;transform:scaleX(0.9);transform-origin:0 0;">267</div>
<div class="t" style="left:1015.87px;top:421.19px;font-size:12.3px;line-height:12.3px;color:#333;transform:scaleX(0.9);transform-origin:0 0;">268</div>
<div class="t" style="left:1048.50px;top:421.19px;font-size:12.3px;line-height:12.3px;color:#333;transform:scaleX(0.9);transform-origin:0 0;">273</div>
<div class="t" style="left:1081.13px;top:421.19px;font-size:12.3px;line-height:12.3px;color:#333;transform:scaleX(0.9);transform-origin:0 0;">278</div>
<div class="t" style="left:1113.76px;top:421.19px;font-size:12.3px;line-height:12.3px;color:#333;transform:scaleX(0.9);transform-origin:0 0;">274</div>
<div class="t" style="left:1146.39px;top:421.19px;font-size:12.3px;line-height:12.3px;color:#333;transform:scaleX(0.9);transform-origin:0 0;">270</div>
<div class="t" style="left:1179.02px;top:421.19px;font-size:12.3px;line-height:12.3px;color:#333;transform:scaleX(0.9);transform-origin:0 0;">268</div>
<div class="t" style="left:375.53px;top:438.79px;font-size:12.3px;line-height:12.3px;color:#333;transform:scaleX(0.9);transform-origin:0 0;">296</div>
<div class="t" style="left:402.03px;top:438.79px;font-size:12.3px;line-height:12.3px;color:#333;transform:scaleX(0.9);transform-origin:0 0;">296</div>
<div class="t" style="left:428.53px;top:438.79px;font-size:12.3px;line-height:12.3px;color:#333;transform:scaleX(0.9);transform-origin:0 0;">296</div>
<div class="t" style="left:461.16px;top:438.79px;font-size:12.3px;line-height:12.3px;color:#333;transform:scaleX(0.9);transform-origin:0 0;">299</div>
<div class="t" style="left:493.79px;top:438.79px;font-size:12.3px;line-height:12.3px;color:#333;transform:scaleX(0.9);transform-origin:0 0;">303</div>
<div class="t" style="left:526.42px;top:438.79px;font-size:12.3px;line-height:12.3px;color:#333;transform:scaleX(0.9);transform-origin:0 0;">298</div>
<div class="t" style="left:559.05px;top:438.79px;font-size:12.3px;line-height:12.3px;color:#333;transform:scaleX(0.9);transform-origin:0 0;">292</div>
<div class="t" style="left:591.68px;top:438.79px;font-size:12.3px;line-height:12.3px;color:#333;transform:scaleX(0.9);transform-origin:0 0;">285</div>
<div class="t" style="left:624.31px;top:438.79px;font-size:12.3px;line-height:12.3px;color:#333;transform:scaleX(0.9);transform-origin:0 0;">278</div>
<div class="t" style="left:656.94px;top:438.79px;font-size:12.3px;line-height:12.3px;color:#333;transform:scaleX(0.9);transform-origin:0 0;">279</div>
<div class="t" style="left:689.57px;top:438.79px;font-size:12.3px;line-height:12.3px;color:#333;transform:scaleX(0.9);transform-origin:0 0;">280</div>
<div class="t" style="left:722.20px;top:438.79px;font-size:12.3px;line-height:12.3px;color:#333;transform:scaleX(0.9);transform-origin:0 0;">296</div>
<div class="t" style="left:754.83px;top:438.79px;font-size:12.3px;line-height:12.3px;color:#333;transform:scaleX(0.9);transform-origin:0 0;">312</div>
<div class="t" style="left:787.46px;top:438.79px;font-size:12.3px;line-height:12.3px;color:#333;transform:scaleX(0.9);transform-origin:0 0;">316</div>
<div class="t" style="left:820.09px;top:438.79px;font-size:12.3px;line-height:12.3px;color:#333;transform:scaleX(0.9);transform-origin:0 0;">321</div>
<div class="t" style="left:852.72px;top:438.79px;font-size:12.3px;line-height:12.3px;color:#333;transform:scaleX(0.9);transform-origin:0 0;">299</div>
<div class="t" style="left:885.35px;top:438.79px;font-size:12.3px;line-height:12.3px;color:#333;transform:scaleX(0.9);transform-origin:0 0;">278</div>
<div class="t" style="left:917.98px;top:438.79px;font-size:12.3px;line-height:12.3px;color:#333;transform:scaleX(0.9);transform-origin:0 0;">279</div>
<div class="t" style="left:950.61px;top:438.79px;font-size:12.3px;line-height:12.3px;color:#333;transform:scaleX(0.9);transform-origin:0 0;">280</div>
<div class="t" style="left:983.24px;top:438.79px;font-size:12.3px;line-height:12.3px;color:#333;transform:scaleX(0.9);transform-origin:0 0;">280</div>
<div class="t" style="left:1015.87px;top:438.79px;font-size:12.3px;line-height:12.3px;color:#333;transform:scaleX(0.9);transform-origin:0 0;">281</div>
<div class="t" style="left:1048.50px;top:438.79px;font-size:12.3px;line-height:12.3px;color:#333;transform:scaleX(0.9);transform-origin:0 0;">282</div>
<div class="t" style="left:1081.13px;top:438.79px;font-size:12.3px;line-height:12.3px;color:#333;transform:scaleX(0.9);transform-origin:0 0;">284</div>
<div class="t" style="left:1113.76px;top:438.79px;font-size:12.3px;line-height:12.3px;color:#333;transform:scaleX(0.9);transform-origin:0 0;">283</div>
<div class="t" style="left:1146.39px;top:438.79px;font-size:12.3px;line-height:12.3px;color:#333;transform:scaleX(0.9);transform-origin:0 0;">283</div>
<div class="t" style="left:1179.02px;top:438.79px;font-size:12.3px;line-height:12.3px;color:#333;transform:scaleX(0.9);transform-origin:0 0;">283</div>
<div class="t" style="left:375.53px;top:456.39px;font-size:12.3px;line-height:12.3px;color:#333;transform:scaleX(0.9);transform-origin:0 0;">298</div>
<div class="t" style="left:402.03px;top:456.39px;font-size:12.3px;line-height:12.3px;color:#333;transform:scaleX(0.9);transform-origin:0 0;">298</div>
<div class="t" style="left:428.53px;top:456.39px;font-size:12.3px;line-height:12.3px;color:#333;transform:scaleX(0.9);transform-origin:0 0;">298</div>
<div class="t" style="left:461.16px;top:456.39px;font-size:12.3px;line-height:12.3px;color:#333;transform:scaleX(0.9);transform-origin:0 0;">302</div>
<div class="t" style="left:493.79px;top:456.39px;font-size:12.3px;line-height:12.3px;color:#333;transform:scaleX(0.9);transform-origin:0 0;">305</div>
<div class="t" style="left:526.42px;top:456.39px;font-size:12.3px;line-height:12.3px;color:#333;transform:scaleX(0.9);transform-origin:0 0;">304</div>
<div class="t" style="left:559.05px;top:456.39px;font-size:12.3px;line-height:12.3px;color:#333;transform:scaleX(0.9);transform-origin:0 0;">302</div>
<div class="t" style="left:591.68px;top:456.39px;font-size:12.3px;line-height:12.3px;color:#333;transform:scaleX(0.9);transform-origin:0 0;">290</div>
<div class="t" style="left:624.31px;top:456.39px;font-size:12.3px;line-height:12.3px;color:#333;transform:scaleX(0.9);transform-origin:0 0;">278</div>
<div class="t" style="left:656.94px;top:456.39px;font-size:12.3px;line-height:12.3px;color:#333;transform:scaleX(0.9);transform-origin:0 0;">280</div>
<div class="t" style="left:689.57px;top:456.39px;font-size:12.3px;line-height:12.3px;color:#333;transform:scaleX(0.9);transform-origin:0 0;">281</div>
<div class="t" style="left:722.20px;top:456.39px;font-size:12.3px;line-height:12.3px;color:#333;transform:scaleX(0.9);transform-origin:0 0;">295</div>
<div class="t" style="left:754.83px;top:456.39px;font-size:12.3px;line-height:12.3px;color:#333;transform:scaleX(0.9);transform-origin:0 0;">308</div>
<div class="t" style="left:787.46px;top:456.39px;font-size:12.3px;line-height:12.3px;color:#333;transform:scaleX(0.9);transform-origin:0 0;">314</div>
<div class="t" style="left:820.09px;top:456.39px;font-size:12.3px;line-height:12.3px;color:#333;transform:scaleX(0.9);transform-origin:0 0;">320</div>
<div class="t" style="left:852.72px;top:456.39px;font-size:12.3px;line-height:12.3px;color:#333;transform:scaleX(0.9);transform-origin:0 0;">302</div>
<div class="t" style="left:885.35px;top:456.39px;font-size:12.3px;line-height:12.3px;color:#333;transform:scaleX(0.9);transform-origin:0 0;">284</div>
<div class="t" style="left:917.98px;top:456.39px;font-size:12.3px;line-height:12.3px;color:#333;transform:scaleX(0.9);transform-origin:0 0;">290</div>
<div class="t" style="left:950.61px;top:456.39px;font-size:12.3px;line-height:12.3px;color:#333;transform:scaleX(0.9);transform-origin:0 0;">295</div>
<div class="t" style="left:983.24px;top:456.39px;font-size:12.3px;line-height:12.3px;color:#333;transform:scaleX(0.9);transform-origin:0 0;">294</div>
<div class="t" style="left:1015.87px;top:456.39px;font-size:12.3px;line-height:12.3px;color:#333;transform:scaleX(0.9);transform-origin:0 0;">293</div>
<div class="t" style="left:1048.50px;top:456.39px;font-size:12.3px;line-height:12.3px;color:#333;transform:scaleX(0.9);transform-origin:0 0;">292</div>
<div class="t" style="left:1081.13px;top:456.39px;font-size:12.3px;line-height:12.3px;color:#333;transform:scaleX(0.9);transform-origin:0 0;">290</div>
<div class="t" style="left:1113.76px;top:456.39px;font-size:12.3px;line-height:12.3px;color:#333;transform:scaleX(0.9);transform-origin:0 0;">293</div>
<div class="t" style="left:1146.39px;top:456.39px;font-size:12.3px;line-height:12.3px;color:#333;transform:scaleX(0.9);transform-origin:0 0;">295</div>
<div class="t" style="left:1179.02px;top:456.39px;font-size:12.3px;line-height:12.3px;color:#333;transform:scaleX(0.9);transform-origin:0 0;">297</div>
<div class="t" style="left:375.53px;top:473.99px;font-size:12.3px;line-height:12.3px;color:#333;transform:scaleX(0.9);transform-origin:0 0;">290</div>
<div class="t" style="left:402.03px;top:473.99px;font-size:12.3px;line-height:12.3px;color:#333;transform:scaleX(0.9);transform-origin:0 0;">290</div>
<div class="t" style="left:428.53px;top:473.99px;font-size:12.3px;line-height:12.3px;color:#333;transform:scaleX(0.9);transform-origin:0 0;">290</div>
<div class="t" style="left:461.16px;top:473.99px;font-size:12.3px;line-height:12.3px;color:#333;transform:scaleX(0.9);transform-origin:0 0;">290</div>
<div class="t" style="left:493.79px;top:473.99px;font-size:12.3px;line-height:12.3px;color:#333;transform:scaleX(0.9);transform-origin:0 0;">290</div>
<div class="t" style="left:526.42px;top:473.99px;font-size:12.3px;line-height:12.3px;color:#333;transform:scaleX(0.9);transform-origin:0 0;">289</div>
<div class="t" style="left:559.05px;top:473.99px;font-size:12.3px;line-height:12.3px;color:#333;transform:scaleX(0.9);transform-origin:0 0;">289</div>
<div class="t" style="left:591.68px;top:473.99px;font-size:12.3px;line-height:12.3px;color:#333;transform:scaleX(0.9);transform-origin:0 0;">287</div>
<div class="t" style="left:624.31px;top:473.99px;font-size:12.3px;line-height:12.3px;color:#333;transform:scaleX(0.9);transform-origin:0 0;">285</div>
<div class="t" style="left:656.94px;top:473.99px;font-size:12.3px;line-height:12.3px;color:#333;transform:scaleX(0.9);transform-origin:0 0;">286</div>
<div class="t" style="left:689.57px;top:473.99px;font-size:12.3px;line-height:12.3px;color:#333;transform:scaleX(0.9);transform-origin:0 0;">286</div>
<div class="t" style="left:722.20px;top:473.99px;font-size:12.3px;line-height:12.3px;color:#333;transform:scaleX(0.9);transform-origin:0 0;">296</div>
<div class="t" style="left:754.83px;top:473.99px;font-size:12.3px;line-height:12.3px;color:#333;transform:scaleX(0.9);transform-origin:0 0;">307</div>
<div class="t" style="left:788.28px;top:473.99px;font-size:12.3px;line-height:12.3px;color:#333;transform:scaleX(0.9);transform-origin:0 0;">311</div>
<div class="t" style="left:820.09px;top:473.99px;font-size:12.3px;line-height:12.3px;color:#333;transform:scaleX(0.9);transform-origin:0 0;">316</div>
<div class="t" style="left:852.72px;top:473.99px;font-size:12.3px;line-height:12.3px;color:#333;transform:scaleX(0.9);transform-origin:0 0;">310</div>
<div class="t" style="left:885.35px;top:473.99px;font-size:12.3px;line-height:12.3px;color:#333;transform:scaleX(0.9);transform-origin:0 0;">305</div>
<div class="t" style="left:917.98px;top:473.99px;font-size:12.3px;line-height:12.3px;color:#333;transform:scaleX(0.9);transform-origin:0 0;">301</div>
<div class="t" style="left:950.61px;top:473.99px;font-size:12.3px;line-height:12.3px;color:#333;transform:scaleX(0.9);transform-origin:0 0;">298</div>
<div class="t" style="left:983.24px;top:473.99px;font-size:12.3px;line-height:12.3px;color:#333;transform:scaleX(0.9);transform-origin:0 0;">297</div>
<div class="t" style="left:1015.87px;top:473.99px;font-size:12.3px;line-height:12.3px;color:#333;transform:scaleX(0.9);transform-origin:0 0;">296</div>
<div class="t" style="left:1048.50px;top:473.99px;font-size:12.3px;line-height:12.3px;color:#333;transform:scaleX(0.9);transform-origin:0 0;">295</div>
<div class="t" style="left:1081.13px;top:473.99px;font-size:12.3px;line-height:12.3px;color:#333;transform:scaleX(0.9);transform-origin:0 0;">295</div>
<div class="t" style="left:1113.76px;top:473.99px;font-size:12.3px;line-height:12.3px;color:#333;transform:scaleX(0.9);transform-origin:0 0;">296</div>
<div class="t" style="left:1146.39px;top:473.99px;font-size:12.3px;line-height:12.3px;color:#333;transform:scaleX(0.9);transform-origin:0 0;">298</div>
<div class="t" style="left:1179.02px;top:473.99px;font-size:12.3px;line-height:12.3px;color:#333;transform:scaleX(0.9);transform-origin:0 0;">300</div>
<div class="t" style="left:375.53px;top:491.59px;font-size:12.3px;line-height:12.3px;color:#333;transform:scaleX(0.9);transform-origin:0 0;">282</div>
<div class="t" style="left:402.03px;top:491.59px;font-size:12.3px;line-height:12.3px;color:#333;transform:scaleX(0.9);transform-origin:0 0;">282</div>
<div class="t" style="left:428.53px;top:491.59px;font-size:12.3px;line-height:12.3px;color:#333;transform:scaleX(0.9);transform-origin:0 0;">282</div>
<div class="t" style="left:461.16px;top:491.59px;font-size:12.3px;line-height:12.3px;color:#333;transform:scaleX(0.9);transform-origin:0 0;">279</div>
<div class="t" style="left:493.79px;top:491.59px;font-size:12.3px;line-height:12.3px;color:#333;transform:scaleX(0.9);transform-origin:0 0;">275</div>
<div class="t" style="left:526.42px;top:491.59px;font-size:12.3px;line-height:12.3px;color:#333;transform:scaleX(0.9);transform-origin:0 0;">275</div>
<div class="t" style="left:559.05px;top:491.59px;font-size:12.3px;line-height:12.3px;color:#333;transform:scaleX(0.9);transform-origin:0 0;">275</div>
<div class="t" style="left:591.68px;top:491.59px;font-size:12.3px;line-height:12.3px;color:#333;transform:scaleX(0.9);transform-origin:0 0;">284</div>
<div class="t" style="left:624.31px;top:491.59px;font-size:12.3px;line-height:12.3px;color:#333;transform:scaleX(0.9);transform-origin:0 0;">292</div>
<div class="t" style="left:656.94px;top:491.59px;font-size:12.3px;line-height:12.3px;color:#333;transform:scaleX(0.9);transform-origin:0 0;">292</div>
<div class="t" style="left:689.57px;top:491.59px;font-size:12.3px;line-height:12.3px;color:#333;transform:scaleX(0.9);transform-origin:0 0;">291</div>
<div class="t" style="left:722.20px;top:491.59px;font-size:12.3px;line-height:12.3px;color:#333;transform:scaleX(0.9);transform-origin:0 0;">298</div>
<div class="t" style="left:754.83px;top:491.59px;font-size:12.3px;line-height:12.3px;color:#333;transform:scaleX(0.9);transform-origin:0 0;">305</div>
<div class="t" style="left:787.46px;top:491.59px;font-size:12.3px;line-height:12.3px;color:#333;transform:scaleX(0.9);transform-origin:0 0;">309</div>
<div class="t" style="left:820.09px;top:491.59px;font-size:12.3px;line-height:12.3px;color:#333;transform:scaleX(0.9);transform-origin:0 0;">312</div>
<div class="t" style="left:852.72px;top:491.59px;font-size:12.3px;line-height:12.3px;color:#333;transform:scaleX(0.9);transform-origin:0 0;">319</div>
<div class="t" style="left:885.35px;top:491.59px;font-size:12.3px;line-height:12.3px;color:#333;transform:scaleX(0.9);transform-origin:0 0;">325</div>
<div class="t" style="left:917.98px;top:491.59px;font-size:12.3px;line-height:12.3px;color:#333;transform:scaleX(0.9);transform-origin:0 0;">313</div>
<div class="t" style="left:950.61px;top:491.59px;font-size:12.3px;line-height:12.3px;color:#333;transform:scaleX(0.9);transform-origin:0 0;">300</div>
<div class="t" style="left:983.24px;top:491.59px;font-size:12.3px;line-height:12.3px;color:#333;transform:scaleX(0.9);transform-origin:0 0;">299</div>
<div class="t" style="left:1015.87px;top:491.59px;font-size:12.3px;line-height:12.3px;color:#333;transform:scaleX(0.9);transform-origin:0 0;">298</div>
<div class="t" style="left:1048.50px;top:491.59px;font-size:12.3px;line-height:12.3px;color:#333;transform:scaleX(0.9);transform-origin:0 0;">299</div>
<div class="t" style="left:1081.13px;top:491.59px;font-size:12.3px;line-height:12.3px;color:#333;transform:scaleX(0.9);transform-origin:0 0;">300</div>
<div class="t" style="left:1113.76px;top:491.59px;font-size:12.3px;line-height:12.3px;color:#333;transform:scaleX(0.9);transform-origin:0 0;">300</div>
<div class="t" style="left:1146.39px;top:491.59px;font-size:12.3px;line-height:12.3px;color:#333;transform:scaleX(0.9);transform-origin:0 0;">300</div>
<div class="t" style="left:1179.02px;top:491.59px;font-size:12.3px;line-height:12.3px;color:#333;transform:scaleX(0.9);transform-origin:0 0;">301</div>
<div class="t" style="left:375.53px;top:509.19px;font-size:12.3px;line-height:12.3px;color:#333;transform:scaleX(0.9);transform-origin:0 0;">280</div>
<div class="t" style="left:402.03px;top:509.19px;font-size:12.3px;line-height:12.3px;color:#333;transform:scaleX(0.9);transform-origin:0 0;">280</div>
<div class="t" style="left:428.53px;top:509.19px;font-size:12.3px;line-height:12.3px;color:#333;transform:scaleX(0.9);transform-origin:0 0;">280</div>
<div class="t" style="left:461.16px;top:509.19px;font-size:12.3px;line-height:12.3px;color:#333;transform:scaleX(0.9);transform-origin:0 0;">279</div>
<div class="t" style="left:493.79px;top:509.19px;font-size:12.3px;line-height:12.3px;color:#333;transform:scaleX(0.9);transform-origin:0 0;">278</div>
<div class="t" style="left:526.42px;top:509.19px;font-size:12.3px;line-height:12.3px;color:#333;transform:scaleX(0.9);transform-origin:0 0;">278</div>
<div class="t" style="left:559.05px;top:509.19px;font-size:12.3px;line-height:12.3px;color:#333;transform:scaleX(0.9);transform-origin:0 0;">279</div>
<div class="t" style="left:591.68px;top:509.19px;font-size:12.3px;line-height:12.3px;color:#333;transform:scaleX(0.9);transform-origin:0 0;">287</div>
<div class="t" style="left:624.31px;top:509.19px;font-size:12.3px;line-height:12.3px;color:#333;transform:scaleX(0.9);transform-origin:0 0;">295</div>
<div class="t" style="left:656.94px;top:509.19px;font-size:12.3px;line-height:12.3px;color:#333;transform:scaleX(0.9);transform-origin:0 0;">297</div>
<div class="t" style="left:689.57px;top:509.19px;font-size:12.3px;line-height:12.3px;color:#333;transform:scaleX(0.9);transform-origin:0 0;">300</div>
<div class="t" style="left:722.20px;top:509.19px;font-size:12.3px;line-height:12.3px;color:#333;transform:scaleX(0.9);transform-origin:0 0;">306</div>
<div class="t" style="left:754.83px;top:509.19px;font-size:12.3px;line-height:12.3px;color:#333;transform:scaleX(0.9);transform-origin:0 0;">313</div>
<div class="t" style="left:787.46px;top:509.19px;font-size:12.3px;line-height:12.3px;color:#333;transform:scaleX(0.9);transform-origin:0 0;">314</div>
<div class="t" style="left:820.09px;top:509.19px;font-size:12.3px;line-height:12.3px;color:#333;transform:scaleX(0.9);transform-origin:0 0;">315</div>
<div class="t" style="left:852.72px;top:509.19px;font-size:12.3px;line-height:12.3px;color:#333;transform:scaleX(0.9);transform-origin:0 0;">321</div>
<div class="t" style="left:885.35px;top:509.19px;font-size:12.3px;line-height:12.3px;color:#333;transform:scaleX(0.9);transform-origin:0 0;">326</div>
<div class="t" style="left:917.98px;top:509.19px;font-size:12.3px;line-height:12.3px;color:#333;transform:scaleX(0.9);transform-origin:0 0;">313</div>
<div class="t" style="left:950.61px;top:509.19px;font-size:12.3px;line-height:12.3px;color:#333;transform:scaleX(0.9);transform-origin:0 0;">300</div>
<div class="t" style="left:983.24px;top:509.19px;font-size:12.3px;line-height:12.3px;color:#333;transform:scaleX(0.9);transform-origin:0 0;">300</div>
<div class="t" style="left:1015.87px;top:509.19px;font-size:12.3px;line-height:12.3px;color:#333;transform:scaleX(0.9);transform-origin:0 0;">299</div>
<div class="t" style="left:1048.50px;top:509.19px;font-size:12.3px;line-height:12.3px;color:#333;transform:scaleX(0.9);transform-origin:0 0;">301</div>
<div class="t" style="left:1081.13px;top:509.19px;font-size:12.3px;line-height:12.3px;color:#333;transform:scaleX(0.9);transform-origin:0 0;">303</div>
<div class="t" style="left:1113.76px;top:509.19px;font-size:12.3px;line-height:12.3px;color:#333;transform:scaleX(0.9);transform-origin:0 0;">303</div>
<div class="t" style="left:1146.39px;top:509.19px;font-size:12.3px;line-height:12.3px;color:#333;transform:scaleX(0.9);transform-origin:0 0;">303</div>
<div class="t" style="left:1179.02px;top:509.19px;font-size:12.3px;line-height:12.3px;color:#333;transform:scaleX(0.9);transform-origin:0 0;">304</div>
<div class="t" style="left:375.53px;top:526.79px;font-size:12.3px;line-height:12.3px;color:#333;transform:scaleX(0.9);transform-origin:0 0;">278</div>
<div class="t" style="left:402.03px;top:526.79px;font-size:12.3px;line-height:12.3px;color:#333;transform:scaleX(0.9);transform-origin:0 0;">278</div>
<div class="t" style="left:428.53px;top:526.79px;font-size:12.3px;line-height:12.3px;color:#333;transform:scaleX(0.9);transform-origin:0 0;">278</div>
<div class="t" style="left:461.16px;top:526.79px;font-size:12.3px;line-height:12.3px;color:#333;transform:scaleX(0.9);transform-origin:0 0;">279</div>
<div class="t" style="left:493.79px;top:526.79px;font-size:12.3px;line-height:12.3px;color:#333;transform:scaleX(0.9);transform-origin:0 0;">280</div>
<div class="t" style="left:526.42px;top:526.79px;font-size:12.3px;line-height:12.3px;color:#333;transform:scaleX(0.9);transform-origin:0 0;">281</div>
<div class="t" style="left:559.05px;top:526.79px;font-size:12.3px;line-height:12.3px;color:#333;transform:scaleX(0.9);transform-origin:0 0;">282</div>
<div class="t" style="left:591.68px;top:526.79px;font-size:12.3px;line-height:12.3px;color:#333;transform:scaleX(0.9);transform-origin:0 0;">290</div>
<div class="t" style="left:624.31px;top:526.79px;font-size:12.3px;line-height:12.3px;color:#333;transform:scaleX(0.9);transform-origin:0 0;">298</div>
<div class="t" style="left:656.94px;top:526.79px;font-size:12.3px;line-height:12.3px;color:#333;transform:scaleX(0.9);transform-origin:0 0;">303</div>
<div class="t" style="left:689.57px;top:526.79px;font-size:12.3px;line-height:12.3px;color:#333;transform:scaleX(0.9);transform-origin:0 0;">308</div>
<div class="t" style="left:722.20px;top:526.79px;font-size:12.3px;line-height:12.3px;color:#333;transform:scaleX(0.9);transform-origin:0 0;">314</div>
<div class="t" style="left:754.83px;top:526.79px;font-size:12.3px;line-height:12.3px;color:#333;transform:scaleX(0.9);transform-origin:0 0;">320</div>
<div class="t" style="left:787.46px;top:526.79px;font-size:12.3px;line-height:12.3px;color:#333;transform:scaleX(0.9);transform-origin:0 0;">319</div>
<div class="t" style="left:820.09px;top:526.79px;font-size:12.3px;line-height:12.3px;color:#333;transform:scaleX(0.9);transform-origin:0 0;">318</div>
<div class="t" style="left:852.72px;top:526.79px;font-size:12.3px;line-height:12.3px;color:#333;transform:scaleX(0.9);transform-origin:0 0;">323</div>
<div class="t" style="left:885.35px;top:526.79px;font-size:12.3px;line-height:12.3px;color:#333;transform:scaleX(0.9);transform-origin:0 0;">327</div>
<div class="t" style="left:917.98px;top:526.79px;font-size:12.3px;line-height:12.3px;color:#333;transform:scaleX(0.9);transform-origin:0 0;">314</div>
<div class="t" style="left:950.61px;top:526.79px;font-size:12.3px;line-height:12.3px;color:#333;transform:scaleX(0.9);transform-origin:0 0;">300</div>
<div class="t" style="left:983.24px;top:526.79px;font-size:12.3px;line-height:12.3px;color:#333;transform:scaleX(0.9);transform-origin:0 0;">300</div>
<div class="t" style="left:1015.87px;top:526.79px;font-size:12.3px;line-height:12.3px;color:#333;transform:scaleX(0.9);transform-origin:0 0;">300</div>
<div class="t" style="left:1048.50px;top:526.79px;font-size:12.3px;line-height:12.3px;color:#333;transform:scaleX(0.9);transform-origin:0 0;">303</div>
<div class="t" style="left:1081.13px;top:526.79px;font-size:12.3px;line-height:12.3px;color:#333;transform:scaleX(0.9);transform-origin:0 0;">305</div>
<div class="t" style="left:1113.76px;top:526.79px;font-size:12.3px;line-height:12.3px;color:#333;transform:scaleX(0.9);transform-origin:0 0;">305</div>
<div class="t" style="left:1146.39px;top:526.79px;font-size:12.3px;line-height:12.3px;color:#333;transform:scaleX(0.9);transform-origin:0 0;">305</div>
<div class="t" style="left:1179.02px;top:526.79px;font-size:12.3px;line-height:12.3px;color:#333;transform:scaleX(0.9);transform-origin:0 0;">306</div>
<div class="t" style="left:375.53px;top:544.39px;font-size:12.3px;line-height:12.3px;color:#333;transform:scaleX(0.9);transform-origin:0 0;">276</div>
<div class="t" style="left:402.03px;top:544.39px;font-size:12.3px;line-height:12.3px;color:#333;transform:scaleX(0.9);transform-origin:0 0;">276</div>
<div class="t" style="left:428.53px;top:544.39px;font-size:12.3px;line-height:12.3px;color:#333;transform:scaleX(0.9);transform-origin:0 0;">276</div>
<div class="t" style="left:461.16px;top:544.39px;font-size:12.3px;line-height:12.3px;color:#333;transform:scaleX(0.9);transform-origin:0 0;">278</div>
<div class="t" style="left:493.79px;top:544.39px;font-size:12.3px;line-height:12.3px;color:#333;transform:scaleX(0.9);transform-origin:0 0;">280</div>
<div class="t" style="left:526.42px;top:544.39px;font-size:12.3px;line-height:12.3px;color:#333;transform:scaleX(0.9);transform-origin:0 0;">281</div>
<div class="t" style="left:559.05px;top:544.39px;font-size:12.3px;line-height:12.3px;color:#333;transform:scaleX(0.9);transform-origin:0 0;">281</div>
<div class="t" style="left:591.68px;top:544.39px;font-size:12.3px;line-height:12.3px;color:#333;transform:scaleX(0.9);transform-origin:0 0;">290</div>
<div class="t" style="left:624.31px;top:544.39px;font-size:12.3px;line-height:12.3px;color:#333;transform:scaleX(0.9);transform-origin:0 0;">299</div>
<div class="t" style="left:656.94px;top:544.39px;font-size:12.3px;line-height:12.3px;color:#333;transform:scaleX(0.9);transform-origin:0 0;">305</div>
<div class="t" style="left:690.39px;top:544.39px;font-size:12.3px;line-height:12.3px;color:#333;transform:scaleX(0.9);transform-origin:0 0;">311</div>
<div class="t" style="left:722.20px;top:544.39px;font-size:12.3px;line-height:12.3px;color:#333;transform:scaleX(0.9);transform-origin:0 0;">316</div>
<div class="t" style="left:754.83px;top:544.39px;font-size:12.3px;line-height:12.3px;color:#333;transform:scaleX(0.9);transform-origin:0 0;">320</div>
<div class="t" style="left:787.46px;top:544.39px;font-size:12.3px;line-height:12.3px;color:#333;transform:scaleX(0.9);transform-origin:0 0;">322</div>
<div class="t" style="left:820.09px;top:544.39px;font-size:12.3px;line-height:12.3px;color:#333;transform:scaleX(0.9);transform-origin:0 0;">323</div>
<div class="t" style="left:852.72px;top:544.39px;font-size:12.3px;line-height:12.3px;color:#333;transform:scaleX(0.9);transform-origin:0 0;">327</div>
<div class="t" style="left:885.35px;top:544.39px;font-size:12.3px;line-height:12.3px;color:#333;transform:scaleX(0.9);transform-origin:0 0;">331</div>
<div class="t" style="left:917.98px;top:544.39px;font-size:12.3px;line-height:12.3px;color:#333;transform:scaleX(0.9);transform-origin:0 0;">319</div>
<div class="t" style="left:950.61px;top:544.39px;font-size:12.3px;line-height:12.3px;color:#333;transform:scaleX(0.9);transform-origin:0 0;">307</div>
<div class="t" style="left:983.24px;top:544.39px;font-size:12.3px;line-height:12.3px;color:#333;transform:scaleX(0.9);transform-origin:0 0;">306</div>
<div class="t" style="left:1015.87px;top:544.39px;font-size:12.3px;line-height:12.3px;color:#333;transform:scaleX(0.9);transform-origin:0 0;">306</div>
<div class="t" style="left:1048.50px;top:544.39px;font-size:12.3px;line-height:12.3px;color:#333;transform:scaleX(0.9);transform-origin:0 0;">306</div>
<div class="t" style="left:1081.13px;top:544.39px;font-size:12.3px;line-height:12.3px;color:#333;transform:scaleX(0.9);transform-origin:0 0;">305</div>
<div class="t" style="left:1113.76px;top:544.39px;font-size:12.3px;line-height:12.3px;color:#333;transform:scaleX(0.9);transform-origin:0 0;">306</div>
<div class="t" style="left:1146.39px;top:544.39px;font-size:12.3px;line-height:12.3px;color:#333;transform:scaleX(0.9);transform-origin:0 0;">307</div>
<div class="t" style="left:1179.02px;top:544.39px;font-size:12.3px;line-height:12.3px;color:#333;transform:scaleX(0.9);transform-origin:0 0;">309</div>
<div class="t" style="left:375.53px;top:561.99px;font-size:12.3px;line-height:12.3px;color:#333;transform:scaleX(0.9);transform-origin:0 0;">274</div>
<div class="t" style="left:402.03px;top:561.99px;font-size:12.3px;line-height:12.3px;color:#333;transform:scaleX(0.9);transform-origin:0 0;">274</div>
<div class="t" style="left:428.53px;top:561.99px;font-size:12.3px;line-height:12.3px;color:#333;transform:scaleX(0.9);transform-origin:0 0;">274</div>
<div class="t" style="left:461.16px;top:561.99px;font-size:12.3px;line-height:12.3px;color:#333;transform:scaleX(0.9);transform-origin:0 0;">277</div>
<div class="t" style="left:493.79px;top:561.99px;font-size:12.3px;line-height:12.3px;color:#333;transform:scaleX(0.9);transform-origin:0 0;">280</div>
<div class="t" style="left:526.42px;top:561.99px;font-size:12.3px;line-height:12.3px;color:#333;transform:scaleX(0.9);transform-origin:0 0;">280</div>
<div class="t" style="left:559.05px;top:561.99px;font-size:12.3px;line-height:12.3px;color:#333;transform:scaleX(0.9);transform-origin:0 0;">280</div>
<div class="t" style="left:591.68px;top:561.99px;font-size:12.3px;line-height:12.3px;color:#333;transform:scaleX(0.9);transform-origin:0 0;">290</div>
<div class="t" style="left:624.31px;top:561.99px;font-size:12.3px;line-height:12.3px;color:#333;transform:scaleX(0.9);transform-origin:0 0;">300</div>
<div class="t" style="left:656.94px;top:561.99px;font-size:12.3px;line-height:12.3px;color:#333;transform:scaleX(0.9);transform-origin:0 0;">307</div>
<div class="t" style="left:689.57px;top:561.99px;font-size:12.3px;line-height:12.3px;color:#333;transform:scaleX(0.9);transform-origin:0 0;">314</div>
<div class="t" style="left:722.20px;top:561.99px;font-size:12.3px;line-height:12.3px;color:#333;transform:scaleX(0.9);transform-origin:0 0;">317</div>
<div class="t" style="left:754.83px;top:561.99px;font-size:12.3px;line-height:12.3px;color:#333;transform:scaleX(0.9);transform-origin:0 0;">320</div>
<div class="t" style="left:787.46px;top:561.99px;font-size:12.3px;line-height:12.3px;color:#333;transform:scaleX(0.9);transform-origin:0 0;">324</div>
<div class="t" style="left:820.09px;top:561.99px;font-size:12.3px;line-height:12.3px;color:#333;transform:scaleX(0.9);transform-origin:0 0;">328</div>
<div class="t" style="left:852.72px;top:561.99px;font-size:12.3px;line-height:12.3px;color:#333;transform:scaleX(0.9);transform-origin:0 0;">332</div>
<div class="t" style="left:885.35px;top:561.99px;font-size:12.3px;line-height:12.3px;color:#333;transform:scaleX(0.9);transform-origin:0 0;">335</div>
<div class="t" style="left:917.98px;top:561.99px;font-size:12.3px;line-height:12.3px;color:#333;transform:scaleX(0.9);transform-origin:0 0;">324</div>
<div class="t" style="left:950.61px;top:561.99px;font-size:12.3px;line-height:12.3px;color:#333;transform:scaleX(0.9);transform-origin:0 0;">313</div>
<div class="t" style="left:983.24px;top:561.99px;font-size:12.3px;line-height:12.3px;color:#333;transform:scaleX(0.9);transform-origin:0 0;">313</div>
<div class="t" style="left:1015.87px;top:561.99px;font-size:12.3px;line-height:12.3px;color:#333;transform:scaleX(0.9);transform-origin:0 0;">312</div>
<div class="t" style="left:1048.50px;top:561.99px;font-size:12.3px;line-height:12.3px;color:#333;transform:scaleX(0.9);transform-origin:0 0;">309</div>
<div class="t" style="left:1081.13px;top:561.99px;font-size:12.3px;line-height:12.3px;color:#333;transform:scaleX(0.9);transform-origin:0 0;">305</div>
<div class="t" style="left:1113.76px;top:561.99px;font-size:12.3px;line-height:12.3px;color:#333;transform:scaleX(0.9);transform-origin:0 0;">307</div>
<div class="t" style="left:1146.39px;top:561.99px;font-size:12.3px;line-height:12.3px;color:#333;transform:scaleX(0.9);transform-origin:0 0;">308</div>
<div class="t" style="left:1179.02px;top:561.99px;font-size:12.3px;line-height:12.3px;color:#333;transform:scaleX(0.9);transform-origin:0 0;">310</div>
<div class="t" style="left:375.53px;top:579.59px;font-size:12.3px;line-height:12.3px;color:#333;transform:scaleX(0.9);transform-origin:0 0;">270</div>
<div class="t" style="left:402.03px;top:579.59px;font-size:12.3px;line-height:12.3px;color:#333;transform:scaleX(0.9);transform-origin:0 0;">270</div>
<div class="t" style="left:428.53px;top:579.59px;font-size:12.3px;line-height:12.3px;color:#333;transform:scaleX(0.9);transform-origin:0 0;">270</div>
<div class="t" style="left:461.16px;top:579.59px;font-size:12.3px;line-height:12.3px;color:#333;transform:scaleX(0.9);transform-origin:0 0;">272</div>
<div class="t" style="left:493.79px;top:579.59px;font-size:12.3px;line-height:12.3px;color:#333;transform:scaleX(0.9);transform-origin:0 0;">274</div>
<div class="t" style="left:526.42px;top:579.59px;font-size:12.3px;line-height:12.3px;color:#333;transform:scaleX(0.9);transform-origin:0 0;">278</div>
<div class="t" style="left:559.05px;top:579.59px;font-size:12.3px;line-height:12.3px;color:#333;transform:scaleX(0.9);transform-origin:0 0;">283</div>
<div class="t" style="left:591.68px;top:579.59px;font-size:12.3px;line-height:12.3px;color:#333;transform:scaleX(0.9);transform-origin:0 0;">288</div>
<div class="t" style="left:624.31px;top:579.59px;font-size:12.3px;line-height:12.3px;color:#333;transform:scaleX(0.9);transform-origin:0 0;">293</div>
<div class="t" style="left:656.94px;top:579.59px;font-size:12.3px;line-height:12.3px;color:#333;transform:scaleX(0.9);transform-origin:0 0;">297</div>
<div class="t" style="left:689.57px;top:579.59px;font-size:12.3px;line-height:12.3px;color:#333;transform:scaleX(0.9);transform-origin:0 0;">301</div>
<div class="t" style="left:722.20px;top:579.59px;font-size:12.3px;line-height:12.3px;color:#333;transform:scaleX(0.9);transform-origin:0 0;">305</div>
<div class="t" style="left:754.83px;top:579.59px;font-size:12.3px;line-height:12.3px;color:#333;transform:scaleX(0.9);transform-origin:0 0;">310</div>
<div class="t" style="left:787.46px;top:579.59px;font-size:12.3px;line-height:12.3px;color:#333;transform:scaleX(0.9);transform-origin:0 0;">314</div>
<div class="t" style="left:820.09px;top:579.59px;font-size:12.3px;line-height:12.3px;color:#333;transform:scaleX(0.9);transform-origin:0 0;">319</div>
<div class="t" style="left:852.72px;top:579.59px;font-size:12.3px;line-height:12.3px;color:#333;transform:scaleX(0.9);transform-origin:0 0;">322</div>
<div class="t" style="left:885.35px;top:579.59px;font-size:12.3px;line-height:12.3px;color:#333;transform:scaleX(0.9);transform-origin:0 0;">326</div>
<div class="t" style="left:917.98px;top:579.59px;font-size:12.3px;line-height:12.3px;color:#333;transform:scaleX(0.9);transform-origin:0 0;">320</div>
<div class="t" style="left:950.61px;top:579.59px;font-size:12.3px;line-height:12.3px;color:#333;transform:scaleX(0.9);transform-origin:0 0;">313</div>
<div class="t" style="left:983.24px;top:579.59px;font-size:12.3px;line-height:12.3px;color:#333;transform:scaleX(0.9);transform-origin:0 0;">313</div>
<div class="t" style="left:1015.87px;top:579.59px;font-size:12.3px;line-height:12.3px;color:#333;transform:scaleX(0.9);transform-origin:0 0;">313</div>
<div class="t" style="left:1049.32px;top:579.59px;font-size:12.3px;line-height:12.3px;color:#333;transform:scaleX(0.9);transform-origin:0 0;">311</div>
<div class="t" style="left:1081.13px;top:579.59px;font-size:12.3px;line-height:12.3px;color:#333;transform:scaleX(0.9);transform-origin:0 0;">309</div>
<div class="t" style="left:1114.58px;top:579.59px;font-size:12.3px;line-height:12.3px;color:#333;transform:scaleX(0.9);transform-origin:0 0;">311</div>
<div class="t" style="left:1146.39px;top:579.59px;font-size:12.3px;line-height:12.3px;color:#333;transform:scaleX(0.9);transform-origin:0 0;">313</div>
<div class="t" style="left:1179.02px;top:579.59px;font-size:12.3px;line-height:12.3px;color:#333;transform:scaleX(0.9);transform-origin:0 0;">316</div>
<div class="t" style="left:375.53px;top:597.19px;font-size:12.3px;line-height:12.3px;color:#333;transform:scaleX(0.9);transform-origin:0 0;">265</div>
<div class="t" style="left:402.03px;top:597.19px;font-size:12.3px;line-height:12.3px;color:#333;transform:scaleX(0.9);transform-origin:0 0;">265</div>
<div class="t" style="left:428.53px;top:597.19px;font-size:12.3px;line-height:12.3px;color:#333;transform:scaleX(0.9);transform-origin:0 0;">265</div>
<div class="t" style="left:461.16px;top:597.19px;font-size:12.3px;line-height:12.3px;color:#333;transform:scaleX(0.9);transform-origin:0 0;">267</div>
<div class="t" style="left:493.79px;top:597.19px;font-size:12.3px;line-height:12.3px;color:#333;transform:scaleX(0.9);transform-origin:0 0;">268</div>
<div class="t" style="left:526.42px;top:597.19px;font-size:12.3px;line-height:12.3px;color:#333;transform:scaleX(0.9);transform-origin:0 0;">277</div>
<div class="t" style="left:559.05px;top:597.19px;font-size:12.3px;line-height:12.3px;color:#333;transform:scaleX(0.9);transform-origin:0 0;">285</div>
<div class="t" style="left:591.68px;top:597.19px;font-size:12.3px;line-height:12.3px;color:#333;transform:scaleX(0.9);transform-origin:0 0;">286</div>
<div class="t" style="left:624.31px;top:597.19px;font-size:12.3px;line-height:12.3px;color:#333;transform:scaleX(0.9);transform-origin:0 0;">286</div>
<div class="t" style="left:656.94px;top:597.19px;font-size:12.3px;line-height:12.3px;color:#333;transform:scaleX(0.9);transform-origin:0 0;">287</div>
<div class="t" style="left:689.57px;top:597.19px;font-size:12.3px;line-height:12.3px;color:#333;transform:scaleX(0.9);transform-origin:0 0;">288</div>
<div class="t" style="left:722.20px;top:597.19px;font-size:12.3px;line-height:12.3px;color:#333;transform:scaleX(0.9);transform-origin:0 0;">294</div>
<div class="t" style="left:754.83px;top:597.19px;font-size:12.3px;line-height:12.3px;color:#333;transform:scaleX(0.9);transform-origin:0 0;">299</div>
<div class="t" style="left:787.46px;top:597.19px;font-size:12.3px;line-height:12.3px;color:#333;transform:scaleX(0.9);transform-origin:0 0;">304</div>
<div class="t" style="left:820.09px;top:597.19px;font-size:12.3px;line-height:12.3px;color:#333;transform:scaleX(0.9);transform-origin:0 0;">309</div>
<div class="t" style="left:852.72px;top:597.19px;font-size:12.3px;line-height:12.3px;color:#333;transform:scaleX(0.9);transform-origin:0 0;">313</div>
<div class="t" style="left:885.35px;top:597.19px;font-size:12.3px;line-height:12.3px;color:#333;transform:scaleX(0.9);transform-origin:0 0;">317</div>
<div class="t" style="left:917.98px;top:597.19px;font-size:12.3px;line-height:12.3px;color:#333;transform:scaleX(0.9);transform-origin:0 0;">315</div>
<div class="t" style="left:950.61px;top:597.19px;font-size:12.3px;line-height:12.3px;color:#333;transform:scaleX(0.9);transform-origin:0 0;">313</div>
<div class="t" style="left:983.24px;top:597.19px;font-size:12.3px;line-height:12.3px;color:#333;transform:scaleX(0.9);transform-origin:0 0;">313</div>
<div class="t" style="left:1015.87px;top:597.19px;font-size:12.3px;line-height:12.3px;color:#333;transform:scaleX(0.9);transform-origin:0 0;">313</div>
<div class="t" style="left:1048.50px;top:597.19px;font-size:12.3px;line-height:12.3px;color:#333;transform:scaleX(0.9);transform-origin:0 0;">313</div>
<div class="t" style="left:1081.13px;top:597.19px;font-size:12.3px;line-height:12.3px;color:#333;transform:scaleX(0.9);transform-origin:0 0;">313</div>
<div class="t" style="left:1113.76px;top:597.19px;font-size:12.3px;line-height:12.3px;color:#333;transform:scaleX(0.9);transform-origin:0 0;">315</div>
<div class="t" style="left:1146.39px;top:597.19px;font-size:12.3px;line-height:12.3px;color:#333;transform:scaleX(0.9);transform-origin:0 0;">317</div>
<div class="t" style="left:1179.02px;top:597.19px;font-size:12.3px;line-height:12.3px;color:#333;transform:scaleX(0.9);transform-origin:0 0;">320</div>
<div style="left:343px;top:606px;width:841px;height:14.5px;background:#f0f0f0;"></div>
<svg style="left:347px;top:609px" width="6" height="9"><path d="M5 0.5l-4 4 4 4" fill="none" stroke="#444" stroke-width="1.4"/></svg>
<div style="left:358px;top:607px;width:14px;height:13px;background:#cdcdcd;"></div>
<svg style="left:1175px;top:609px" width="6" height="9"><path d="M1 0.5l4 4-4 4" fill="none" stroke="#444" stroke-width="1.4"/></svg>
<div style="left:1184px;top:278px;width:13px;height:343px;background:#f0f0f0;"></div>
<svg style="left:1186px;top:284px" width="9" height="6"><path d="M0.5 5l4-4 4 4" fill="none" stroke="#444" stroke-width="1.4"/></svg>
<div style="left:1185px;top:293px;width:12px;height:14.5px;background:#cdcdcd;"></div>
<svg style="left:1186px;top:596px" width="9" height="6"><path d="M0.5 1l4 4 4-4" fill="none" stroke="#444" stroke-width="1.4"/></svg>
<div style="left:1197px;top:278px;width:3px;height:344px;background:#f8f8f8;"></div>
<div style="left:0px;top:622px;width:1200px;height:17px;background:#f0f0f0;border-top:1px solid #a0a0a0;"></div>
</body></html>
